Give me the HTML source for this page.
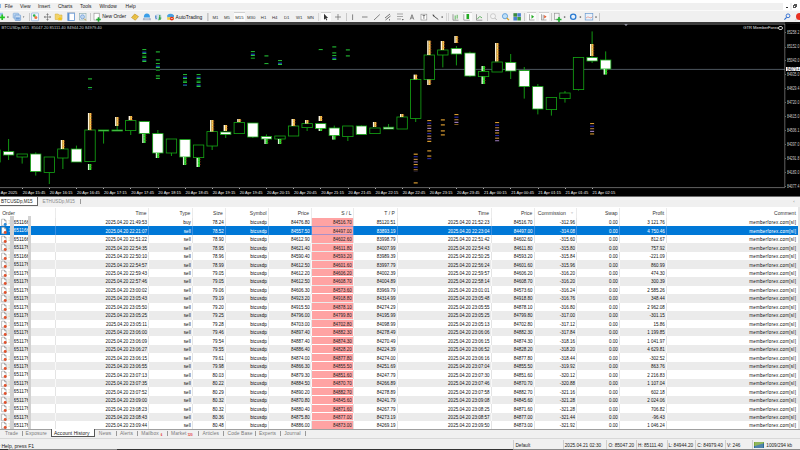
<!DOCTYPE html><html><head><meta charset="utf-8"><style>
*{box-sizing:border-box}
html,body{margin:0;padding:0;width:800px;height:450px;overflow:hidden;background:#f0f0f0;font-family:"Liberation Sans",sans-serif;}
.a{position:absolute}
.t{position:absolute;white-space:nowrap;line-height:1}
.r{text-align:right}
.k{-webkit-text-stroke:0.02px currentColor}
</style></head><body>

<div class="a" style="left:0;top:0;width:800px;height:2.5px;background:#fff"></div>
<div class="a" style="left:0;top:2.5px;width:800px;height:8.3px;background:#f0f0f0"></div>
<div class="a" style="left:0;top:9.8px;width:800px;height:0.9px;background:#fafafa"></div>
<div class="t" style="left:4.8px;top:4.6px;font-size:4.9px;color:#222">File</div>
<div class="t" style="left:20px;top:4.6px;font-size:4.9px;color:#222">View</div>
<div class="t" style="left:38px;top:4.6px;font-size:4.9px;color:#222">Insert</div>
<div class="t" style="left:58px;top:4.6px;font-size:4.9px;color:#222">Charts</div>
<div class="t" style="left:80px;top:4.6px;font-size:4.9px;color:#222">Tools</div>
<div class="t" style="left:99.4px;top:4.6px;font-size:4.9px;color:#222">Window</div>
<div class="t" style="left:125.6px;top:4.6px;font-size:4.9px;color:#222">Help</div>
<div class="a" style="left:0;top:3.5px;width:1.2px;height:4.5px;background:#8ab8e8"></div>
<div class="a" style="left:783px;top:2.5px;width:7px;height:7px;background:#fff"></div>
<div class="a" style="left:785.5px;top:7px;width:2.5px;height:0.8px;background:#333"></div>
<div class="a" style="left:792px;top:2.5px;width:8px;height:7px;background:#fff"></div>
<div class="a" style="left:794px;top:4.2px;width:2.6px;height:2.6px;border:0.6px solid #555"></div>
<div class="a" style="left:793.2px;top:5.2px;width:2.6px;height:2.6px;border:0.6px solid #555;background:#fff"></div>
<div class="a" style="left:0;top:11.2px;width:800px;height:10.8px;background:#f0f0f0"></div>
<div class="a" style="left:67px;top:12px;width:8px;height:9.2px;background:#fbfbfb;border-top:0.6px solid #d0d0d0"></div>
<div class="a" style="left:234.4px;top:12px;width:10.349999999999994px;height:9.2px;background:#fbfbfb;border-top:0.6px solid #d0d0d0"></div>
<div class="a" style="left:321px;top:12px;width:10px;height:9.2px;background:#fbfbfb;border-top:0.6px solid #d0d0d0"></div>
<div class="a" style="left:462.5px;top:12px;width:9.5px;height:9.2px;background:#fbfbfb;border-top:0.6px solid #d0d0d0"></div>
<div class="a" style="left:527px;top:12px;width:9px;height:9.2px;background:#fbfbfb;border-top:0.6px solid #d0d0d0"></div>
<div class="a" style="left:538.75px;top:12px;width:10.0px;height:9.2px;background:#fbfbfb;border-top:0.6px solid #d0d0d0"></div>
<div class="a" style="left:28.5px;top:12.5px;width:0.7px;height:8.5px;background:#c8c8c8"></div>
<div class="a" style="left:90px;top:12.5px;width:0.7px;height:8.5px;background:#c8c8c8"></div>
<div class="a" style="left:206.5px;top:12.5px;width:0.7px;height:8.5px;background:#c8c8c8"></div>
<div class="a" style="left:345.6px;top:12.5px;width:0.7px;height:8.5px;background:#c8c8c8"></div>
<div class="a" style="left:486.5px;top:12.5px;width:0.7px;height:8.5px;background:#c8c8c8"></div>
<div class="a" style="left:524px;top:12.5px;width:0.7px;height:8.5px;background:#c8c8c8"></div>
<div class="a" style="left:551px;top:12.5px;width:0.7px;height:8.5px;background:#c8c8c8"></div>
<div class="a" style="left:599.4px;top:12.5px;width:0.7px;height:8.5px;background:#c8c8c8"></div>
<div class="a" style="left:208.2px;top:12.5px;width:1.3px;height:8.5px;background:#d6d6d6"></div>
<div class="a" style="left:317.6px;top:12.5px;width:1.3px;height:8.5px;background:#d6d6d6"></div>
<div class="a" style="left:446.2px;top:12.5px;width:1.3px;height:8.5px;background:#d6d6d6"></div>
<div class="a" style="left:447.6px;top:12.5px;width:1.3px;height:8.5px;background:#d6d6d6"></div>
<div class="t" style="left:212.5px;top:16.0px;font-size:4.3px;color:#333">M1</div>
<div class="t" style="left:224px;top:16.0px;font-size:4.3px;color:#333">M5</div>
<div class="t" style="left:235.2px;top:16.0px;font-size:4.3px;color:#333">M15</div>
<div class="t" style="left:247px;top:16.0px;font-size:4.3px;color:#333">M30</div>
<div class="t" style="left:260.8px;top:16.0px;font-size:4.3px;color:#333">H1</div>
<div class="t" style="left:272px;top:16.0px;font-size:4.3px;color:#333">H4</div>
<div class="t" style="left:284px;top:16.0px;font-size:4.3px;color:#333">D1</div>
<div class="t" style="left:296px;top:16.0px;font-size:4.3px;color:#333">W1</div>
<div class="t" style="left:307.2px;top:16.0px;font-size:4.3px;color:#333">MN</div>
<div class="t" style="left:102.2px;top:15.4px;font-size:4.95px;color:#111">New Order</div>
<div class="t" style="left:175.6px;top:15.6px;font-size:4.95px;color:#111">AutoTrading</div>
<svg class="a" style="left:0;top:0" width="800" height="25" viewBox="0 0 800 25"><rect x="-1" y="12.8" width="4" height="3" fill="#9cc4ec"/><path d="M-0.5 17.3 h5.4 M2.2 14.6 v5.4" stroke="#22c422" stroke-width="1.7"/><rect x="7.2" y="16.4" width="1.4" height="1.3" fill="#555"/><rect x="13.2" y="13.2" width="5.5" height="5" rx="0.6" fill="#b8d4f0" stroke="#7aa6d8" stroke-width="0.6"/><rect x="15" y="15" width="5.6" height="5.5" rx="0.6" fill="#c8dcf2" stroke="#5e90cc" stroke-width="0.6"/><rect x="15.8" y="17.4" width="4" height="2.2" fill="#6f9fd8"/><path d="M22.8 16.4 h1.6 l-0.8 1.3z" fill="#555"/><rect x="31.5" y="13" width="7" height="7.8" rx="0.6" fill="#eef4fb" stroke="#8fb4de" stroke-width="0.7"/><circle cx="34.2" cy="15.6" r="1.3" fill="#2db34a"/><circle cx="35.8" cy="17.6" r="1.5" fill="#f07840"/><path d="M47.5 14.6 v4.8 M45.1 17 h4.8" stroke="#777" stroke-width="0.7"/><path d="M47.5 13.3 l1.3 1.5 h-2.6z M47.5 20.7 l1.3 -1.5 h-2.6z M43.8 17 l1.5 -1.3 v2.6z M51.2 17 l-1.5 -1.3 v2.6z" fill="#666"/><path d="M55.2 14 h3 l0.8 1 h3 v4.5 h-6.8z" fill="#f1d36a" stroke="#d4aa30" stroke-width="0.5"/><path d="M60 16.5 l0.8 1.5 l1.6 0.2 l-1.2 1.1 l0.3 1.6 l-1.5 -0.8 l-1.5 0.8 l0.3 -1.6 l-1.2 -1.1 l1.6 -0.2z" fill="#f5c518"/><rect x="67.8" y="13.2" width="6.6" height="7.3" fill="#fff" stroke="#5a8fd0" stroke-width="0.8"/><rect x="67.8" y="13.2" width="1.6" height="7.3" fill="#5a8fd0"/><rect x="79.5" y="13.5" width="6.5" height="6.5" fill="#e8eef6" stroke="#8aa" stroke-width="0.6"/><circle cx="82.5" cy="16.8" r="2" fill="#bcd6f0" stroke="#5a8fd0" stroke-width="0.6"/><path d="M84 18.5 l2 2" stroke="#c89020" stroke-width="0.9"/><rect x="94" y="13.2" width="5.2" height="6.8" fill="#fff" stroke="#8a8a8a" stroke-width="0.6"/><path d="M96.2 19.5 h4.6 M98.5 17.2 v4.6" stroke="#22aa33" stroke-width="1.6"/><path d="M131.5 17.5 l3.2 -3.5 l3.8 2.6 l-3.2 3.6z" fill="#f0c84a" stroke="#b88a20" stroke-width="0.6"/><path d="M133.2 17 l2.2 -1.8 M134.2 18 l2.2 -1.8" stroke="#c89a28" stroke-width="0.5"/><path d="M143.8 17.6 q0 -4.2 3.1 -4.2 q3.1 0 3.1 4.2z" fill="#3a9ee8"/><path d="M143.2 18 h7.4 l0.4 2.2 h-8.2z" fill="#a8b4c8"/><path d="M144.6 18.9 h4.6" stroke="#e8eef4" stroke-width="0.6"/><circle cx="158.5" cy="17" r="3.3" fill="#d4e0ec"/><path d="M156 15.5 q-0.8 2 0.3 3.6" stroke="#3a78c8" stroke-width="1.2" fill="none"/><path d="M159.8 15 v3.5 l-1 -0.8 M159.8 18.5 l1 -0.8" stroke="#30a040" stroke-width="1.1" fill="none"/><path d="M158.3 19.8 q2 0.2 3 -1.5" stroke="#40b050" stroke-width="1" fill="none"/><path d="M167.2 15.2 q3.2 -2.8 6.8 0 v2.2 h-6.8z" fill="#4aa0e0"/><path d="M167.2 17.2 h6.8 v2.6 h-6.8z" fill="#f2cc40"/><circle cx="171.8" cy="18.6" r="1.9" fill="#e02818"/><path d="M170.8 18.6 h2" stroke="#fff" stroke-width="0.7"/><path d="M324 13.8 v6 l1.4 -1.3 l1.1 2 l0.8 -0.4 l-1 -2 l1.8 0z" fill="#333"/><path d="M335 17 h6 M338 14 v6" stroke="#555" stroke-width="0.6"/><path d="M352.6 14.4 v5.6" stroke="#555" stroke-width="0.7"/><path d="M362 17 h5.5" stroke="#555" stroke-width="0.7"/><path d="M374 20 l5.8 -5.5" stroke="#555" stroke-width="0.7"/><path d="M385 18 l5 -4 M385.5 20 l5 -4" stroke="#666" stroke-width="0.9"/><path d="M389.5 19 v1.5" stroke="#333" stroke-width="0.6"/><path d="M397 14 h6 M397 16.5 h6 M397 19 h4" stroke="#888" stroke-width="0.7"/><path d="M401.8 19 l1 1.4 l1 -1.4z" fill="#555"/><path d="M410.2 19.5 l1.8 -4.8 l1.8 4.8 M411 18 h2" fill="none" stroke="#555" stroke-width="0.7"/><rect x="421" y="14.2" width="5.8" height="5.8" fill="#fff" stroke="#888" stroke-width="0.6"/><path d="M422.6 15.5 h2.6 M423.9 15.5 v3.4" stroke="#555" stroke-width="0.7"/><path d="M432.8 15.3 l5.5 4.2" stroke="#555" stroke-width="1"/><path d="M432.6 14.6 l2 0.4 l-1.4 1.4z" fill="#444"/><rect x="441.5" y="16.4" width="1.4" height="1.3" fill="#555"/><path d="M453 14.2 v6 h5.5" stroke="#666" stroke-width="0.6" fill="none"/><path d="M455.2 15.5 v4 M457.2 14.8 v3.8" stroke="#22a020" stroke-width="0.7"/><path d="M463.8 14.2 v6 h6" stroke="#666" stroke-width="0.6" fill="none"/><rect x="466.5" y="14" width="2.6" height="5" fill="#22aa22"/><path d="M476.5 14.2 v6 h5.8" stroke="#666" stroke-width="0.6" fill="none"/><path d="M477.5 19 q2 -4 4.5 -1" stroke="#2a9a2a" stroke-width="0.7" fill="none"/><circle cx="493" cy="16.2" r="2.5" fill="#f4f4f4" stroke="#bbb" stroke-width="0.7"/><path d="M494.8 18 l2 2" stroke="#bbb" stroke-width="1"/><circle cx="505" cy="16.2" r="2.6" fill="#bfe0f8" stroke="#4f94d8" stroke-width="0.8"/><path d="M506.8 18 l2.2 2.2" stroke="#d8a020" stroke-width="1.2"/><rect x="513.4" y="13.2" width="3.6" height="3.5" fill="#3a8a40"/><rect x="517.3" y="13.2" width="3.6" height="3.5" fill="#4a80d0"/><rect x="513.4" y="17" width="3.6" height="3.5" fill="#4a80d0"/><rect x="517.3" y="17" width="3.6" height="3.5" fill="#3a9a40"/><path d="M529.5 14.2 v6 M529.5 20 h5" stroke="#777" stroke-width="0.6"/><path d="M531.5 14.8 l2.6 2 l-2.6 2z" fill="#22aa22"/><path d="M541.5 14.2 v6 M541.5 20 h5" stroke="#777" stroke-width="0.6"/><path d="M543.2 14.8 v5" stroke="#666" stroke-width="0.6"/><path d="M544.2 15 l2.4 1.8 l-2.4 1.8z" fill="#e05a30"/><rect x="554.5" y="13.2" width="4.6" height="6.4" fill="#f4f4f4" stroke="#888" stroke-width="0.6"/><path d="M556.5 19.5 h5 M559 17 v5" stroke="#22b030" stroke-width="1.6"/><rect x="563.9" y="16.4" width="1.4" height="1.3" fill="#555"/><circle cx="573.2" cy="16.8" r="3.3" fill="#2a7ad0"/><circle cx="573.2" cy="16.8" r="2" fill="#e8f2fc"/><rect x="579.7" y="16.4" width="1.4" height="1.3" fill="#555"/><rect x="585.2" y="13.5" width="7.6" height="6.5" fill="#eaf2fb" stroke="#6a9ad0" stroke-width="0.7"/><path d="M586 18 q2 -2 3.5 -0.5 t3 -1" stroke="#e06040" stroke-width="0.5" fill="none"/><rect x="595.3" y="16.4" width="1.4" height="1.3" fill="#555"/><circle cx="788" cy="15.8" r="1.9" fill="none" stroke="#2a6ad0" stroke-width="0.9"/><path d="M786.6 17.3 l-2.2 2.3" stroke="#2a6ad0" stroke-width="1.1"/><circle cx="799.5" cy="16.5" r="3.5" fill="#e83020"/><path d="M796 19 l-1.5 1.5 l2.5 -0.5z" fill="#ccc"/></svg>
<div class="a" style="left:0;top:22px;width:800px;height:174px;background:#000"></div>
<div class="a" style="left:0;top:22px;width:785px;height:2.6px;background:#3c3c3c"></div>
<div class="a" style="left:785px;top:22px;width:15px;height:2.2px;background:#111"></div>
<svg class="a" style="left:0;top:0" width="800" height="200" viewBox="0 0 800 200"><path d="M0 69.4 H785" stroke="#6f7a86" stroke-width="0.7"/><rect x="-10.17" y="150" width="10.4" height="12.00" fill="#000000" stroke="#14a814" stroke-width="0.8"/><path d="M8.60 139 V151.6" stroke="#14a814" stroke-width="0.9"/><path d="M8.60 155 V160" stroke="#14a814" stroke-width="0.9"/><rect x="3.40" y="151.6" width="10.4" height="3.40" fill="#ffffff" stroke="#14a814" stroke-width="0.8"/><path d="M22.17 157 V163.6" stroke="#14a814" stroke-width="0.9"/><rect x="16.97" y="154" width="10.4" height="3.00" fill="#000000" stroke="#14a814" stroke-width="0.8"/><path d="M35.74 152.4 V154" stroke="#14a814" stroke-width="0.9"/><path d="M35.74 171.6 V175.6" stroke="#14a814" stroke-width="0.9"/><rect x="30.54" y="154" width="10.4" height="17.60" fill="#ffffff" stroke="#14a814" stroke-width="0.8"/><path d="M49.31 172.4 V184" stroke="#14a814" stroke-width="0.9"/><rect x="44.11" y="157" width="10.4" height="15.40" fill="#000000" stroke="#14a814" stroke-width="0.8"/><path d="M62.88 158 V169" stroke="#14a814" stroke-width="0.9"/><rect x="57.68" y="149" width="10.4" height="9.00" fill="#000000" stroke="#14a814" stroke-width="0.8"/><path d="M76.45 145.6 V149" stroke="#14a814" stroke-width="0.9"/><rect x="71.25" y="149" width="10.4" height="13.00" fill="#ffffff" stroke="#14a814" stroke-width="0.8"/><path d="M90.02 161.6 V162" stroke="#14a814" stroke-width="0.9"/><rect x="84.82" y="130" width="10.4" height="31.60" fill="#000000" stroke="#14a814" stroke-width="0.8"/><path d="M103.59 131 V143.6" stroke="#14a814" stroke-width="0.9"/><rect x="98.39" y="130" width="10.4" height="1.00" fill="#ffffff" stroke="#14a814" stroke-width="0.8"/><path d="M117.16 123 V130" stroke="#14a814" stroke-width="0.9"/><rect x="111.96" y="130" width="10.4" height="1.00" fill="#ffffff" stroke="#14a814" stroke-width="0.8"/><path d="M130.73 130.6 V135" stroke="#14a814" stroke-width="0.9"/><rect x="125.53" y="120.6" width="10.4" height="10.00" fill="#000000" stroke="#14a814" stroke-width="0.8"/><path d="M144.30 121 V121.6" stroke="#14a814" stroke-width="0.9"/><rect x="139.10" y="121.6" width="10.4" height="12.00" fill="#ffffff" stroke="#14a814" stroke-width="0.8"/><path d="M157.87 130 V133.6" stroke="#14a814" stroke-width="0.9"/><rect x="152.67" y="133.6" width="10.4" height="19.40" fill="#ffffff" stroke="#14a814" stroke-width="0.8"/><path d="M171.44 153 V156" stroke="#14a814" stroke-width="0.9"/><rect x="166.24" y="139" width="10.4" height="14.00" fill="#000000" stroke="#14a814" stroke-width="0.8"/><rect x="179.81" y="139.6" width="10.4" height="17.40" fill="#ffffff" stroke="#14a814" stroke-width="0.8"/><rect x="193.38" y="145" width="10.4" height="12.60" fill="#000000" stroke="#14a814" stroke-width="0.8"/><path d="M212.15 146 V150" stroke="#14a814" stroke-width="0.9"/><rect x="206.95" y="131.6" width="10.4" height="14.40" fill="#000000" stroke="#14a814" stroke-width="0.8"/><path d="M225.72 134.4 V138" stroke="#14a814" stroke-width="0.9"/><rect x="220.52" y="132" width="10.4" height="2.40" fill="#ffffff" stroke="#14a814" stroke-width="0.8"/><rect x="234.09" y="122.4" width="10.4" height="11.20" fill="#000000" stroke="#14a814" stroke-width="0.8"/><path d="M252.86 137 V138" stroke="#14a814" stroke-width="0.9"/><rect x="247.66" y="123" width="10.4" height="14.00" fill="#ffffff" stroke="#14a814" stroke-width="0.8"/><path d="M266.43 134.4 V136.4" stroke="#14a814" stroke-width="0.9"/><rect x="261.23" y="136.4" width="10.4" height="2.60" fill="#ffffff" stroke="#14a814" stroke-width="0.8"/><rect x="274.80" y="136" width="10.4" height="3.00" fill="#000000" stroke="#14a814" stroke-width="0.8"/><rect x="288.37" y="126" width="10.4" height="10.00" fill="#000000" stroke="#14a814" stroke-width="0.8"/><path d="M307.14 127.6 V131" stroke="#14a814" stroke-width="0.9"/><rect x="301.94" y="123.6" width="10.4" height="4.00" fill="#000000" stroke="#14a814" stroke-width="0.8"/><rect x="315.51" y="123.6" width="10.4" height="5.00" fill="#ffffff" stroke="#14a814" stroke-width="0.8"/><path d="M334.28 125.6 V128" stroke="#14a814" stroke-width="0.9"/><rect x="329.08" y="128" width="10.4" height="7.60" fill="#ffffff" stroke="#14a814" stroke-width="0.8"/><path d="M347.85 136.6 V141" stroke="#14a814" stroke-width="0.9"/><rect x="342.65" y="126" width="10.4" height="10.60" fill="#000000" stroke="#14a814" stroke-width="0.8"/><path d="M361.42 125.4 V126" stroke="#14a814" stroke-width="0.9"/><rect x="356.22" y="126" width="10.4" height="8.40" fill="#ffffff" stroke="#14a814" stroke-width="0.8"/><rect x="369.79" y="128" width="10.4" height="5.60" fill="#000000" stroke="#14a814" stroke-width="0.8"/><path d="M388.56 124 V127.2" stroke="#14a814" stroke-width="0.9"/><rect x="383.36" y="127.2" width="10.4" height="1.80" fill="#ffffff" stroke="#14a814" stroke-width="0.8"/><rect x="396.93" y="117" width="10.4" height="12.00" fill="#000000" stroke="#14a814" stroke-width="0.8"/><path d="M415.70 118.4 V122" stroke="#14a814" stroke-width="0.9"/><rect x="410.50" y="79.4" width="10.4" height="39.00" fill="#000000" stroke="#14a814" stroke-width="0.8"/><rect x="424.07" y="55" width="10.4" height="24.60" fill="#000000" stroke="#14a814" stroke-width="0.8"/><path d="M442.84 55 V67.4" stroke="#14a814" stroke-width="0.9"/><rect x="437.64" y="50" width="10.4" height="5.00" fill="#000000" stroke="#14a814" stroke-width="0.8"/><path d="M456.41 46 V48.4" stroke="#14a814" stroke-width="0.9"/><path d="M456.41 54 V65.4" stroke="#14a814" stroke-width="0.9"/><rect x="451.21" y="48.4" width="10.4" height="5.60" fill="#ffffff" stroke="#14a814" stroke-width="0.8"/><path d="M469.98 51.6 V53" stroke="#14a814" stroke-width="0.9"/><path d="M469.98 76 V77" stroke="#14a814" stroke-width="0.9"/><rect x="464.78" y="53" width="10.4" height="23.00" fill="#ffffff" stroke="#14a814" stroke-width="0.8"/><path d="M483.55 66 V71.4" stroke="#14a814" stroke-width="0.9"/><rect x="478.35" y="71.4" width="10.4" height="5.20" fill="#000000" stroke="#14a814" stroke-width="0.8"/><rect x="491.92" y="62" width="10.4" height="10.00" fill="#000000" stroke="#14a814" stroke-width="0.8"/><path d="M510.69 54 V62.4" stroke="#14a814" stroke-width="0.9"/><path d="M510.69 71 V79" stroke="#14a814" stroke-width="0.9"/><rect x="505.49" y="62.4" width="10.4" height="8.60" fill="#ffffff" stroke="#14a814" stroke-width="0.8"/><path d="M524.26 67 V70.6" stroke="#14a814" stroke-width="0.9"/><path d="M524.26 86.6 V98.6" stroke="#14a814" stroke-width="0.9"/><rect x="519.06" y="70.6" width="10.4" height="16.00" fill="#ffffff" stroke="#14a814" stroke-width="0.8"/><path d="M537.83 84 V86.6" stroke="#14a814" stroke-width="0.9"/><path d="M537.83 109 V114.4" stroke="#14a814" stroke-width="0.9"/><rect x="532.63" y="86.6" width="10.4" height="22.40" fill="#ffffff" stroke="#14a814" stroke-width="0.8"/><path d="M551.40 109.6 V115.6" stroke="#14a814" stroke-width="0.9"/><rect x="546.20" y="97.4" width="10.4" height="12.20" fill="#000000" stroke="#14a814" stroke-width="0.8"/><path d="M564.97 91 V93" stroke="#14a814" stroke-width="0.9"/><path d="M564.97 98.6 V102.6" stroke="#14a814" stroke-width="0.9"/><rect x="559.77" y="93" width="10.4" height="5.60" fill="#000000" stroke="#14a814" stroke-width="0.8"/><path d="M578.54 89.6 V90.6" stroke="#14a814" stroke-width="0.9"/><rect x="573.34" y="57.4" width="10.4" height="32.20" fill="#000000" stroke="#14a814" stroke-width="0.8"/><path d="M592.11 31.4 V57.4" stroke="#14a814" stroke-width="0.9"/><path d="M592.11 61 V63" stroke="#14a814" stroke-width="0.9"/><rect x="586.91" y="57.4" width="10.4" height="3.60" fill="#ffffff" stroke="#14a814" stroke-width="0.8"/><path d="M605.68 51.4 V60" stroke="#14a814" stroke-width="0.9"/><rect x="600.48" y="60" width="10.4" height="9.00" fill="#ffffff" stroke="#14a814" stroke-width="0.8"/><rect x="60.78" y="140.00" width="1.5" height="9.00" fill="#fff6dc"/><rect x="62.28" y="140.00" width="1.9" height="9.00" fill="#f8cc58"/><rect x="62.28" y="140.80" width="1.9" height="0.7" fill="#ec9a30"/><rect x="64.18" y="140.80" width="0.8" height="0.9" fill="#a83818"/><rect x="62.28" y="143.40" width="1.9" height="0.7" fill="#ec9a30"/><rect x="64.18" y="143.40" width="0.8" height="0.9" fill="#a83818"/><rect x="62.28" y="146.00" width="1.9" height="0.7" fill="#ec9a30"/><rect x="64.18" y="146.00" width="0.8" height="0.9" fill="#a83818"/><rect x="87.92" y="113.00" width="1.5" height="17.00" fill="#fff6dc"/><rect x="89.42" y="113.00" width="1.9" height="17.00" fill="#f8cc58"/><rect x="89.42" y="113.80" width="1.9" height="0.7" fill="#ec9a30"/><rect x="91.32" y="113.80" width="0.8" height="0.9" fill="#a83818"/><rect x="89.42" y="116.40" width="1.9" height="0.7" fill="#ec9a30"/><rect x="91.32" y="116.40" width="0.8" height="0.9" fill="#a83818"/><rect x="89.42" y="119.00" width="1.9" height="0.7" fill="#ec9a30"/><rect x="91.32" y="119.00" width="0.8" height="0.9" fill="#a83818"/><rect x="89.42" y="121.60" width="1.9" height="0.7" fill="#ec9a30"/><rect x="91.32" y="121.60" width="0.8" height="0.9" fill="#a83818"/><rect x="89.42" y="124.20" width="1.9" height="0.7" fill="#ec9a30"/><rect x="91.32" y="124.20" width="0.8" height="0.9" fill="#a83818"/><rect x="89.42" y="126.80" width="1.9" height="0.7" fill="#ec9a30"/><rect x="91.32" y="126.80" width="0.8" height="0.9" fill="#a83818"/><rect x="89.42" y="129.40" width="1.9" height="0.7" fill="#ec9a30"/><rect x="91.32" y="129.40" width="0.8" height="0.9" fill="#a83818"/><rect x="87.92" y="164.00" width="1.5" height="6.00" fill="#d6f6d0"/><rect x="89.42" y="164.00" width="1.9" height="6.00" fill="#34e034"/><rect x="89.42" y="164.80" width="1.9" height="0.7" fill="#18b818"/><rect x="91.32" y="164.80" width="0.8" height="0.9" fill="#902810"/><rect x="89.42" y="167.40" width="1.9" height="0.7" fill="#18b818"/><rect x="91.32" y="167.40" width="0.8" height="0.9" fill="#902810"/><rect x="88.02" y="78.30" width="4" height="1.2" fill="#20b030"/><rect x="88.02" y="87.00" width="4" height="1.30" fill="#20b030"/><rect x="88.02" y="88.30" width="4" height="1.30" fill="#000000"/><rect x="88.02" y="89.60" width="4" height="0.40" fill="#1a3ab0"/><rect x="115.06" y="117.00" width="1.5" height="9.00" fill="#fff6dc"/><rect x="116.56" y="117.00" width="1.9" height="9.00" fill="#f8cc58"/><rect x="116.56" y="117.80" width="1.9" height="0.7" fill="#ec9a30"/><rect x="118.46" y="117.80" width="0.8" height="0.9" fill="#a83818"/><rect x="116.56" y="120.40" width="1.9" height="0.7" fill="#ec9a30"/><rect x="118.46" y="120.40" width="0.8" height="0.9" fill="#a83818"/><rect x="116.56" y="123.00" width="1.9" height="0.7" fill="#ec9a30"/><rect x="118.46" y="123.00" width="0.8" height="0.9" fill="#a83818"/><rect x="128.63" y="116.00" width="1.5" height="4.00" fill="#fff6dc"/><rect x="130.13" y="116.00" width="1.9" height="4.00" fill="#f8cc58"/><rect x="130.13" y="116.80" width="1.9" height="0.7" fill="#ec9a30"/><rect x="132.03" y="116.80" width="0.8" height="0.9" fill="#a83818"/><rect x="130.13" y="119.40" width="1.9" height="0.7" fill="#ec9a30"/><rect x="132.03" y="119.40" width="0.8" height="0.9" fill="#a83818"/><rect x="142.20" y="134.00" width="1.5" height="9.00" fill="#d6f6d0"/><rect x="143.70" y="134.00" width="1.9" height="9.00" fill="#34e034"/><rect x="143.70" y="134.80" width="1.9" height="0.7" fill="#18b818"/><rect x="145.60" y="134.80" width="0.8" height="0.9" fill="#902810"/><rect x="143.70" y="137.40" width="1.9" height="0.7" fill="#18b818"/><rect x="145.60" y="137.40" width="0.8" height="0.9" fill="#902810"/><rect x="143.70" y="140.00" width="1.9" height="0.7" fill="#18b818"/><rect x="145.60" y="140.00" width="0.8" height="0.9" fill="#902810"/><rect x="142.30" y="49.00" width="4" height="1.30" fill="#20b030"/><rect x="142.30" y="50.30" width="4" height="1.30" fill="#000000"/><rect x="142.30" y="51.60" width="4" height="1.30" fill="#1a3ab0"/><rect x="142.30" y="52.90" width="4" height="1.30" fill="#28c838"/><rect x="142.30" y="54.20" width="4" height="1.30" fill="#000000"/><rect x="142.30" y="55.50" width="4" height="1.30" fill="#108020"/><rect x="142.30" y="56.80" width="4" height="1.30" fill="#20b030"/><rect x="142.30" y="58.10" width="4" height="1.30" fill="#000000"/><rect x="142.30" y="59.40" width="4" height="1.30" fill="#1a3ab0"/><rect x="142.30" y="60.70" width="4" height="1.30" fill="#28c838"/><rect x="142.30" y="62.00" width="4" height="1.00" fill="#000000"/><rect x="155.77" y="153.00" width="1.5" height="5.00" fill="#d6f6d0"/><rect x="157.27" y="153.00" width="1.9" height="5.00" fill="#34e034"/><rect x="157.27" y="153.80" width="1.9" height="0.7" fill="#18b818"/><rect x="159.17" y="153.80" width="0.8" height="0.9" fill="#902810"/><rect x="157.27" y="156.40" width="1.9" height="0.7" fill="#18b818"/><rect x="159.17" y="156.40" width="0.8" height="0.9" fill="#902810"/><rect x="155.87" y="51.30" width="4" height="1.2" fill="#20b030"/><rect x="155.87" y="59.30" width="4" height="1.2" fill="#20b030"/><rect x="155.87" y="63.00" width="4" height="1.30" fill="#20b030"/><rect x="155.87" y="64.30" width="4" height="1.30" fill="#000000"/><rect x="155.87" y="65.60" width="4" height="1.30" fill="#1a3ab0"/><rect x="155.87" y="66.90" width="4" height="1.30" fill="#28c838"/><rect x="155.87" y="68.20" width="4" height="1.30" fill="#000000"/><rect x="155.87" y="69.50" width="4" height="1.30" fill="#108020"/><rect x="155.87" y="70.80" width="4" height="0.20" fill="#20b030"/><rect x="155.87" y="75.30" width="4" height="1.2" fill="#20b030"/><rect x="155.87" y="77.80" width="4" height="1.2" fill="#20b030"/><rect x="182.91" y="157.00" width="1.5" height="8.00" fill="#d6f6d0"/><rect x="184.41" y="157.00" width="1.9" height="8.00" fill="#34e034"/><rect x="184.41" y="157.80" width="1.9" height="0.7" fill="#18b818"/><rect x="186.31" y="157.80" width="0.8" height="0.9" fill="#902810"/><rect x="184.41" y="160.40" width="1.9" height="0.7" fill="#18b818"/><rect x="186.31" y="160.40" width="0.8" height="0.9" fill="#902810"/><rect x="184.41" y="163.00" width="1.9" height="0.7" fill="#18b818"/><rect x="186.31" y="163.00" width="0.8" height="0.9" fill="#902810"/><rect x="183.01" y="74.00" width="4" height="1.30" fill="#20b030"/><rect x="183.01" y="75.30" width="4" height="1.30" fill="#000000"/><rect x="183.01" y="76.60" width="4" height="1.30" fill="#1a3ab0"/><rect x="183.01" y="77.90" width="4" height="1.30" fill="#28c838"/><rect x="183.01" y="79.20" width="4" height="1.30" fill="#000000"/><rect x="183.01" y="80.50" width="4" height="1.30" fill="#108020"/><rect x="183.01" y="81.80" width="4" height="1.30" fill="#20b030"/><rect x="183.01" y="83.10" width="4" height="1.30" fill="#000000"/><rect x="183.01" y="84.40" width="4" height="1.30" fill="#1a3ab0"/><rect x="183.01" y="85.70" width="4" height="0.30" fill="#28c838"/><rect x="196.48" y="158.00" width="1.5" height="9.00" fill="#d6f6d0"/><rect x="197.98" y="158.00" width="1.9" height="9.00" fill="#34e034"/><rect x="197.98" y="158.80" width="1.9" height="0.7" fill="#18b818"/><rect x="199.88" y="158.80" width="0.8" height="0.9" fill="#902810"/><rect x="197.98" y="161.40" width="1.9" height="0.7" fill="#18b818"/><rect x="199.88" y="161.40" width="0.8" height="0.9" fill="#902810"/><rect x="197.98" y="164.00" width="1.9" height="0.7" fill="#18b818"/><rect x="199.88" y="164.00" width="0.8" height="0.9" fill="#902810"/><rect x="196.58" y="74.00" width="4" height="1.30" fill="#20b030"/><rect x="196.58" y="75.30" width="4" height="1.30" fill="#000000"/><rect x="196.58" y="76.60" width="4" height="1.30" fill="#1a3ab0"/><rect x="196.58" y="77.90" width="4" height="1.30" fill="#28c838"/><rect x="196.58" y="79.20" width="4" height="1.30" fill="#000000"/><rect x="196.58" y="80.50" width="4" height="1.30" fill="#108020"/><rect x="196.58" y="81.80" width="4" height="1.30" fill="#20b030"/><rect x="196.58" y="83.10" width="4" height="1.30" fill="#000000"/><rect x="196.58" y="84.40" width="4" height="1.30" fill="#1a3ab0"/><rect x="196.58" y="85.70" width="4" height="1.30" fill="#28c838"/><rect x="196.58" y="87.00" width="4" height="1.00" fill="#000000"/><rect x="210.05" y="120.00" width="1.5" height="11.60" fill="#fff6dc"/><rect x="211.55" y="120.00" width="1.9" height="11.60" fill="#f8cc58"/><rect x="211.55" y="120.80" width="1.9" height="0.7" fill="#ec9a30"/><rect x="213.45" y="120.80" width="0.8" height="0.9" fill="#a83818"/><rect x="211.55" y="123.40" width="1.9" height="0.7" fill="#ec9a30"/><rect x="213.45" y="123.40" width="0.8" height="0.9" fill="#a83818"/><rect x="211.55" y="126.00" width="1.9" height="0.7" fill="#ec9a30"/><rect x="213.45" y="126.00" width="0.8" height="0.9" fill="#a83818"/><rect x="211.55" y="128.60" width="1.9" height="0.7" fill="#ec9a30"/><rect x="213.45" y="128.60" width="0.8" height="0.9" fill="#a83818"/><rect x="223.62" y="125.00" width="1.5" height="6.00" fill="#fff6dc"/><rect x="225.12" y="125.00" width="1.9" height="6.00" fill="#f8cc58"/><rect x="225.12" y="125.80" width="1.9" height="0.7" fill="#ec9a30"/><rect x="227.02" y="125.80" width="0.8" height="0.9" fill="#a83818"/><rect x="225.12" y="128.40" width="1.9" height="0.7" fill="#ec9a30"/><rect x="227.02" y="128.40" width="0.8" height="0.9" fill="#a83818"/><rect x="237.19" y="119.00" width="1.5" height="3.00" fill="#fff6dc"/><rect x="238.69" y="119.00" width="1.9" height="3.00" fill="#f8cc58"/><rect x="238.69" y="119.80" width="1.9" height="0.7" fill="#ec9a30"/><rect x="240.59" y="119.80" width="0.8" height="0.9" fill="#a83818"/><rect x="250.86" y="51.00" width="4" height="1.30" fill="#20b030"/><rect x="250.86" y="52.30" width="4" height="1.30" fill="#000000"/><rect x="250.86" y="53.60" width="4" height="1.30" fill="#1a3ab0"/><rect x="250.86" y="54.90" width="4" height="1.30" fill="#28c838"/><rect x="250.86" y="56.20" width="4" height="1.30" fill="#000000"/><rect x="250.86" y="57.50" width="4" height="1.30" fill="#108020"/><rect x="250.86" y="58.80" width="4" height="0.20" fill="#20b030"/><rect x="264.33" y="139.00" width="1.5" height="5.00" fill="#d6f6d0"/><rect x="265.83" y="139.00" width="1.9" height="5.00" fill="#34e034"/><rect x="265.83" y="139.80" width="1.9" height="0.7" fill="#18b818"/><rect x="267.73" y="139.80" width="0.8" height="0.9" fill="#902810"/><rect x="265.83" y="142.40" width="1.9" height="0.7" fill="#18b818"/><rect x="267.73" y="142.40" width="0.8" height="0.9" fill="#902810"/><rect x="264.43" y="55.30" width="4" height="1.2" fill="#20b030"/><rect x="264.43" y="63.00" width="4" height="1.30" fill="#20b030"/><rect x="264.43" y="64.30" width="4" height="0.70" fill="#000000"/><rect x="277.90" y="139.00" width="1.5" height="5.00" fill="#d6f6d0"/><rect x="279.40" y="139.00" width="1.9" height="5.00" fill="#34e034"/><rect x="279.40" y="139.80" width="1.9" height="0.7" fill="#18b818"/><rect x="281.30" y="139.80" width="0.8" height="0.9" fill="#902810"/><rect x="279.40" y="142.40" width="1.9" height="0.7" fill="#18b818"/><rect x="281.30" y="142.40" width="0.8" height="0.9" fill="#902810"/><rect x="278.00" y="60.00" width="4" height="1.30" fill="#20b030"/><rect x="278.00" y="61.30" width="4" height="1.30" fill="#000000"/><rect x="278.00" y="62.60" width="4" height="1.30" fill="#1a3ab0"/><rect x="278.00" y="63.90" width="4" height="1.10" fill="#28c838"/><rect x="291.47" y="119.00" width="1.5" height="7.00" fill="#fff6dc"/><rect x="292.97" y="119.00" width="1.9" height="7.00" fill="#f8cc58"/><rect x="292.97" y="119.80" width="1.9" height="0.7" fill="#ec9a30"/><rect x="294.87" y="119.80" width="0.8" height="0.9" fill="#a83818"/><rect x="292.97" y="122.40" width="1.9" height="0.7" fill="#ec9a30"/><rect x="294.87" y="122.40" width="0.8" height="0.9" fill="#a83818"/><rect x="292.97" y="125.00" width="1.9" height="0.7" fill="#ec9a30"/><rect x="294.87" y="125.00" width="0.8" height="0.9" fill="#a83818"/><rect x="305.04" y="120.00" width="1.5" height="3.60" fill="#fff6dc"/><rect x="306.54" y="120.00" width="1.9" height="3.60" fill="#f8cc58"/><rect x="306.54" y="120.80" width="1.9" height="0.7" fill="#ec9a30"/><rect x="308.44" y="120.80" width="0.8" height="0.9" fill="#a83818"/><rect x="318.61" y="116.00" width="1.5" height="5.00" fill="#fff6dc"/><rect x="320.11" y="116.00" width="1.9" height="5.00" fill="#f8cc58"/><rect x="320.11" y="116.80" width="1.9" height="0.7" fill="#ec9a30"/><rect x="322.01" y="116.80" width="0.8" height="0.9" fill="#a83818"/><rect x="320.11" y="119.40" width="1.9" height="0.7" fill="#ec9a30"/><rect x="322.01" y="119.40" width="0.8" height="0.9" fill="#a83818"/><rect x="318.61" y="128.60" width="1.5" height="2.40" fill="#d6f6d0"/><rect x="320.11" y="128.60" width="1.9" height="2.40" fill="#34e034"/><rect x="320.11" y="129.40" width="1.9" height="0.7" fill="#18b818"/><rect x="322.01" y="129.40" width="0.8" height="0.9" fill="#902810"/><rect x="318.71" y="49.00" width="4" height="1.30" fill="#20b030"/><rect x="318.71" y="50.30" width="4" height="0.70" fill="#000000"/><rect x="332.18" y="135.60" width="1.5" height="4.00" fill="#d6f6d0"/><rect x="333.68" y="135.60" width="1.9" height="4.00" fill="#34e034"/><rect x="333.68" y="136.40" width="1.9" height="0.7" fill="#18b818"/><rect x="335.58" y="136.40" width="0.8" height="0.9" fill="#902810"/><rect x="332.28" y="46.30" width="4" height="1.2" fill="#20b030"/><rect x="332.28" y="52.30" width="4" height="1.2" fill="#20b030"/><rect x="332.28" y="55.00" width="4" height="1.30" fill="#20b030"/><rect x="332.28" y="56.30" width="4" height="1.30" fill="#000000"/><rect x="332.28" y="57.60" width="4" height="1.30" fill="#1a3ab0"/><rect x="332.28" y="58.90" width="4" height="1.10" fill="#28c838"/><rect x="345.85" y="49.30" width="4" height="1.2" fill="#20b030"/><rect x="345.85" y="55.30" width="4" height="1.2" fill="#20b030"/><rect x="372.89" y="122.00" width="1.5" height="5.00" fill="#fff6dc"/><rect x="374.39" y="122.00" width="1.9" height="5.00" fill="#f8cc58"/><rect x="374.39" y="122.80" width="1.9" height="0.7" fill="#ec9a30"/><rect x="376.29" y="122.80" width="0.8" height="0.9" fill="#a83818"/><rect x="374.39" y="125.40" width="1.9" height="0.7" fill="#ec9a30"/><rect x="376.29" y="125.40" width="0.8" height="0.9" fill="#a83818"/><rect x="400.03" y="114.00" width="1.5" height="3.00" fill="#fff6dc"/><rect x="401.53" y="114.00" width="1.9" height="3.00" fill="#f8cc58"/><rect x="401.53" y="114.80" width="1.9" height="0.7" fill="#ec9a30"/><rect x="403.43" y="114.80" width="0.8" height="0.9" fill="#a83818"/><rect x="413.60" y="74.60" width="1.5" height="4.80" fill="#fff6dc"/><rect x="415.10" y="74.60" width="1.9" height="4.80" fill="#f8cc58"/><rect x="415.10" y="75.40" width="1.9" height="0.7" fill="#ec9a30"/><rect x="417.00" y="75.40" width="0.8" height="0.9" fill="#a83818"/><rect x="415.10" y="78.00" width="1.9" height="0.7" fill="#ec9a30"/><rect x="417.00" y="78.00" width="0.8" height="0.9" fill="#a83818"/><rect x="413.70" y="153.60" width="4" height="1.30" fill="#d89a30"/><rect x="413.70" y="154.90" width="4" height="1.30" fill="#000000"/><rect x="413.70" y="156.20" width="4" height="1.30" fill="#2828a8"/><rect x="413.70" y="157.50" width="4" height="1.30" fill="#000000"/><rect x="413.70" y="158.80" width="4" height="1.30" fill="#b88040"/><rect x="413.70" y="160.10" width="4" height="1.30" fill="#000000"/><rect x="413.70" y="161.40" width="4" height="1.30" fill="#9878b8"/><rect x="413.70" y="162.70" width="4" height="1.30" fill="#000000"/><rect x="413.70" y="164.00" width="4" height="1.30" fill="#d89a30"/><rect x="413.70" y="165.30" width="4" height="1.30" fill="#000000"/><rect x="413.70" y="166.60" width="4" height="1.30" fill="#2828a8"/><rect x="413.70" y="167.90" width="4" height="1.30" fill="#000000"/><rect x="413.70" y="169.20" width="4" height="1.30" fill="#b88040"/><rect x="413.70" y="170.50" width="4" height="1.30" fill="#000000"/><rect x="413.70" y="171.80" width="4" height="0.20" fill="#9878b8"/><rect x="413.70" y="182.30" width="4" height="1.2" fill="#d89a30"/><rect x="427.17" y="40.60" width="1.5" height="14.40" fill="#fff6dc"/><rect x="428.67" y="40.60" width="1.9" height="14.40" fill="#f8cc58"/><rect x="428.67" y="41.40" width="1.9" height="0.7" fill="#ec9a30"/><rect x="430.57" y="41.40" width="0.8" height="0.9" fill="#a83818"/><rect x="428.67" y="44.00" width="1.9" height="0.7" fill="#ec9a30"/><rect x="430.57" y="44.00" width="0.8" height="0.9" fill="#a83818"/><rect x="428.67" y="46.60" width="1.9" height="0.7" fill="#ec9a30"/><rect x="430.57" y="46.60" width="0.8" height="0.9" fill="#a83818"/><rect x="428.67" y="49.20" width="1.9" height="0.7" fill="#ec9a30"/><rect x="430.57" y="49.20" width="0.8" height="0.9" fill="#a83818"/><rect x="428.67" y="51.80" width="1.9" height="0.7" fill="#ec9a30"/><rect x="430.57" y="51.80" width="0.8" height="0.9" fill="#a83818"/><rect x="427.17" y="79.60" width="1.5" height="5.40" fill="#fff6dc"/><rect x="428.67" y="79.60" width="1.9" height="5.40" fill="#f8cc58"/><rect x="428.67" y="80.40" width="1.9" height="0.7" fill="#ec9a30"/><rect x="430.57" y="80.40" width="0.8" height="0.9" fill="#a83818"/><rect x="428.67" y="83.00" width="1.9" height="0.7" fill="#ec9a30"/><rect x="430.57" y="83.00" width="0.8" height="0.9" fill="#a83818"/><rect x="427.27" y="120.00" width="4" height="1.30" fill="#d89a30"/><rect x="427.27" y="121.30" width="4" height="1.30" fill="#000000"/><rect x="427.27" y="122.60" width="4" height="1.30" fill="#2828a8"/><rect x="427.27" y="123.90" width="4" height="1.30" fill="#000000"/><rect x="427.27" y="125.20" width="4" height="1.30" fill="#b88040"/><rect x="427.27" y="126.50" width="4" height="1.30" fill="#000000"/><rect x="427.27" y="127.80" width="4" height="1.30" fill="#9878b8"/><rect x="427.27" y="129.10" width="4" height="1.30" fill="#000000"/><rect x="427.27" y="130.40" width="4" height="1.30" fill="#d89a30"/><rect x="427.27" y="131.70" width="4" height="1.30" fill="#000000"/><rect x="427.27" y="133.00" width="4" height="1.30" fill="#2828a8"/><rect x="427.27" y="134.30" width="4" height="1.30" fill="#000000"/><rect x="427.27" y="135.60" width="4" height="1.30" fill="#b88040"/><rect x="427.27" y="136.90" width="4" height="1.30" fill="#000000"/><rect x="427.27" y="138.20" width="4" height="1.30" fill="#9878b8"/><rect x="427.27" y="139.50" width="4" height="1.30" fill="#000000"/><rect x="427.27" y="140.80" width="4" height="1.20" fill="#d89a30"/><rect x="427.27" y="150.30" width="4" height="1.2" fill="#d89a30"/><rect x="427.27" y="155.50" width="4" height="1.30" fill="#d89a30"/><rect x="427.27" y="156.80" width="4" height="1.30" fill="#000000"/><rect x="427.27" y="158.10" width="4" height="1.30" fill="#2828a8"/><rect x="427.27" y="159.40" width="4" height="0.60" fill="#000000"/><rect x="440.74" y="41.00" width="1.5" height="9.00" fill="#fff6dc"/><rect x="442.24" y="41.00" width="1.9" height="9.00" fill="#f8cc58"/><rect x="442.24" y="41.80" width="1.9" height="0.7" fill="#ec9a30"/><rect x="444.14" y="41.80" width="0.8" height="0.9" fill="#a83818"/><rect x="442.24" y="44.40" width="1.9" height="0.7" fill="#ec9a30"/><rect x="444.14" y="44.40" width="0.8" height="0.9" fill="#a83818"/><rect x="442.24" y="47.00" width="1.9" height="0.7" fill="#ec9a30"/><rect x="444.14" y="47.00" width="0.8" height="0.9" fill="#a83818"/><rect x="440.84" y="119.30" width="4" height="1.2" fill="#d89a30"/><rect x="440.84" y="124.30" width="4" height="1.2" fill="#d89a30"/><rect x="440.84" y="130.30" width="4" height="1.2" fill="#d89a30"/><rect x="440.84" y="134.30" width="4" height="1.2" fill="#d89a30"/><rect x="454.31" y="36.00" width="1.5" height="7.00" fill="#fff6dc"/><rect x="455.81" y="36.00" width="1.9" height="7.00" fill="#f8cc58"/><rect x="455.81" y="36.80" width="1.9" height="0.7" fill="#ec9a30"/><rect x="457.71" y="36.80" width="0.8" height="0.9" fill="#a83818"/><rect x="455.81" y="39.40" width="1.9" height="0.7" fill="#ec9a30"/><rect x="457.71" y="39.40" width="0.8" height="0.9" fill="#a83818"/><rect x="455.81" y="42.00" width="1.9" height="0.7" fill="#ec9a30"/><rect x="457.71" y="42.00" width="0.8" height="0.9" fill="#a83818"/><rect x="454.41" y="114.00" width="4" height="1.30" fill="#d89a30"/><rect x="454.41" y="115.30" width="4" height="1.30" fill="#000000"/><rect x="454.41" y="116.60" width="4" height="1.30" fill="#2828a8"/><rect x="454.41" y="117.90" width="4" height="1.30" fill="#000000"/><rect x="454.41" y="119.20" width="4" height="1.30" fill="#b88040"/><rect x="454.41" y="120.50" width="4" height="1.30" fill="#000000"/><rect x="454.41" y="121.80" width="4" height="1.30" fill="#9878b8"/><rect x="454.41" y="123.10" width="4" height="1.30" fill="#000000"/><rect x="454.41" y="124.40" width="4" height="0.60" fill="#d89a30"/><rect x="481.45" y="66.00" width="1.5" height="5.00" fill="#d6f6d0"/><rect x="482.95" y="66.00" width="1.9" height="5.00" fill="#34e034"/><rect x="482.95" y="66.80" width="1.9" height="0.7" fill="#18b818"/><rect x="484.85" y="66.80" width="0.8" height="0.9" fill="#902810"/><rect x="482.95" y="69.40" width="1.9" height="0.7" fill="#18b818"/><rect x="484.85" y="69.40" width="0.8" height="0.9" fill="#902810"/><rect x="481.45" y="76.60" width="1.5" height="7.40" fill="#d6f6d0"/><rect x="482.95" y="76.60" width="1.9" height="7.40" fill="#34e034"/><rect x="482.95" y="77.40" width="1.9" height="0.7" fill="#18b818"/><rect x="484.85" y="77.40" width="0.8" height="0.9" fill="#902810"/><rect x="482.95" y="80.00" width="1.9" height="0.7" fill="#18b818"/><rect x="484.85" y="80.00" width="0.8" height="0.9" fill="#902810"/><rect x="482.95" y="82.60" width="1.9" height="0.7" fill="#18b818"/><rect x="484.85" y="82.60" width="0.8" height="0.9" fill="#902810"/><rect x="495.02" y="43.00" width="1.5" height="18.40" fill="#fff6dc"/><rect x="496.52" y="43.00" width="1.9" height="18.40" fill="#f8cc58"/><rect x="496.52" y="43.80" width="1.9" height="0.7" fill="#ec9a30"/><rect x="498.42" y="43.80" width="0.8" height="0.9" fill="#a83818"/><rect x="496.52" y="46.40" width="1.9" height="0.7" fill="#ec9a30"/><rect x="498.42" y="46.40" width="0.8" height="0.9" fill="#a83818"/><rect x="496.52" y="49.00" width="1.9" height="0.7" fill="#ec9a30"/><rect x="498.42" y="49.00" width="0.8" height="0.9" fill="#a83818"/><rect x="496.52" y="51.60" width="1.9" height="0.7" fill="#ec9a30"/><rect x="498.42" y="51.60" width="0.8" height="0.9" fill="#a83818"/><rect x="496.52" y="54.20" width="1.9" height="0.7" fill="#ec9a30"/><rect x="498.42" y="54.20" width="0.8" height="0.9" fill="#a83818"/><rect x="496.52" y="56.80" width="1.9" height="0.7" fill="#ec9a30"/><rect x="498.42" y="56.80" width="0.8" height="0.9" fill="#a83818"/><rect x="496.52" y="59.40" width="1.9" height="0.7" fill="#ec9a30"/><rect x="498.42" y="59.40" width="0.8" height="0.9" fill="#a83818"/><rect x="495.12" y="122.00" width="4" height="1.30" fill="#d89a30"/><rect x="495.12" y="123.30" width="4" height="1.30" fill="#000000"/><rect x="495.12" y="124.60" width="4" height="1.30" fill="#2828a8"/><rect x="495.12" y="125.90" width="4" height="1.30" fill="#000000"/><rect x="495.12" y="127.20" width="4" height="1.30" fill="#b88040"/><rect x="495.12" y="128.50" width="4" height="1.30" fill="#000000"/><rect x="495.12" y="129.80" width="4" height="1.30" fill="#9878b8"/><rect x="495.12" y="131.10" width="4" height="1.30" fill="#000000"/><rect x="495.12" y="132.40" width="4" height="1.30" fill="#d89a30"/><rect x="495.12" y="133.70" width="4" height="1.30" fill="#000000"/><rect x="495.12" y="135.00" width="4" height="1.30" fill="#2828a8"/><rect x="495.12" y="136.30" width="4" height="1.30" fill="#000000"/><rect x="495.12" y="137.60" width="4" height="1.30" fill="#b88040"/><rect x="495.12" y="138.90" width="4" height="1.30" fill="#000000"/><rect x="495.12" y="140.20" width="4" height="1.30" fill="#9878b8"/><rect x="495.12" y="141.50" width="4" height="0.50" fill="#000000"/><rect x="590.01" y="44.00" width="1.5" height="12.00" fill="#fff6dc"/><rect x="591.51" y="44.00" width="1.9" height="12.00" fill="#f8cc58"/><rect x="591.51" y="44.80" width="1.9" height="0.7" fill="#ec9a30"/><rect x="593.41" y="44.80" width="0.8" height="0.9" fill="#a83818"/><rect x="591.51" y="47.40" width="1.9" height="0.7" fill="#ec9a30"/><rect x="593.41" y="47.40" width="0.8" height="0.9" fill="#a83818"/><rect x="591.51" y="50.00" width="1.9" height="0.7" fill="#ec9a30"/><rect x="593.41" y="50.00" width="0.8" height="0.9" fill="#a83818"/><rect x="591.51" y="52.60" width="1.9" height="0.7" fill="#ec9a30"/><rect x="593.41" y="52.60" width="0.8" height="0.9" fill="#a83818"/><rect x="591.51" y="55.20" width="1.9" height="0.7" fill="#ec9a30"/><rect x="593.41" y="55.20" width="0.8" height="0.9" fill="#a83818"/><rect x="590.11" y="123.00" width="4" height="1.30" fill="#d89a30"/><rect x="590.11" y="124.30" width="4" height="1.30" fill="#000000"/><rect x="590.11" y="125.60" width="4" height="1.30" fill="#2828a8"/><rect x="590.11" y="126.90" width="4" height="1.30" fill="#000000"/><rect x="590.11" y="128.20" width="4" height="1.30" fill="#b88040"/><rect x="590.11" y="129.50" width="4" height="1.30" fill="#000000"/><rect x="590.11" y="130.80" width="4" height="1.30" fill="#9878b8"/><rect x="590.11" y="132.10" width="4" height="1.30" fill="#000000"/><rect x="590.11" y="133.40" width="4" height="1.30" fill="#d89a30"/><rect x="590.11" y="134.70" width="4" height="0.30" fill="#000000"/><rect x="603.58" y="69.00" width="1.5" height="5.60" fill="#d6f6d0"/><rect x="605.08" y="69.00" width="1.9" height="5.60" fill="#34e034"/><rect x="605.08" y="69.80" width="1.9" height="0.7" fill="#18b818"/><rect x="606.98" y="69.80" width="0.8" height="0.9" fill="#902810"/><rect x="605.08" y="72.40" width="1.9" height="0.7" fill="#18b818"/><rect x="606.98" y="72.40" width="0.8" height="0.9" fill="#902810"/><path d="M784.8 24 V187.5 M0 187.6 H785" stroke="#8c8c8c" stroke-width="0.7"/><path d="M624.2 24.2 h3.6 l-1.8 1.8z" fill="#aab"/></svg>
<div class="t" style="left:1.4px;top:26.3px;font-size:4.05px;color:#c8d0d8">BTCUSDp,M15&nbsp;&nbsp;85047.20 85111.40 84944.20 84979.40</div>
<div class="t" style="left:743.3px;top:26.0px;font-size:4.1px;color:#e4e4e4">GTR MemberForex</div>
<div class="a" style="left:778.4px;top:25.6px;width:4.6px;height:4.6px;border-radius:50%;border:0.6px solid #ccc"></div>
<div class="a" style="left:785px;top:31.7px;width:1.2px;height:0.6px;background:#666"></div>
<div class="t" style="left:787.2px;top:30.60px;font-size:4.5px;transform:scaleX(0.76);transform-origin:0 0;color:#d0d0d0">85258.2</div>
<div class="a" style="left:785px;top:46.5px;width:1.2px;height:0.6px;background:#666"></div>
<div class="t" style="left:787.2px;top:45.40px;font-size:4.5px;transform:scaleX(0.76);transform-origin:0 0;color:#d0d0d0">85152.0</div>
<div class="a" style="left:785px;top:60.400000000000006px;width:1.2px;height:0.6px;background:#666"></div>
<div class="t" style="left:787.2px;top:59.30px;font-size:4.5px;transform:scaleX(0.76);transform-origin:0 0;color:#d0d0d0">85043.0</div>
<div class="a" style="left:785px;top:74.2px;width:1.2px;height:0.6px;background:#666"></div>
<div class="t" style="left:787.2px;top:73.10px;font-size:4.5px;transform:scaleX(0.76);transform-origin:0 0;color:#d0d0d0">84935.0</div>
<div class="a" style="left:785px;top:88.10000000000001px;width:1.2px;height:0.6px;background:#666"></div>
<div class="t" style="left:787.2px;top:87.00px;font-size:4.5px;transform:scaleX(0.76);transform-origin:0 0;color:#d0d0d0">84829.4</div>
<div class="a" style="left:785px;top:101.9px;width:1.2px;height:0.6px;background:#666"></div>
<div class="t" style="left:787.2px;top:100.80px;font-size:4.5px;transform:scaleX(0.76);transform-origin:0 0;color:#d0d0d0">84720.0</div>
<div class="a" style="left:785px;top:115.9px;width:1.2px;height:0.6px;background:#666"></div>
<div class="t" style="left:787.2px;top:114.80px;font-size:4.5px;transform:scaleX(0.76);transform-origin:0 0;color:#d0d0d0">84615.0</div>
<div class="a" style="left:785px;top:129.89999999999998px;width:1.2px;height:0.6px;background:#666"></div>
<div class="t" style="left:787.2px;top:128.80px;font-size:4.5px;transform:scaleX(0.76);transform-origin:0 0;color:#d0d0d0">84506.1</div>
<div class="a" style="left:785px;top:143.89999999999998px;width:1.2px;height:0.6px;background:#666"></div>
<div class="t" style="left:787.2px;top:142.80px;font-size:4.5px;transform:scaleX(0.76);transform-origin:0 0;color:#d0d0d0">84397.0</div>
<div class="a" style="left:785px;top:157.7px;width:1.2px;height:0.6px;background:#666"></div>
<div class="t" style="left:787.2px;top:156.60px;font-size:4.5px;transform:scaleX(0.76);transform-origin:0 0;color:#d0d0d0">84291.8</div>
<div class="a" style="left:785px;top:171.7px;width:1.2px;height:0.6px;background:#666"></div>
<div class="t" style="left:787.2px;top:170.60px;font-size:4.5px;transform:scaleX(0.76);transform-origin:0 0;color:#d0d0d0">84183.0</div>
<div class="a" style="left:785px;top:185.7px;width:1.2px;height:0.6px;background:#666"></div>
<div class="t" style="left:787.2px;top:184.60px;font-size:4.5px;transform:scaleX(0.76);transform-origin:0 0;color:#d0d0d0">84077.4</div>
<div class="a" style="left:785.5px;top:66.6px;width:15px;height:4.6px;background:#fff"></div>
<div class="t" style="left:787.2px;top:67.6px;font-size:4.7px;transform:scaleX(0.74);transform-origin:0 0;color:#000">84979.4</div>
<div class="a" style="left:-5.27px;top:187.8px;width:0.6px;height:1.2px;background:#aaa"></div>
<div class="t" style="left:-4.47px;top:191.1px;font-size:4.0px;color:#f0f0f0">20 Apr 2025</div>
<div class="a" style="left:21.87px;top:187.8px;width:0.6px;height:1.2px;background:#aaa"></div>
<div class="t" style="left:22.67px;top:191.1px;font-size:4.0px;color:#f0f0f0">20 Apr 15:45</div>
<div class="a" style="left:49.01px;top:187.8px;width:0.6px;height:1.2px;background:#aaa"></div>
<div class="t" style="left:49.81px;top:191.1px;font-size:4.0px;color:#f0f0f0">20 Apr 16:15</div>
<div class="a" style="left:76.15px;top:187.8px;width:0.6px;height:1.2px;background:#aaa"></div>
<div class="t" style="left:76.95px;top:191.1px;font-size:4.0px;color:#f0f0f0">20 Apr 16:45</div>
<div class="a" style="left:103.29px;top:187.8px;width:0.6px;height:1.2px;background:#aaa"></div>
<div class="t" style="left:104.09px;top:191.1px;font-size:4.0px;color:#f0f0f0">20 Apr 17:15</div>
<div class="a" style="left:130.43px;top:187.8px;width:0.6px;height:1.2px;background:#aaa"></div>
<div class="t" style="left:131.23px;top:191.1px;font-size:4.0px;color:#f0f0f0">20 Apr 17:45</div>
<div class="a" style="left:157.57px;top:187.8px;width:0.6px;height:1.2px;background:#aaa"></div>
<div class="t" style="left:158.37px;top:191.1px;font-size:4.0px;color:#f0f0f0">20 Apr 18:15</div>
<div class="a" style="left:184.71px;top:187.8px;width:0.6px;height:1.2px;background:#aaa"></div>
<div class="t" style="left:185.51px;top:191.1px;font-size:4.0px;color:#f0f0f0">20 Apr 18:45</div>
<div class="a" style="left:211.85px;top:187.8px;width:0.6px;height:1.2px;background:#aaa"></div>
<div class="t" style="left:212.65px;top:191.1px;font-size:4.0px;color:#f0f0f0">20 Apr 19:15</div>
<div class="a" style="left:238.99px;top:187.8px;width:0.6px;height:1.2px;background:#aaa"></div>
<div class="t" style="left:239.79px;top:191.1px;font-size:4.0px;color:#f0f0f0">20 Apr 19:45</div>
<div class="a" style="left:266.13px;top:187.8px;width:0.6px;height:1.2px;background:#aaa"></div>
<div class="t" style="left:266.93px;top:191.1px;font-size:4.0px;color:#f0f0f0">20 Apr 20:15</div>
<div class="a" style="left:293.27px;top:187.8px;width:0.6px;height:1.2px;background:#aaa"></div>
<div class="t" style="left:294.07px;top:191.1px;font-size:4.0px;color:#f0f0f0">20 Apr 20:45</div>
<div class="a" style="left:320.41px;top:187.8px;width:0.6px;height:1.2px;background:#aaa"></div>
<div class="t" style="left:321.21px;top:191.1px;font-size:4.0px;color:#f0f0f0">20 Apr 21:15</div>
<div class="a" style="left:347.55px;top:187.8px;width:0.6px;height:1.2px;background:#aaa"></div>
<div class="t" style="left:348.35px;top:191.1px;font-size:4.0px;color:#f0f0f0">20 Apr 21:45</div>
<div class="a" style="left:374.69px;top:187.8px;width:0.6px;height:1.2px;background:#aaa"></div>
<div class="t" style="left:375.49px;top:191.1px;font-size:4.0px;color:#f0f0f0">20 Apr 22:15</div>
<div class="a" style="left:401.83px;top:187.8px;width:0.6px;height:1.2px;background:#aaa"></div>
<div class="t" style="left:402.63px;top:191.1px;font-size:4.0px;color:#f0f0f0">20 Apr 22:45</div>
<div class="a" style="left:428.97px;top:187.8px;width:0.6px;height:1.2px;background:#aaa"></div>
<div class="t" style="left:429.77px;top:191.1px;font-size:4.0px;color:#f0f0f0">20 Apr 23:15</div>
<div class="a" style="left:456.11px;top:187.8px;width:0.6px;height:1.2px;background:#aaa"></div>
<div class="t" style="left:456.91px;top:191.1px;font-size:4.0px;color:#f0f0f0">20 Apr 23:45</div>
<div class="a" style="left:483.25px;top:187.8px;width:0.6px;height:1.2px;background:#aaa"></div>
<div class="t" style="left:484.05px;top:191.1px;font-size:4.0px;color:#f0f0f0">21 Apr 00:15</div>
<div class="a" style="left:510.39px;top:187.8px;width:0.6px;height:1.2px;background:#aaa"></div>
<div class="t" style="left:511.19px;top:191.1px;font-size:4.0px;color:#f0f0f0">21 Apr 00:45</div>
<div class="a" style="left:537.53px;top:187.8px;width:0.6px;height:1.2px;background:#aaa"></div>
<div class="t" style="left:538.33px;top:191.1px;font-size:4.0px;color:#f0f0f0">21 Apr 01:15</div>
<div class="a" style="left:564.67px;top:187.8px;width:0.6px;height:1.2px;background:#aaa"></div>
<div class="t" style="left:565.47px;top:191.1px;font-size:4.0px;color:#f0f0f0">21 Apr 01:45</div>
<div class="a" style="left:591.81px;top:187.8px;width:0.6px;height:1.2px;background:#aaa"></div>
<div class="t" style="left:592.61px;top:191.1px;font-size:4.0px;color:#f0f0f0">21 Apr 02:15</div>
<div class="a" style="left:0;top:196px;width:800px;height:11px;background:#f0f0f0"></div>
<div class="a" style="left:0;top:195.6px;width:800px;height:1.2px;background:#6a6a6a"></div>
<div class="a" style="left:0;top:197px;width:37.8px;height:8.6px;background:#fff;border-right:0.8px solid #666;border-bottom:0.8px solid #666"></div>
<div class="t" style="left:1px;top:200.2px;font-size:4.6px;color:#222">BTCUSDp,M15</div>
<div class="t" style="left:42.6px;top:200.2px;font-size:4.7px;color:#8a8a8a">ETHUSDp,M15</div>
<div class="a" style="left:80px;top:198.5px;width:0.6px;height:5.5px;background:#999"></div>
<div class="t" style="left:793.2px;top:199.5px;font-size:4.2px;color:#777">&#8249;</div>
<div class="a" style="left:0;top:206.8px;width:798px;height:11.4px;background:#fff"></div>
<div class="a" style="left:798px;top:206.8px;width:2px;height:223px;background:#e6e6e6"></div>
<div class="a" style="left:0;top:217.6px;width:798px;height:0.6px;background:#e0e0e0"></div>
<div class="t" style="left:2.2px;top:211.4px;font-size:5.0px;color:#333">Order</div>
<div class="t r" style="left:55px;width:91.55px;top:211.4px;font-size:5.0px;color:#333">Time</div>
<div class="t r" style="left:148.75px;width:41.55px;top:211.4px;font-size:5.0px;color:#333">Type</div>
<div class="t r" style="left:192.5px;width:30.3px;top:211.4px;font-size:5.0px;color:#333">Size</div>
<div class="t r" style="left:225px;width:41.55px;top:211.4px;font-size:5.0px;color:#333">Symbol</div>
<div class="t r" style="left:268.75px;width:40.3px;top:211.4px;font-size:5.0px;color:#333">Price</div>
<div class="t r" style="left:311.25px;width:40.3px;top:211.4px;font-size:5.0px;color:#333">S / L</div>
<div class="t r" style="left:353.75px;width:41.05px;top:211.4px;font-size:5.0px;color:#333">T / P</div>
<div class="t r" style="left:397px;width:92.05px;top:211.4px;font-size:5.0px;color:#333">Time</div>
<div class="t r" style="left:491.25px;width:41.05px;top:211.4px;font-size:5.0px;color:#333">Price</div>
<div class="t" style="left:537.7px;top:211.4px;font-size:5.15px;color:#333">Commission</div>
<div class="t r" style="left:576.25px;width:41.3px;top:211.4px;font-size:5.0px;color:#333">Swap</div>
<div class="t r" style="left:619.75px;width:44.3px;top:211.4px;font-size:5.0px;color:#333">Profit</div>
<div class="t r" style="left:666.25px;width:129.55px;top:211.4px;font-size:5.0px;color:#333">Comment</div>
<div class="a" style="left:54.7px;top:207.5px;width:0.6px;height:10.2px;background:#ebebeb"></div>
<div class="a" style="left:148.45px;top:207.5px;width:0.6px;height:10.2px;background:#ebebeb"></div>
<div class="a" style="left:192.2px;top:207.5px;width:0.6px;height:10.2px;background:#ebebeb"></div>
<div class="a" style="left:224.7px;top:207.5px;width:0.6px;height:10.2px;background:#ebebeb"></div>
<div class="a" style="left:268.45px;top:207.5px;width:0.6px;height:10.2px;background:#ebebeb"></div>
<div class="a" style="left:310.95px;top:207.5px;width:0.6px;height:10.2px;background:#ebebeb"></div>
<div class="a" style="left:353.45px;top:207.5px;width:0.6px;height:10.2px;background:#ebebeb"></div>
<div class="a" style="left:396.7px;top:207.5px;width:0.6px;height:10.2px;background:#ebebeb"></div>
<div class="a" style="left:490.95px;top:207.5px;width:0.6px;height:10.2px;background:#ebebeb"></div>
<div class="a" style="left:534.2px;top:207.5px;width:0.6px;height:10.2px;background:#ebebeb"></div>
<div class="a" style="left:575.95px;top:207.5px;width:0.6px;height:10.2px;background:#ebebeb"></div>
<div class="a" style="left:619.45px;top:207.5px;width:0.6px;height:10.2px;background:#ebebeb"></div>
<div class="a" style="left:665.95px;top:207.5px;width:0.6px;height:10.2px;background:#ebebeb"></div>
<div class="t" style="left:571.2px;top:210.5px;font-size:4px;color:#aaa">&#9663;</div>
<div class="a" style="left:0;top:217.90px;width:798px;height:8.52px;background:#ffffff"></div>
<div class="a" style="left:311.8px;top:218.20px;width:41.6px;height:7.47px;background:#ffa3a3"></div>
<div class="a" style="left:54.7px;top:217.90px;width:0.6px;height:8.47px;background:#e4e4e4"></div>
<div class="a" style="left:148.45px;top:217.90px;width:0.6px;height:8.47px;background:#e4e4e4"></div>
<div class="a" style="left:192.2px;top:217.90px;width:0.6px;height:8.47px;background:#e4e4e4"></div>
<div class="a" style="left:224.7px;top:217.90px;width:0.6px;height:8.47px;background:#e4e4e4"></div>
<div class="a" style="left:268.45px;top:217.90px;width:0.6px;height:8.47px;background:#e4e4e4"></div>
<div class="a" style="left:310.95px;top:217.90px;width:0.6px;height:8.47px;background:#e4e4e4"></div>
<div class="a" style="left:353.45px;top:217.90px;width:0.6px;height:8.47px;background:#e4e4e4"></div>
<div class="a" style="left:396.7px;top:217.90px;width:0.6px;height:8.47px;background:#e4e4e4"></div>
<div class="a" style="left:490.95px;top:217.90px;width:0.6px;height:8.47px;background:#e4e4e4"></div>
<div class="a" style="left:534.2px;top:217.90px;width:0.6px;height:8.47px;background:#e4e4e4"></div>
<div class="a" style="left:575.95px;top:217.90px;width:0.6px;height:8.47px;background:#e4e4e4"></div>
<div class="a" style="left:619.45px;top:217.90px;width:0.6px;height:8.47px;background:#e4e4e4"></div>
<div class="a" style="left:665.95px;top:217.90px;width:0.6px;height:8.47px;background:#e4e4e4"></div>
<div class="t r k" style="left:55px;width:91.95px;top:220.20px;font-size:5.3px;transform:scaleX(0.85);transform-origin:100% 0;color:#111111">2025.04.20 21:49:53</div>
<div class="t r k" style="left:148.75px;width:41.95px;top:220.20px;font-size:5.3px;transform:scaleX(0.85);transform-origin:100% 0;color:#111111;letter-spacing:0.15px">buy</div>
<div class="t r k" style="left:192.5px;width:30.7px;top:220.20px;font-size:5.3px;transform:scaleX(0.85);transform-origin:100% 0;color:#111111">78.24</div>
<div class="t r k" style="left:225px;width:41.95px;top:220.20px;font-size:5.3px;transform:scaleX(0.85);transform-origin:100% 0;color:#111111;letter-spacing:0.15px">btcusdp</div>
<div class="t r k" style="left:268.75px;width:40.7px;top:220.20px;font-size:5.3px;transform:scaleX(0.85);transform-origin:100% 0;color:#111111">84476.80</div>
<div class="t r k" style="left:311.25px;width:40.7px;top:220.20px;font-size:5.3px;transform:scaleX(0.85);transform-origin:100% 0;color:#222">84516.70</div>
<div class="t r k" style="left:353.75px;width:41.45px;top:220.20px;font-size:5.3px;transform:scaleX(0.85);transform-origin:100% 0;color:#111111">85120.51</div>
<div class="t r k" style="left:397px;width:92.45px;top:220.20px;font-size:5.3px;transform:scaleX(0.85);transform-origin:100% 0;color:#111111">2025.04.20 21:52:23</div>
<div class="t r k" style="left:491.25px;width:41.45px;top:220.20px;font-size:5.3px;transform:scaleX(0.85);transform-origin:100% 0;color:#111111">84516.70</div>
<div class="t r k" style="left:534.5px;width:39.95px;top:220.20px;font-size:5.3px;transform:scaleX(0.85);transform-origin:100% 0;color:#111111">-312.96</div>
<div class="t r k" style="left:576.25px;width:41.7px;top:220.20px;font-size:5.3px;transform:scaleX(0.85);transform-origin:100% 0;color:#111111">0.00</div>
<div class="t r k" style="left:619.75px;width:44.7px;top:220.20px;font-size:5.3px;transform:scaleX(0.85);transform-origin:100% 0;color:#111111">3 121.76</div>
<div class="t r k" style="left:666.25px;width:130.15px;top:220.20px;font-size:5.3px;transform:scaleX(0.85);transform-origin:100% 0;color:#111111;letter-spacing:0.3px">memberforex.com[sl]</div>
<svg class="a" style="left:0;top:217.90px" width="9" height="9" viewBox="0 0 9 9"><path d="M1.6 1.2 h3 l1.5 1.5 v5 h-4.5z" fill="#fff" stroke="#7a7a7a" stroke-width="0.45"/><path d="M4.6 1.2 v1.5 h1.5" fill="none" stroke="#555" stroke-width="0.45"/><circle cx="5.2" cy="6.5" r="1.45" fill="#2a8ad8"/></svg>
<div class="t" style="left:8.1px;top:221.00px;font-size:4.9px;color:#d8d4b0">1</div>
<div class="t" style="left:10.82px;top:221.00px;font-size:4.9px;color:#111111">2651166</div>
<div class="a" style="left:0;top:226.37px;width:798px;height:8.52px;background:#0078d7"></div>
<div class="a" style="left:311.8px;top:226.07px;width:41.6px;height:8.77px;background:#a890c8"></div>
<div class="a" style="left:311.8px;top:227.07px;width:41.6px;height:6.67px;background:#ffa3a3"></div>
<div class="a" style="left:54.7px;top:226.37px;width:0.6px;height:8.47px;background:#3a8fe0"></div>
<div class="a" style="left:148.45px;top:226.37px;width:0.6px;height:8.47px;background:#3a8fe0"></div>
<div class="a" style="left:192.2px;top:226.37px;width:0.6px;height:8.47px;background:#3a8fe0"></div>
<div class="a" style="left:224.7px;top:226.37px;width:0.6px;height:8.47px;background:#3a8fe0"></div>
<div class="a" style="left:268.45px;top:226.37px;width:0.6px;height:8.47px;background:#3a8fe0"></div>
<div class="a" style="left:310.95px;top:226.37px;width:0.6px;height:8.47px;background:#3a8fe0"></div>
<div class="a" style="left:353.45px;top:226.37px;width:0.6px;height:8.47px;background:#3a8fe0"></div>
<div class="a" style="left:396.7px;top:226.37px;width:0.6px;height:8.47px;background:#3a8fe0"></div>
<div class="a" style="left:490.95px;top:226.37px;width:0.6px;height:8.47px;background:#3a8fe0"></div>
<div class="a" style="left:534.2px;top:226.37px;width:0.6px;height:8.47px;background:#3a8fe0"></div>
<div class="a" style="left:575.95px;top:226.37px;width:0.6px;height:8.47px;background:#3a8fe0"></div>
<div class="a" style="left:619.45px;top:226.37px;width:0.6px;height:8.47px;background:#3a8fe0"></div>
<div class="a" style="left:665.95px;top:226.37px;width:0.6px;height:8.47px;background:#3a8fe0"></div>
<div class="t r k" style="left:55px;width:91.95px;top:228.67px;font-size:5.3px;transform:scaleX(0.85);transform-origin:100% 0;color:#ffffff">2025.04.20 22:21:07</div>
<div class="t r k" style="left:148.75px;width:41.95px;top:228.67px;font-size:5.3px;transform:scaleX(0.85);transform-origin:100% 0;color:#ffffff;letter-spacing:0.15px">sell</div>
<div class="t r k" style="left:192.5px;width:30.7px;top:228.67px;font-size:5.3px;transform:scaleX(0.85);transform-origin:100% 0;color:#ffffff">78.52</div>
<div class="t r k" style="left:225px;width:41.95px;top:228.67px;font-size:5.3px;transform:scaleX(0.85);transform-origin:100% 0;color:#ffffff;letter-spacing:0.15px">btcusdp</div>
<div class="t r k" style="left:268.75px;width:40.7px;top:228.67px;font-size:5.3px;transform:scaleX(0.85);transform-origin:100% 0;color:#ffffff">84557.50</div>
<div class="t r k" style="left:311.25px;width:40.7px;top:228.67px;font-size:5.3px;transform:scaleX(0.85);transform-origin:100% 0;color:#222">84497.00</div>
<div class="t r k" style="left:353.75px;width:41.45px;top:228.67px;font-size:5.3px;transform:scaleX(0.85);transform-origin:100% 0;color:#ffffff">83893.19</div>
<div class="t r k" style="left:397px;width:92.45px;top:228.67px;font-size:5.3px;transform:scaleX(0.85);transform-origin:100% 0;color:#ffffff">2025.04.20 22:23:04</div>
<div class="t r k" style="left:491.25px;width:41.45px;top:228.67px;font-size:5.3px;transform:scaleX(0.85);transform-origin:100% 0;color:#ffffff">84497.00</div>
<div class="t r k" style="left:534.5px;width:39.95px;top:228.67px;font-size:5.3px;transform:scaleX(0.85);transform-origin:100% 0;color:#ffffff">-314.08</div>
<div class="t r k" style="left:576.25px;width:41.7px;top:228.67px;font-size:5.3px;transform:scaleX(0.85);transform-origin:100% 0;color:#ffffff">0.00</div>
<div class="t r k" style="left:619.75px;width:44.7px;top:228.67px;font-size:5.3px;transform:scaleX(0.85);transform-origin:100% 0;color:#ffffff">4 750.46</div>
<div class="t r k" style="left:666.25px;width:130.15px;top:228.67px;font-size:5.3px;transform:scaleX(0.85);transform-origin:100% 0;color:#ffffff;letter-spacing:0.3px">memberforex.com[sl]</div>
<svg class="a" style="left:0;top:226.37px" width="9" height="9" viewBox="0 0 9 9"><path d="M1.6 1.2 h3 l1.5 1.5 v5 h-4.5z" fill="#fff" stroke="#7a7a7a" stroke-width="0.45"/><path d="M4.6 1.2 v1.5 h1.5" fill="none" stroke="#555" stroke-width="0.45"/><circle cx="5.2" cy="6.5" r="1.45" fill="#e0502a"/></svg>
<div class="t" style="left:8.1px;top:229.47px;font-size:4.9px;color:#9ab8e0">1</div>
<div class="t" style="left:10.82px;top:229.47px;font-size:4.9px;color:#ffffff">2651166</div>
<div class="a" style="left:0;top:234.84px;width:798px;height:8.52px;background:#ffffff"></div>
<div class="a" style="left:311.8px;top:235.14px;width:41.6px;height:7.47px;background:#ffa3a3"></div>
<div class="a" style="left:54.7px;top:234.84px;width:0.6px;height:8.47px;background:#e4e4e4"></div>
<div class="a" style="left:148.45px;top:234.84px;width:0.6px;height:8.47px;background:#e4e4e4"></div>
<div class="a" style="left:192.2px;top:234.84px;width:0.6px;height:8.47px;background:#e4e4e4"></div>
<div class="a" style="left:224.7px;top:234.84px;width:0.6px;height:8.47px;background:#e4e4e4"></div>
<div class="a" style="left:268.45px;top:234.84px;width:0.6px;height:8.47px;background:#e4e4e4"></div>
<div class="a" style="left:310.95px;top:234.84px;width:0.6px;height:8.47px;background:#e4e4e4"></div>
<div class="a" style="left:353.45px;top:234.84px;width:0.6px;height:8.47px;background:#e4e4e4"></div>
<div class="a" style="left:396.7px;top:234.84px;width:0.6px;height:8.47px;background:#e4e4e4"></div>
<div class="a" style="left:490.95px;top:234.84px;width:0.6px;height:8.47px;background:#e4e4e4"></div>
<div class="a" style="left:534.2px;top:234.84px;width:0.6px;height:8.47px;background:#e4e4e4"></div>
<div class="a" style="left:575.95px;top:234.84px;width:0.6px;height:8.47px;background:#e4e4e4"></div>
<div class="a" style="left:619.45px;top:234.84px;width:0.6px;height:8.47px;background:#e4e4e4"></div>
<div class="a" style="left:665.95px;top:234.84px;width:0.6px;height:8.47px;background:#e4e4e4"></div>
<div class="t r k" style="left:55px;width:91.95px;top:237.14px;font-size:5.3px;transform:scaleX(0.85);transform-origin:100% 0;color:#111111">2025.04.20 22:51:22</div>
<div class="t r k" style="left:148.75px;width:41.95px;top:237.14px;font-size:5.3px;transform:scaleX(0.85);transform-origin:100% 0;color:#111111;letter-spacing:0.15px">sell</div>
<div class="t r k" style="left:192.5px;width:30.7px;top:237.14px;font-size:5.3px;transform:scaleX(0.85);transform-origin:100% 0;color:#111111">78.90</div>
<div class="t r k" style="left:225px;width:41.95px;top:237.14px;font-size:5.3px;transform:scaleX(0.85);transform-origin:100% 0;color:#111111;letter-spacing:0.15px">btcusdp</div>
<div class="t r k" style="left:268.75px;width:40.7px;top:237.14px;font-size:5.3px;transform:scaleX(0.85);transform-origin:100% 0;color:#111111">84612.90</div>
<div class="t r k" style="left:311.25px;width:40.7px;top:237.14px;font-size:5.3px;transform:scaleX(0.85);transform-origin:100% 0;color:#222">84602.60</div>
<div class="t r k" style="left:353.75px;width:41.45px;top:237.14px;font-size:5.3px;transform:scaleX(0.85);transform-origin:100% 0;color:#111111">83998.79</div>
<div class="t r k" style="left:397px;width:92.45px;top:237.14px;font-size:5.3px;transform:scaleX(0.85);transform-origin:100% 0;color:#111111">2025.04.20 22:51:42</div>
<div class="t r k" style="left:491.25px;width:41.45px;top:237.14px;font-size:5.3px;transform:scaleX(0.85);transform-origin:100% 0;color:#111111">84602.60</div>
<div class="t r k" style="left:534.5px;width:39.95px;top:237.14px;font-size:5.3px;transform:scaleX(0.85);transform-origin:100% 0;color:#111111">-315.60</div>
<div class="t r k" style="left:576.25px;width:41.7px;top:237.14px;font-size:5.3px;transform:scaleX(0.85);transform-origin:100% 0;color:#111111">0.00</div>
<div class="t r k" style="left:619.75px;width:44.7px;top:237.14px;font-size:5.3px;transform:scaleX(0.85);transform-origin:100% 0;color:#111111">812.67</div>
<div class="t r k" style="left:666.25px;width:130.15px;top:237.14px;font-size:5.3px;transform:scaleX(0.85);transform-origin:100% 0;color:#111111;letter-spacing:0.3px">memberforex.com[sl]</div>
<svg class="a" style="left:0;top:234.84px" width="9" height="9" viewBox="0 0 9 9"><path d="M1.6 1.2 h3 l1.5 1.5 v5 h-4.5z" fill="#fff" stroke="#7a7a7a" stroke-width="0.45"/><path d="M4.6 1.2 v1.5 h1.5" fill="none" stroke="#555" stroke-width="0.45"/><circle cx="5.2" cy="6.5" r="1.45" fill="#e0502a"/></svg>
<div class="t" style="left:8.1px;top:237.94px;font-size:4.9px;color:#d8d4b0">1</div>
<div class="t" style="left:10.82px;top:237.94px;font-size:4.9px;color:#111111">2651166</div>
<div class="a" style="left:0;top:243.31px;width:798px;height:8.52px;background:#ebebeb"></div>
<div class="a" style="left:311.8px;top:243.61px;width:41.6px;height:7.47px;background:#ffa3a3"></div>
<div class="a" style="left:54.7px;top:243.31px;width:0.6px;height:8.47px;background:#f8f8f8"></div>
<div class="a" style="left:148.45px;top:243.31px;width:0.6px;height:8.47px;background:#f8f8f8"></div>
<div class="a" style="left:192.2px;top:243.31px;width:0.6px;height:8.47px;background:#f8f8f8"></div>
<div class="a" style="left:224.7px;top:243.31px;width:0.6px;height:8.47px;background:#f8f8f8"></div>
<div class="a" style="left:268.45px;top:243.31px;width:0.6px;height:8.47px;background:#f8f8f8"></div>
<div class="a" style="left:310.95px;top:243.31px;width:0.6px;height:8.47px;background:#f8f8f8"></div>
<div class="a" style="left:353.45px;top:243.31px;width:0.6px;height:8.47px;background:#f8f8f8"></div>
<div class="a" style="left:396.7px;top:243.31px;width:0.6px;height:8.47px;background:#f8f8f8"></div>
<div class="a" style="left:490.95px;top:243.31px;width:0.6px;height:8.47px;background:#f8f8f8"></div>
<div class="a" style="left:534.2px;top:243.31px;width:0.6px;height:8.47px;background:#f8f8f8"></div>
<div class="a" style="left:575.95px;top:243.31px;width:0.6px;height:8.47px;background:#f8f8f8"></div>
<div class="a" style="left:619.45px;top:243.31px;width:0.6px;height:8.47px;background:#f8f8f8"></div>
<div class="a" style="left:665.95px;top:243.31px;width:0.6px;height:8.47px;background:#f8f8f8"></div>
<div class="t r k" style="left:55px;width:91.95px;top:245.61px;font-size:5.3px;transform:scaleX(0.85);transform-origin:100% 0;color:#111111">2025.04.20 22:54:35</div>
<div class="t r k" style="left:148.75px;width:41.95px;top:245.61px;font-size:5.3px;transform:scaleX(0.85);transform-origin:100% 0;color:#111111;letter-spacing:0.15px">sell</div>
<div class="t r k" style="left:192.5px;width:30.7px;top:245.61px;font-size:5.3px;transform:scaleX(0.85);transform-origin:100% 0;color:#111111">78.95</div>
<div class="t r k" style="left:225px;width:41.95px;top:245.61px;font-size:5.3px;transform:scaleX(0.85);transform-origin:100% 0;color:#111111;letter-spacing:0.15px">btcusdp</div>
<div class="t r k" style="left:268.75px;width:40.7px;top:245.61px;font-size:5.3px;transform:scaleX(0.85);transform-origin:100% 0;color:#111111">84621.40</div>
<div class="t r k" style="left:311.25px;width:40.7px;top:245.61px;font-size:5.3px;transform:scaleX(0.85);transform-origin:100% 0;color:#222">84611.80</div>
<div class="t r k" style="left:353.75px;width:41.45px;top:245.61px;font-size:5.3px;transform:scaleX(0.85);transform-origin:100% 0;color:#111111">84007.99</div>
<div class="t r k" style="left:397px;width:92.45px;top:245.61px;font-size:5.3px;transform:scaleX(0.85);transform-origin:100% 0;color:#111111">2025.04.20 22:54:43</div>
<div class="t r k" style="left:491.25px;width:41.45px;top:245.61px;font-size:5.3px;transform:scaleX(0.85);transform-origin:100% 0;color:#111111">84611.80</div>
<div class="t r k" style="left:534.5px;width:39.95px;top:245.61px;font-size:5.3px;transform:scaleX(0.85);transform-origin:100% 0;color:#111111">-315.80</div>
<div class="t r k" style="left:576.25px;width:41.7px;top:245.61px;font-size:5.3px;transform:scaleX(0.85);transform-origin:100% 0;color:#111111">0.00</div>
<div class="t r k" style="left:619.75px;width:44.7px;top:245.61px;font-size:5.3px;transform:scaleX(0.85);transform-origin:100% 0;color:#111111">757.92</div>
<div class="t r k" style="left:666.25px;width:130.15px;top:245.61px;font-size:5.3px;transform:scaleX(0.85);transform-origin:100% 0;color:#111111;letter-spacing:0.3px">memberforex.com[sl]</div>
<svg class="a" style="left:0;top:243.31px" width="9" height="9" viewBox="0 0 9 9"><path d="M1.6 1.2 h3 l1.5 1.5 v5 h-4.5z" fill="#fff" stroke="#7a7a7a" stroke-width="0.45"/><path d="M4.6 1.2 v1.5 h1.5" fill="none" stroke="#555" stroke-width="0.45"/><circle cx="5.2" cy="6.5" r="1.45" fill="#e0502a"/></svg>
<div class="t" style="left:8.1px;top:246.41px;font-size:4.9px;color:#d8d4b0">1</div>
<div class="t" style="left:10.82px;top:246.41px;font-size:4.9px;color:#111111">2651176</div>
<div class="a" style="left:0;top:251.78px;width:798px;height:8.52px;background:#ffffff"></div>
<div class="a" style="left:311.8px;top:252.08px;width:41.6px;height:7.47px;background:#ffa3a3"></div>
<div class="a" style="left:54.7px;top:251.78px;width:0.6px;height:8.47px;background:#e4e4e4"></div>
<div class="a" style="left:148.45px;top:251.78px;width:0.6px;height:8.47px;background:#e4e4e4"></div>
<div class="a" style="left:192.2px;top:251.78px;width:0.6px;height:8.47px;background:#e4e4e4"></div>
<div class="a" style="left:224.7px;top:251.78px;width:0.6px;height:8.47px;background:#e4e4e4"></div>
<div class="a" style="left:268.45px;top:251.78px;width:0.6px;height:8.47px;background:#e4e4e4"></div>
<div class="a" style="left:310.95px;top:251.78px;width:0.6px;height:8.47px;background:#e4e4e4"></div>
<div class="a" style="left:353.45px;top:251.78px;width:0.6px;height:8.47px;background:#e4e4e4"></div>
<div class="a" style="left:396.7px;top:251.78px;width:0.6px;height:8.47px;background:#e4e4e4"></div>
<div class="a" style="left:490.95px;top:251.78px;width:0.6px;height:8.47px;background:#e4e4e4"></div>
<div class="a" style="left:534.2px;top:251.78px;width:0.6px;height:8.47px;background:#e4e4e4"></div>
<div class="a" style="left:575.95px;top:251.78px;width:0.6px;height:8.47px;background:#e4e4e4"></div>
<div class="a" style="left:619.45px;top:251.78px;width:0.6px;height:8.47px;background:#e4e4e4"></div>
<div class="a" style="left:665.95px;top:251.78px;width:0.6px;height:8.47px;background:#e4e4e4"></div>
<div class="t r k" style="left:55px;width:91.95px;top:254.08px;font-size:5.3px;transform:scaleX(0.85);transform-origin:100% 0;color:#111111">2025.04.20 22:50:10</div>
<div class="t r k" style="left:148.75px;width:41.95px;top:254.08px;font-size:5.3px;transform:scaleX(0.85);transform-origin:100% 0;color:#111111;letter-spacing:0.15px">sell</div>
<div class="t r k" style="left:192.5px;width:30.7px;top:254.08px;font-size:5.3px;transform:scaleX(0.85);transform-origin:100% 0;color:#111111">78.96</div>
<div class="t r k" style="left:225px;width:41.95px;top:254.08px;font-size:5.3px;transform:scaleX(0.85);transform-origin:100% 0;color:#111111;letter-spacing:0.15px">btcusdp</div>
<div class="t r k" style="left:268.75px;width:40.7px;top:254.08px;font-size:5.3px;transform:scaleX(0.85);transform-origin:100% 0;color:#111111">84590.40</div>
<div class="t r k" style="left:311.25px;width:40.7px;top:254.08px;font-size:5.3px;transform:scaleX(0.85);transform-origin:100% 0;color:#222">84593.20</div>
<div class="t r k" style="left:353.75px;width:41.45px;top:254.08px;font-size:5.3px;transform:scaleX(0.85);transform-origin:100% 0;color:#111111">83989.39</div>
<div class="t r k" style="left:397px;width:92.45px;top:254.08px;font-size:5.3px;transform:scaleX(0.85);transform-origin:100% 0;color:#111111">2025.04.20 22:50:25</div>
<div class="t r k" style="left:491.25px;width:41.45px;top:254.08px;font-size:5.3px;transform:scaleX(0.85);transform-origin:100% 0;color:#111111">84593.20</div>
<div class="t r k" style="left:534.5px;width:39.95px;top:254.08px;font-size:5.3px;transform:scaleX(0.85);transform-origin:100% 0;color:#111111">-315.84</div>
<div class="t r k" style="left:576.25px;width:41.7px;top:254.08px;font-size:5.3px;transform:scaleX(0.85);transform-origin:100% 0;color:#111111">0.00</div>
<div class="t r k" style="left:619.75px;width:44.7px;top:254.08px;font-size:5.3px;transform:scaleX(0.85);transform-origin:100% 0;color:#111111">-221.09</div>
<div class="t r k" style="left:666.25px;width:130.15px;top:254.08px;font-size:5.3px;transform:scaleX(0.85);transform-origin:100% 0;color:#111111;letter-spacing:0.3px">memberforex.com[sl]</div>
<svg class="a" style="left:0;top:251.78px" width="9" height="9" viewBox="0 0 9 9"><path d="M1.6 1.2 h3 l1.5 1.5 v5 h-4.5z" fill="#fff" stroke="#7a7a7a" stroke-width="0.45"/><path d="M4.6 1.2 v1.5 h1.5" fill="none" stroke="#555" stroke-width="0.45"/><circle cx="5.2" cy="6.5" r="1.45" fill="#e0502a"/></svg>
<div class="t" style="left:8.1px;top:254.88px;font-size:4.9px;color:#d8d4b0">1</div>
<div class="t" style="left:10.82px;top:254.88px;font-size:4.9px;color:#111111">2651166</div>
<div class="a" style="left:0;top:260.25px;width:798px;height:8.52px;background:#ebebeb"></div>
<div class="a" style="left:311.8px;top:260.55px;width:41.6px;height:7.47px;background:#ffa3a3"></div>
<div class="a" style="left:54.7px;top:260.25px;width:0.6px;height:8.47px;background:#f8f8f8"></div>
<div class="a" style="left:148.45px;top:260.25px;width:0.6px;height:8.47px;background:#f8f8f8"></div>
<div class="a" style="left:192.2px;top:260.25px;width:0.6px;height:8.47px;background:#f8f8f8"></div>
<div class="a" style="left:224.7px;top:260.25px;width:0.6px;height:8.47px;background:#f8f8f8"></div>
<div class="a" style="left:268.45px;top:260.25px;width:0.6px;height:8.47px;background:#f8f8f8"></div>
<div class="a" style="left:310.95px;top:260.25px;width:0.6px;height:8.47px;background:#f8f8f8"></div>
<div class="a" style="left:353.45px;top:260.25px;width:0.6px;height:8.47px;background:#f8f8f8"></div>
<div class="a" style="left:396.7px;top:260.25px;width:0.6px;height:8.47px;background:#f8f8f8"></div>
<div class="a" style="left:490.95px;top:260.25px;width:0.6px;height:8.47px;background:#f8f8f8"></div>
<div class="a" style="left:534.2px;top:260.25px;width:0.6px;height:8.47px;background:#f8f8f8"></div>
<div class="a" style="left:575.95px;top:260.25px;width:0.6px;height:8.47px;background:#f8f8f8"></div>
<div class="a" style="left:619.45px;top:260.25px;width:0.6px;height:8.47px;background:#f8f8f8"></div>
<div class="a" style="left:665.95px;top:260.25px;width:0.6px;height:8.47px;background:#f8f8f8"></div>
<div class="t r k" style="left:55px;width:91.95px;top:262.55px;font-size:5.3px;transform:scaleX(0.85);transform-origin:100% 0;color:#111111">2025.04.20 22:54:57</div>
<div class="t r k" style="left:148.75px;width:41.95px;top:262.55px;font-size:5.3px;transform:scaleX(0.85);transform-origin:100% 0;color:#111111;letter-spacing:0.15px">sell</div>
<div class="t r k" style="left:192.5px;width:30.7px;top:262.55px;font-size:5.3px;transform:scaleX(0.85);transform-origin:100% 0;color:#111111">78.99</div>
<div class="t r k" style="left:225px;width:41.95px;top:262.55px;font-size:5.3px;transform:scaleX(0.85);transform-origin:100% 0;color:#111111;letter-spacing:0.15px">btcusdp</div>
<div class="t r k" style="left:268.75px;width:40.7px;top:262.55px;font-size:5.3px;transform:scaleX(0.85);transform-origin:100% 0;color:#111111">84612.50</div>
<div class="t r k" style="left:311.25px;width:40.7px;top:262.55px;font-size:5.3px;transform:scaleX(0.85);transform-origin:100% 0;color:#222">84601.60</div>
<div class="t r k" style="left:353.75px;width:41.45px;top:262.55px;font-size:5.3px;transform:scaleX(0.85);transform-origin:100% 0;color:#111111">83997.79</div>
<div class="t r k" style="left:397px;width:92.45px;top:262.55px;font-size:5.3px;transform:scaleX(0.85);transform-origin:100% 0;color:#111111">2025.04.20 22:56:24</div>
<div class="t r k" style="left:491.25px;width:41.45px;top:262.55px;font-size:5.3px;transform:scaleX(0.85);transform-origin:100% 0;color:#111111">84601.60</div>
<div class="t r k" style="left:534.5px;width:39.95px;top:262.55px;font-size:5.3px;transform:scaleX(0.85);transform-origin:100% 0;color:#111111">-315.96</div>
<div class="t r k" style="left:576.25px;width:41.7px;top:262.55px;font-size:5.3px;transform:scaleX(0.85);transform-origin:100% 0;color:#111111">0.00</div>
<div class="t r k" style="left:619.75px;width:44.7px;top:262.55px;font-size:5.3px;transform:scaleX(0.85);transform-origin:100% 0;color:#111111">860.99</div>
<div class="t r k" style="left:666.25px;width:130.15px;top:262.55px;font-size:5.3px;transform:scaleX(0.85);transform-origin:100% 0;color:#111111;letter-spacing:0.3px">memberforex.com[sl]</div>
<svg class="a" style="left:0;top:260.25px" width="9" height="9" viewBox="0 0 9 9"><path d="M1.6 1.2 h3 l1.5 1.5 v5 h-4.5z" fill="#fff" stroke="#7a7a7a" stroke-width="0.45"/><path d="M4.6 1.2 v1.5 h1.5" fill="none" stroke="#555" stroke-width="0.45"/><circle cx="5.2" cy="6.5" r="1.45" fill="#e0502a"/></svg>
<div class="t" style="left:8.1px;top:263.35px;font-size:4.9px;color:#d8d4b0">1</div>
<div class="t" style="left:10.82px;top:263.35px;font-size:4.9px;color:#111111">2651176</div>
<div class="a" style="left:0;top:268.72px;width:798px;height:8.52px;background:#ffffff"></div>
<div class="a" style="left:311.8px;top:269.02px;width:41.6px;height:7.47px;background:#ffa3a3"></div>
<div class="a" style="left:54.7px;top:268.72px;width:0.6px;height:8.47px;background:#e4e4e4"></div>
<div class="a" style="left:148.45px;top:268.72px;width:0.6px;height:8.47px;background:#e4e4e4"></div>
<div class="a" style="left:192.2px;top:268.72px;width:0.6px;height:8.47px;background:#e4e4e4"></div>
<div class="a" style="left:224.7px;top:268.72px;width:0.6px;height:8.47px;background:#e4e4e4"></div>
<div class="a" style="left:268.45px;top:268.72px;width:0.6px;height:8.47px;background:#e4e4e4"></div>
<div class="a" style="left:310.95px;top:268.72px;width:0.6px;height:8.47px;background:#e4e4e4"></div>
<div class="a" style="left:353.45px;top:268.72px;width:0.6px;height:8.47px;background:#e4e4e4"></div>
<div class="a" style="left:396.7px;top:268.72px;width:0.6px;height:8.47px;background:#e4e4e4"></div>
<div class="a" style="left:490.95px;top:268.72px;width:0.6px;height:8.47px;background:#e4e4e4"></div>
<div class="a" style="left:534.2px;top:268.72px;width:0.6px;height:8.47px;background:#e4e4e4"></div>
<div class="a" style="left:575.95px;top:268.72px;width:0.6px;height:8.47px;background:#e4e4e4"></div>
<div class="a" style="left:619.45px;top:268.72px;width:0.6px;height:8.47px;background:#e4e4e4"></div>
<div class="a" style="left:665.95px;top:268.72px;width:0.6px;height:8.47px;background:#e4e4e4"></div>
<div class="t r k" style="left:55px;width:91.95px;top:271.02px;font-size:5.3px;transform:scaleX(0.85);transform-origin:100% 0;color:#111111">2025.04.20 22:59:43</div>
<div class="t r k" style="left:148.75px;width:41.95px;top:271.02px;font-size:5.3px;transform:scaleX(0.85);transform-origin:100% 0;color:#111111;letter-spacing:0.15px">sell</div>
<div class="t r k" style="left:192.5px;width:30.7px;top:271.02px;font-size:5.3px;transform:scaleX(0.85);transform-origin:100% 0;color:#111111">79.05</div>
<div class="t r k" style="left:225px;width:41.95px;top:271.02px;font-size:5.3px;transform:scaleX(0.85);transform-origin:100% 0;color:#111111;letter-spacing:0.15px">btcusdp</div>
<div class="t r k" style="left:268.75px;width:40.7px;top:271.02px;font-size:5.3px;transform:scaleX(0.85);transform-origin:100% 0;color:#111111">84612.20</div>
<div class="t r k" style="left:311.25px;width:40.7px;top:271.02px;font-size:5.3px;transform:scaleX(0.85);transform-origin:100% 0;color:#222">84606.20</div>
<div class="t r k" style="left:353.75px;width:41.45px;top:271.02px;font-size:5.3px;transform:scaleX(0.85);transform-origin:100% 0;color:#111111">84002.39</div>
<div class="t r k" style="left:397px;width:92.45px;top:271.02px;font-size:5.3px;transform:scaleX(0.85);transform-origin:100% 0;color:#111111">2025.04.20 22:59:57</div>
<div class="t r k" style="left:491.25px;width:41.45px;top:271.02px;font-size:5.3px;transform:scaleX(0.85);transform-origin:100% 0;color:#111111">84606.20</div>
<div class="t r k" style="left:534.5px;width:39.95px;top:271.02px;font-size:5.3px;transform:scaleX(0.85);transform-origin:100% 0;color:#111111">-316.20</div>
<div class="t r k" style="left:576.25px;width:41.7px;top:271.02px;font-size:5.3px;transform:scaleX(0.85);transform-origin:100% 0;color:#111111">0.00</div>
<div class="t r k" style="left:619.75px;width:44.7px;top:271.02px;font-size:5.3px;transform:scaleX(0.85);transform-origin:100% 0;color:#111111">474.30</div>
<div class="t r k" style="left:666.25px;width:130.15px;top:271.02px;font-size:5.3px;transform:scaleX(0.85);transform-origin:100% 0;color:#111111;letter-spacing:0.3px">memberforex.com[sl]</div>
<svg class="a" style="left:0;top:268.72px" width="9" height="9" viewBox="0 0 9 9"><path d="M1.6 1.2 h3 l1.5 1.5 v5 h-4.5z" fill="#fff" stroke="#7a7a7a" stroke-width="0.45"/><path d="M4.6 1.2 v1.5 h1.5" fill="none" stroke="#555" stroke-width="0.45"/><circle cx="5.2" cy="6.5" r="1.45" fill="#e0502a"/></svg>
<div class="t" style="left:8.1px;top:271.82px;font-size:4.9px;color:#d8d4b0">1</div>
<div class="t" style="left:10.82px;top:271.82px;font-size:4.9px;color:#111111">2651176</div>
<div class="a" style="left:0;top:277.19px;width:798px;height:8.52px;background:#ebebeb"></div>
<div class="a" style="left:311.8px;top:277.49px;width:41.6px;height:7.47px;background:#ffa3a3"></div>
<div class="a" style="left:54.7px;top:277.19px;width:0.6px;height:8.47px;background:#f8f8f8"></div>
<div class="a" style="left:148.45px;top:277.19px;width:0.6px;height:8.47px;background:#f8f8f8"></div>
<div class="a" style="left:192.2px;top:277.19px;width:0.6px;height:8.47px;background:#f8f8f8"></div>
<div class="a" style="left:224.7px;top:277.19px;width:0.6px;height:8.47px;background:#f8f8f8"></div>
<div class="a" style="left:268.45px;top:277.19px;width:0.6px;height:8.47px;background:#f8f8f8"></div>
<div class="a" style="left:310.95px;top:277.19px;width:0.6px;height:8.47px;background:#f8f8f8"></div>
<div class="a" style="left:353.45px;top:277.19px;width:0.6px;height:8.47px;background:#f8f8f8"></div>
<div class="a" style="left:396.7px;top:277.19px;width:0.6px;height:8.47px;background:#f8f8f8"></div>
<div class="a" style="left:490.95px;top:277.19px;width:0.6px;height:8.47px;background:#f8f8f8"></div>
<div class="a" style="left:534.2px;top:277.19px;width:0.6px;height:8.47px;background:#f8f8f8"></div>
<div class="a" style="left:575.95px;top:277.19px;width:0.6px;height:8.47px;background:#f8f8f8"></div>
<div class="a" style="left:619.45px;top:277.19px;width:0.6px;height:8.47px;background:#f8f8f8"></div>
<div class="a" style="left:665.95px;top:277.19px;width:0.6px;height:8.47px;background:#f8f8f8"></div>
<div class="t r k" style="left:55px;width:91.95px;top:279.49px;font-size:5.3px;transform:scaleX(0.85);transform-origin:100% 0;color:#111111">2025.04.20 22:57:46</div>
<div class="t r k" style="left:148.75px;width:41.95px;top:279.49px;font-size:5.3px;transform:scaleX(0.85);transform-origin:100% 0;color:#111111;letter-spacing:0.15px">sell</div>
<div class="t r k" style="left:192.5px;width:30.7px;top:279.49px;font-size:5.3px;transform:scaleX(0.85);transform-origin:100% 0;color:#111111">79.05</div>
<div class="t r k" style="left:225px;width:41.95px;top:279.49px;font-size:5.3px;transform:scaleX(0.85);transform-origin:100% 0;color:#111111;letter-spacing:0.15px">btcusdp</div>
<div class="t r k" style="left:268.75px;width:40.7px;top:279.49px;font-size:5.3px;transform:scaleX(0.85);transform-origin:100% 0;color:#111111">84612.50</div>
<div class="t r k" style="left:311.25px;width:40.7px;top:279.49px;font-size:5.3px;transform:scaleX(0.85);transform-origin:100% 0;color:#222">84608.70</div>
<div class="t r k" style="left:353.75px;width:41.45px;top:279.49px;font-size:5.3px;transform:scaleX(0.85);transform-origin:100% 0;color:#111111">84004.89</div>
<div class="t r k" style="left:397px;width:92.45px;top:279.49px;font-size:5.3px;transform:scaleX(0.85);transform-origin:100% 0;color:#111111">2025.04.20 22:58:14</div>
<div class="t r k" style="left:491.25px;width:41.45px;top:279.49px;font-size:5.3px;transform:scaleX(0.85);transform-origin:100% 0;color:#111111">84608.70</div>
<div class="t r k" style="left:534.5px;width:39.95px;top:279.49px;font-size:5.3px;transform:scaleX(0.85);transform-origin:100% 0;color:#111111">-316.20</div>
<div class="t r k" style="left:576.25px;width:41.7px;top:279.49px;font-size:5.3px;transform:scaleX(0.85);transform-origin:100% 0;color:#111111">0.00</div>
<div class="t r k" style="left:619.75px;width:44.7px;top:279.49px;font-size:5.3px;transform:scaleX(0.85);transform-origin:100% 0;color:#111111">300.39</div>
<div class="t r k" style="left:666.25px;width:130.15px;top:279.49px;font-size:5.3px;transform:scaleX(0.85);transform-origin:100% 0;color:#111111;letter-spacing:0.3px">memberforex.com[sl]</div>
<svg class="a" style="left:0;top:277.19px" width="9" height="9" viewBox="0 0 9 9"><path d="M1.6 1.2 h3 l1.5 1.5 v5 h-4.5z" fill="#fff" stroke="#7a7a7a" stroke-width="0.45"/><path d="M4.6 1.2 v1.5 h1.5" fill="none" stroke="#555" stroke-width="0.45"/><circle cx="5.2" cy="6.5" r="1.45" fill="#e0502a"/></svg>
<div class="t" style="left:8.1px;top:280.29px;font-size:4.9px;color:#d8d4b0">1</div>
<div class="t" style="left:10.82px;top:280.29px;font-size:4.9px;color:#111111">2651176</div>
<div class="a" style="left:0;top:285.66px;width:798px;height:8.52px;background:#ffffff"></div>
<div class="a" style="left:311.8px;top:285.96px;width:41.6px;height:7.47px;background:#ffa3a3"></div>
<div class="a" style="left:54.7px;top:285.66px;width:0.6px;height:8.47px;background:#e4e4e4"></div>
<div class="a" style="left:148.45px;top:285.66px;width:0.6px;height:8.47px;background:#e4e4e4"></div>
<div class="a" style="left:192.2px;top:285.66px;width:0.6px;height:8.47px;background:#e4e4e4"></div>
<div class="a" style="left:224.7px;top:285.66px;width:0.6px;height:8.47px;background:#e4e4e4"></div>
<div class="a" style="left:268.45px;top:285.66px;width:0.6px;height:8.47px;background:#e4e4e4"></div>
<div class="a" style="left:310.95px;top:285.66px;width:0.6px;height:8.47px;background:#e4e4e4"></div>
<div class="a" style="left:353.45px;top:285.66px;width:0.6px;height:8.47px;background:#e4e4e4"></div>
<div class="a" style="left:396.7px;top:285.66px;width:0.6px;height:8.47px;background:#e4e4e4"></div>
<div class="a" style="left:490.95px;top:285.66px;width:0.6px;height:8.47px;background:#e4e4e4"></div>
<div class="a" style="left:534.2px;top:285.66px;width:0.6px;height:8.47px;background:#e4e4e4"></div>
<div class="a" style="left:575.95px;top:285.66px;width:0.6px;height:8.47px;background:#e4e4e4"></div>
<div class="a" style="left:619.45px;top:285.66px;width:0.6px;height:8.47px;background:#e4e4e4"></div>
<div class="a" style="left:665.95px;top:285.66px;width:0.6px;height:8.47px;background:#e4e4e4"></div>
<div class="t r k" style="left:55px;width:91.95px;top:287.96px;font-size:5.3px;transform:scaleX(0.85);transform-origin:100% 0;color:#111111">2025.04.20 23:00:02</div>
<div class="t r k" style="left:148.75px;width:41.95px;top:287.96px;font-size:5.3px;transform:scaleX(0.85);transform-origin:100% 0;color:#111111;letter-spacing:0.15px">sell</div>
<div class="t r k" style="left:192.5px;width:30.7px;top:287.96px;font-size:5.3px;transform:scaleX(0.85);transform-origin:100% 0;color:#111111">79.06</div>
<div class="t r k" style="left:225px;width:41.95px;top:287.96px;font-size:5.3px;transform:scaleX(0.85);transform-origin:100% 0;color:#111111;letter-spacing:0.15px">btcusdp</div>
<div class="t r k" style="left:268.75px;width:40.7px;top:287.96px;font-size:5.3px;transform:scaleX(0.85);transform-origin:100% 0;color:#111111">84606.30</div>
<div class="t r k" style="left:311.25px;width:40.7px;top:287.96px;font-size:5.3px;transform:scaleX(0.85);transform-origin:100% 0;color:#222">84573.60</div>
<div class="t r k" style="left:353.75px;width:41.45px;top:287.96px;font-size:5.3px;transform:scaleX(0.85);transform-origin:100% 0;color:#111111">83969.79</div>
<div class="t r k" style="left:397px;width:92.45px;top:287.96px;font-size:5.3px;transform:scaleX(0.85);transform-origin:100% 0;color:#111111">2025.04.20 23:01:01</div>
<div class="t r k" style="left:491.25px;width:41.45px;top:287.96px;font-size:5.3px;transform:scaleX(0.85);transform-origin:100% 0;color:#111111">84573.60</div>
<div class="t r k" style="left:534.5px;width:39.95px;top:287.96px;font-size:5.3px;transform:scaleX(0.85);transform-origin:100% 0;color:#111111">-316.24</div>
<div class="t r k" style="left:576.25px;width:41.7px;top:287.96px;font-size:5.3px;transform:scaleX(0.85);transform-origin:100% 0;color:#111111">0.00</div>
<div class="t r k" style="left:619.75px;width:44.7px;top:287.96px;font-size:5.3px;transform:scaleX(0.85);transform-origin:100% 0;color:#111111">2 585.26</div>
<div class="t r k" style="left:666.25px;width:130.15px;top:287.96px;font-size:5.3px;transform:scaleX(0.85);transform-origin:100% 0;color:#111111;letter-spacing:0.3px">memberforex.com[sl]</div>
<svg class="a" style="left:0;top:285.66px" width="9" height="9" viewBox="0 0 9 9"><path d="M1.6 1.2 h3 l1.5 1.5 v5 h-4.5z" fill="#fff" stroke="#7a7a7a" stroke-width="0.45"/><path d="M4.6 1.2 v1.5 h1.5" fill="none" stroke="#555" stroke-width="0.45"/><circle cx="5.2" cy="6.5" r="1.45" fill="#e0502a"/></svg>
<div class="t" style="left:8.1px;top:288.76px;font-size:4.9px;color:#d8d4b0">1</div>
<div class="t" style="left:10.82px;top:288.76px;font-size:4.9px;color:#111111">2651176</div>
<div class="a" style="left:0;top:294.13px;width:798px;height:8.52px;background:#ebebeb"></div>
<div class="a" style="left:311.8px;top:294.43px;width:41.6px;height:7.47px;background:#ffa3a3"></div>
<div class="a" style="left:54.7px;top:294.13px;width:0.6px;height:8.47px;background:#f8f8f8"></div>
<div class="a" style="left:148.45px;top:294.13px;width:0.6px;height:8.47px;background:#f8f8f8"></div>
<div class="a" style="left:192.2px;top:294.13px;width:0.6px;height:8.47px;background:#f8f8f8"></div>
<div class="a" style="left:224.7px;top:294.13px;width:0.6px;height:8.47px;background:#f8f8f8"></div>
<div class="a" style="left:268.45px;top:294.13px;width:0.6px;height:8.47px;background:#f8f8f8"></div>
<div class="a" style="left:310.95px;top:294.13px;width:0.6px;height:8.47px;background:#f8f8f8"></div>
<div class="a" style="left:353.45px;top:294.13px;width:0.6px;height:8.47px;background:#f8f8f8"></div>
<div class="a" style="left:396.7px;top:294.13px;width:0.6px;height:8.47px;background:#f8f8f8"></div>
<div class="a" style="left:490.95px;top:294.13px;width:0.6px;height:8.47px;background:#f8f8f8"></div>
<div class="a" style="left:534.2px;top:294.13px;width:0.6px;height:8.47px;background:#f8f8f8"></div>
<div class="a" style="left:575.95px;top:294.13px;width:0.6px;height:8.47px;background:#f8f8f8"></div>
<div class="a" style="left:619.45px;top:294.13px;width:0.6px;height:8.47px;background:#f8f8f8"></div>
<div class="a" style="left:665.95px;top:294.13px;width:0.6px;height:8.47px;background:#f8f8f8"></div>
<div class="t r k" style="left:55px;width:91.95px;top:296.43px;font-size:5.3px;transform:scaleX(0.85);transform-origin:100% 0;color:#111111">2025.04.20 23:05:43</div>
<div class="t r k" style="left:148.75px;width:41.95px;top:296.43px;font-size:5.3px;transform:scaleX(0.85);transform-origin:100% 0;color:#111111;letter-spacing:0.15px">sell</div>
<div class="t r k" style="left:192.5px;width:30.7px;top:296.43px;font-size:5.3px;transform:scaleX(0.85);transform-origin:100% 0;color:#111111">79.19</div>
<div class="t r k" style="left:225px;width:41.95px;top:296.43px;font-size:5.3px;transform:scaleX(0.85);transform-origin:100% 0;color:#111111;letter-spacing:0.15px">btcusdp</div>
<div class="t r k" style="left:268.75px;width:40.7px;top:296.43px;font-size:5.3px;transform:scaleX(0.85);transform-origin:100% 0;color:#111111">84923.20</div>
<div class="t r k" style="left:311.25px;width:40.7px;top:296.43px;font-size:5.3px;transform:scaleX(0.85);transform-origin:100% 0;color:#222">84918.80</div>
<div class="t r k" style="left:353.75px;width:41.45px;top:296.43px;font-size:5.3px;transform:scaleX(0.85);transform-origin:100% 0;color:#111111">84314.99</div>
<div class="t r k" style="left:397px;width:92.45px;top:296.43px;font-size:5.3px;transform:scaleX(0.85);transform-origin:100% 0;color:#111111">2025.04.20 23:05:48</div>
<div class="t r k" style="left:491.25px;width:41.45px;top:296.43px;font-size:5.3px;transform:scaleX(0.85);transform-origin:100% 0;color:#111111">84918.80</div>
<div class="t r k" style="left:534.5px;width:39.95px;top:296.43px;font-size:5.3px;transform:scaleX(0.85);transform-origin:100% 0;color:#111111">-316.76</div>
<div class="t r k" style="left:576.25px;width:41.7px;top:296.43px;font-size:5.3px;transform:scaleX(0.85);transform-origin:100% 0;color:#111111">0.00</div>
<div class="t r k" style="left:619.75px;width:44.7px;top:296.43px;font-size:5.3px;transform:scaleX(0.85);transform-origin:100% 0;color:#111111">348.44</div>
<div class="t r k" style="left:666.25px;width:130.15px;top:296.43px;font-size:5.3px;transform:scaleX(0.85);transform-origin:100% 0;color:#111111;letter-spacing:0.3px">memberforex.com[sl]</div>
<svg class="a" style="left:0;top:294.13px" width="9" height="9" viewBox="0 0 9 9"><path d="M1.6 1.2 h3 l1.5 1.5 v5 h-4.5z" fill="#fff" stroke="#7a7a7a" stroke-width="0.45"/><path d="M4.6 1.2 v1.5 h1.5" fill="none" stroke="#555" stroke-width="0.45"/><circle cx="5.2" cy="6.5" r="1.45" fill="#e0502a"/></svg>
<div class="t" style="left:8.1px;top:297.23px;font-size:4.9px;color:#d8d4b0">1</div>
<div class="t" style="left:10.82px;top:297.23px;font-size:4.9px;color:#111111">2651176</div>
<div class="a" style="left:0;top:302.60px;width:798px;height:8.52px;background:#ffffff"></div>
<div class="a" style="left:311.8px;top:302.90px;width:41.6px;height:7.47px;background:#ffa3a3"></div>
<div class="a" style="left:54.7px;top:302.60px;width:0.6px;height:8.47px;background:#e4e4e4"></div>
<div class="a" style="left:148.45px;top:302.60px;width:0.6px;height:8.47px;background:#e4e4e4"></div>
<div class="a" style="left:192.2px;top:302.60px;width:0.6px;height:8.47px;background:#e4e4e4"></div>
<div class="a" style="left:224.7px;top:302.60px;width:0.6px;height:8.47px;background:#e4e4e4"></div>
<div class="a" style="left:268.45px;top:302.60px;width:0.6px;height:8.47px;background:#e4e4e4"></div>
<div class="a" style="left:310.95px;top:302.60px;width:0.6px;height:8.47px;background:#e4e4e4"></div>
<div class="a" style="left:353.45px;top:302.60px;width:0.6px;height:8.47px;background:#e4e4e4"></div>
<div class="a" style="left:396.7px;top:302.60px;width:0.6px;height:8.47px;background:#e4e4e4"></div>
<div class="a" style="left:490.95px;top:302.60px;width:0.6px;height:8.47px;background:#e4e4e4"></div>
<div class="a" style="left:534.2px;top:302.60px;width:0.6px;height:8.47px;background:#e4e4e4"></div>
<div class="a" style="left:575.95px;top:302.60px;width:0.6px;height:8.47px;background:#e4e4e4"></div>
<div class="a" style="left:619.45px;top:302.60px;width:0.6px;height:8.47px;background:#e4e4e4"></div>
<div class="a" style="left:665.95px;top:302.60px;width:0.6px;height:8.47px;background:#e4e4e4"></div>
<div class="t r k" style="left:55px;width:91.95px;top:304.90px;font-size:5.3px;transform:scaleX(0.85);transform-origin:100% 0;color:#111111">2025.04.20 23:05:50</div>
<div class="t r k" style="left:148.75px;width:41.95px;top:304.90px;font-size:5.3px;transform:scaleX(0.85);transform-origin:100% 0;color:#111111;letter-spacing:0.15px">sell</div>
<div class="t r k" style="left:192.5px;width:30.7px;top:304.90px;font-size:5.3px;transform:scaleX(0.85);transform-origin:100% 0;color:#111111">79.20</div>
<div class="t r k" style="left:225px;width:41.95px;top:304.90px;font-size:5.3px;transform:scaleX(0.85);transform-origin:100% 0;color:#111111;letter-spacing:0.15px">btcusdp</div>
<div class="t r k" style="left:268.75px;width:40.7px;top:304.90px;font-size:5.3px;transform:scaleX(0.85);transform-origin:100% 0;color:#111111">84915.50</div>
<div class="t r k" style="left:311.25px;width:40.7px;top:304.90px;font-size:5.3px;transform:scaleX(0.85);transform-origin:100% 0;color:#222">84878.10</div>
<div class="t r k" style="left:353.75px;width:41.45px;top:304.90px;font-size:5.3px;transform:scaleX(0.85);transform-origin:100% 0;color:#111111">84274.29</div>
<div class="t r k" style="left:397px;width:92.45px;top:304.90px;font-size:5.3px;transform:scaleX(0.85);transform-origin:100% 0;color:#111111">2025.04.20 23:05:55</div>
<div class="t r k" style="left:491.25px;width:41.45px;top:304.90px;font-size:5.3px;transform:scaleX(0.85);transform-origin:100% 0;color:#111111">84878.10</div>
<div class="t r k" style="left:534.5px;width:39.95px;top:304.90px;font-size:5.3px;transform:scaleX(0.85);transform-origin:100% 0;color:#111111">-316.80</div>
<div class="t r k" style="left:576.25px;width:41.7px;top:304.90px;font-size:5.3px;transform:scaleX(0.85);transform-origin:100% 0;color:#111111">0.00</div>
<div class="t r k" style="left:619.75px;width:44.7px;top:304.90px;font-size:5.3px;transform:scaleX(0.85);transform-origin:100% 0;color:#111111">2 962.08</div>
<div class="t r k" style="left:666.25px;width:130.15px;top:304.90px;font-size:5.3px;transform:scaleX(0.85);transform-origin:100% 0;color:#111111;letter-spacing:0.3px">memberforex.com[sl]</div>
<svg class="a" style="left:0;top:302.60px" width="9" height="9" viewBox="0 0 9 9"><path d="M1.6 1.2 h3 l1.5 1.5 v5 h-4.5z" fill="#fff" stroke="#7a7a7a" stroke-width="0.45"/><path d="M4.6 1.2 v1.5 h1.5" fill="none" stroke="#555" stroke-width="0.45"/><circle cx="5.2" cy="6.5" r="1.45" fill="#e0502a"/></svg>
<div class="t" style="left:8.1px;top:305.70px;font-size:4.9px;color:#d8d4b0">1</div>
<div class="t" style="left:10.82px;top:305.70px;font-size:4.9px;color:#111111">2651176</div>
<div class="a" style="left:0;top:311.07px;width:798px;height:8.52px;background:#ebebeb"></div>
<div class="a" style="left:311.8px;top:311.37px;width:41.6px;height:7.47px;background:#ffa3a3"></div>
<div class="a" style="left:54.7px;top:311.07px;width:0.6px;height:8.47px;background:#f8f8f8"></div>
<div class="a" style="left:148.45px;top:311.07px;width:0.6px;height:8.47px;background:#f8f8f8"></div>
<div class="a" style="left:192.2px;top:311.07px;width:0.6px;height:8.47px;background:#f8f8f8"></div>
<div class="a" style="left:224.7px;top:311.07px;width:0.6px;height:8.47px;background:#f8f8f8"></div>
<div class="a" style="left:268.45px;top:311.07px;width:0.6px;height:8.47px;background:#f8f8f8"></div>
<div class="a" style="left:310.95px;top:311.07px;width:0.6px;height:8.47px;background:#f8f8f8"></div>
<div class="a" style="left:353.45px;top:311.07px;width:0.6px;height:8.47px;background:#f8f8f8"></div>
<div class="a" style="left:396.7px;top:311.07px;width:0.6px;height:8.47px;background:#f8f8f8"></div>
<div class="a" style="left:490.95px;top:311.07px;width:0.6px;height:8.47px;background:#f8f8f8"></div>
<div class="a" style="left:534.2px;top:311.07px;width:0.6px;height:8.47px;background:#f8f8f8"></div>
<div class="a" style="left:575.95px;top:311.07px;width:0.6px;height:8.47px;background:#f8f8f8"></div>
<div class="a" style="left:619.45px;top:311.07px;width:0.6px;height:8.47px;background:#f8f8f8"></div>
<div class="a" style="left:665.95px;top:311.07px;width:0.6px;height:8.47px;background:#f8f8f8"></div>
<div class="t r k" style="left:55px;width:91.95px;top:313.37px;font-size:5.3px;transform:scaleX(0.85);transform-origin:100% 0;color:#111111">2025.04.20 23:05:25</div>
<div class="t r k" style="left:148.75px;width:41.95px;top:313.37px;font-size:5.3px;transform:scaleX(0.85);transform-origin:100% 0;color:#111111;letter-spacing:0.15px">sell</div>
<div class="t r k" style="left:192.5px;width:30.7px;top:313.37px;font-size:5.3px;transform:scaleX(0.85);transform-origin:100% 0;color:#111111">79.25</div>
<div class="t r k" style="left:225px;width:41.95px;top:313.37px;font-size:5.3px;transform:scaleX(0.85);transform-origin:100% 0;color:#111111;letter-spacing:0.15px">btcusdp</div>
<div class="t r k" style="left:268.75px;width:40.7px;top:313.37px;font-size:5.3px;transform:scaleX(0.85);transform-origin:100% 0;color:#111111">84796.00</div>
<div class="t r k" style="left:311.25px;width:40.7px;top:313.37px;font-size:5.3px;transform:scaleX(0.85);transform-origin:100% 0;color:#222">84799.80</div>
<div class="t r k" style="left:353.75px;width:41.45px;top:313.37px;font-size:5.3px;transform:scaleX(0.85);transform-origin:100% 0;color:#111111">84195.99</div>
<div class="t r k" style="left:397px;width:92.45px;top:313.37px;font-size:5.3px;transform:scaleX(0.85);transform-origin:100% 0;color:#111111">2025.04.20 23:05:25</div>
<div class="t r k" style="left:491.25px;width:41.45px;top:313.37px;font-size:5.3px;transform:scaleX(0.85);transform-origin:100% 0;color:#111111">84799.80</div>
<div class="t r k" style="left:534.5px;width:39.95px;top:313.37px;font-size:5.3px;transform:scaleX(0.85);transform-origin:100% 0;color:#111111">-317.00</div>
<div class="t r k" style="left:576.25px;width:41.7px;top:313.37px;font-size:5.3px;transform:scaleX(0.85);transform-origin:100% 0;color:#111111">0.00</div>
<div class="t r k" style="left:619.75px;width:44.7px;top:313.37px;font-size:5.3px;transform:scaleX(0.85);transform-origin:100% 0;color:#111111">-301.15</div>
<div class="t r k" style="left:666.25px;width:130.15px;top:313.37px;font-size:5.3px;transform:scaleX(0.85);transform-origin:100% 0;color:#111111;letter-spacing:0.3px">memberforex.com[sl]</div>
<svg class="a" style="left:0;top:311.07px" width="9" height="9" viewBox="0 0 9 9"><path d="M1.6 1.2 h3 l1.5 1.5 v5 h-4.5z" fill="#fff" stroke="#7a7a7a" stroke-width="0.45"/><path d="M4.6 1.2 v1.5 h1.5" fill="none" stroke="#555" stroke-width="0.45"/><circle cx="5.2" cy="6.5" r="1.45" fill="#e0502a"/></svg>
<div class="t" style="left:8.1px;top:314.17px;font-size:4.9px;color:#d8d4b0">1</div>
<div class="t" style="left:10.82px;top:314.17px;font-size:4.9px;color:#111111">2651176</div>
<div class="a" style="left:0;top:319.54px;width:798px;height:8.52px;background:#ffffff"></div>
<div class="a" style="left:311.8px;top:319.84px;width:41.6px;height:7.47px;background:#ffa3a3"></div>
<div class="a" style="left:54.7px;top:319.54px;width:0.6px;height:8.47px;background:#e4e4e4"></div>
<div class="a" style="left:148.45px;top:319.54px;width:0.6px;height:8.47px;background:#e4e4e4"></div>
<div class="a" style="left:192.2px;top:319.54px;width:0.6px;height:8.47px;background:#e4e4e4"></div>
<div class="a" style="left:224.7px;top:319.54px;width:0.6px;height:8.47px;background:#e4e4e4"></div>
<div class="a" style="left:268.45px;top:319.54px;width:0.6px;height:8.47px;background:#e4e4e4"></div>
<div class="a" style="left:310.95px;top:319.54px;width:0.6px;height:8.47px;background:#e4e4e4"></div>
<div class="a" style="left:353.45px;top:319.54px;width:0.6px;height:8.47px;background:#e4e4e4"></div>
<div class="a" style="left:396.7px;top:319.54px;width:0.6px;height:8.47px;background:#e4e4e4"></div>
<div class="a" style="left:490.95px;top:319.54px;width:0.6px;height:8.47px;background:#e4e4e4"></div>
<div class="a" style="left:534.2px;top:319.54px;width:0.6px;height:8.47px;background:#e4e4e4"></div>
<div class="a" style="left:575.95px;top:319.54px;width:0.6px;height:8.47px;background:#e4e4e4"></div>
<div class="a" style="left:619.45px;top:319.54px;width:0.6px;height:8.47px;background:#e4e4e4"></div>
<div class="a" style="left:665.95px;top:319.54px;width:0.6px;height:8.47px;background:#e4e4e4"></div>
<div class="t r k" style="left:55px;width:91.95px;top:321.84px;font-size:5.3px;transform:scaleX(0.85);transform-origin:100% 0;color:#111111">2025.04.20 23:05:11</div>
<div class="t r k" style="left:148.75px;width:41.95px;top:321.84px;font-size:5.3px;transform:scaleX(0.85);transform-origin:100% 0;color:#111111;letter-spacing:0.15px">sell</div>
<div class="t r k" style="left:192.5px;width:30.7px;top:321.84px;font-size:5.3px;transform:scaleX(0.85);transform-origin:100% 0;color:#111111">79.28</div>
<div class="t r k" style="left:225px;width:41.95px;top:321.84px;font-size:5.3px;transform:scaleX(0.85);transform-origin:100% 0;color:#111111;letter-spacing:0.15px">btcusdp</div>
<div class="t r k" style="left:268.75px;width:40.7px;top:321.84px;font-size:5.3px;transform:scaleX(0.85);transform-origin:100% 0;color:#111111">84703.00</div>
<div class="t r k" style="left:311.25px;width:40.7px;top:321.84px;font-size:5.3px;transform:scaleX(0.85);transform-origin:100% 0;color:#222">84702.80</div>
<div class="t r k" style="left:353.75px;width:41.45px;top:321.84px;font-size:5.3px;transform:scaleX(0.85);transform-origin:100% 0;color:#111111">84098.99</div>
<div class="t r k" style="left:397px;width:92.45px;top:321.84px;font-size:5.3px;transform:scaleX(0.85);transform-origin:100% 0;color:#111111">2025.04.20 23:05:13</div>
<div class="t r k" style="left:491.25px;width:41.45px;top:321.84px;font-size:5.3px;transform:scaleX(0.85);transform-origin:100% 0;color:#111111">84702.80</div>
<div class="t r k" style="left:534.5px;width:39.95px;top:321.84px;font-size:5.3px;transform:scaleX(0.85);transform-origin:100% 0;color:#111111">-317.12</div>
<div class="t r k" style="left:576.25px;width:41.7px;top:321.84px;font-size:5.3px;transform:scaleX(0.85);transform-origin:100% 0;color:#111111">0.00</div>
<div class="t r k" style="left:619.75px;width:44.7px;top:321.84px;font-size:5.3px;transform:scaleX(0.85);transform-origin:100% 0;color:#111111">15.86</div>
<div class="t r k" style="left:666.25px;width:130.15px;top:321.84px;font-size:5.3px;transform:scaleX(0.85);transform-origin:100% 0;color:#111111;letter-spacing:0.3px">memberforex.com[sl]</div>
<svg class="a" style="left:0;top:319.54px" width="9" height="9" viewBox="0 0 9 9"><path d="M1.6 1.2 h3 l1.5 1.5 v5 h-4.5z" fill="#fff" stroke="#7a7a7a" stroke-width="0.45"/><path d="M4.6 1.2 v1.5 h1.5" fill="none" stroke="#555" stroke-width="0.45"/><circle cx="5.2" cy="6.5" r="1.45" fill="#e0502a"/></svg>
<div class="t" style="left:8.1px;top:322.64px;font-size:4.9px;color:#d8d4b0">1</div>
<div class="t" style="left:10.82px;top:322.64px;font-size:4.9px;color:#111111">2651176</div>
<div class="a" style="left:0;top:328.01px;width:798px;height:8.52px;background:#ebebeb"></div>
<div class="a" style="left:311.8px;top:328.31px;width:41.6px;height:7.47px;background:#ffa3a3"></div>
<div class="a" style="left:54.7px;top:328.01px;width:0.6px;height:8.47px;background:#f8f8f8"></div>
<div class="a" style="left:148.45px;top:328.01px;width:0.6px;height:8.47px;background:#f8f8f8"></div>
<div class="a" style="left:192.2px;top:328.01px;width:0.6px;height:8.47px;background:#f8f8f8"></div>
<div class="a" style="left:224.7px;top:328.01px;width:0.6px;height:8.47px;background:#f8f8f8"></div>
<div class="a" style="left:268.45px;top:328.01px;width:0.6px;height:8.47px;background:#f8f8f8"></div>
<div class="a" style="left:310.95px;top:328.01px;width:0.6px;height:8.47px;background:#f8f8f8"></div>
<div class="a" style="left:353.45px;top:328.01px;width:0.6px;height:8.47px;background:#f8f8f8"></div>
<div class="a" style="left:396.7px;top:328.01px;width:0.6px;height:8.47px;background:#f8f8f8"></div>
<div class="a" style="left:490.95px;top:328.01px;width:0.6px;height:8.47px;background:#f8f8f8"></div>
<div class="a" style="left:534.2px;top:328.01px;width:0.6px;height:8.47px;background:#f8f8f8"></div>
<div class="a" style="left:575.95px;top:328.01px;width:0.6px;height:8.47px;background:#f8f8f8"></div>
<div class="a" style="left:619.45px;top:328.01px;width:0.6px;height:8.47px;background:#f8f8f8"></div>
<div class="a" style="left:665.95px;top:328.01px;width:0.6px;height:8.47px;background:#f8f8f8"></div>
<div class="t r k" style="left:55px;width:91.95px;top:330.31px;font-size:5.3px;transform:scaleX(0.85);transform-origin:100% 0;color:#111111">2025.04.20 23:06:00</div>
<div class="t r k" style="left:148.75px;width:41.95px;top:330.31px;font-size:5.3px;transform:scaleX(0.85);transform-origin:100% 0;color:#111111;letter-spacing:0.15px">sell</div>
<div class="t r k" style="left:192.5px;width:30.7px;top:330.31px;font-size:5.3px;transform:scaleX(0.85);transform-origin:100% 0;color:#111111">79.46</div>
<div class="t r k" style="left:225px;width:41.95px;top:330.31px;font-size:5.3px;transform:scaleX(0.85);transform-origin:100% 0;color:#111111;letter-spacing:0.15px">btcusdp</div>
<div class="t r k" style="left:268.75px;width:40.7px;top:330.31px;font-size:5.3px;transform:scaleX(0.85);transform-origin:100% 0;color:#111111">84897.40</div>
<div class="t r k" style="left:311.25px;width:40.7px;top:330.31px;font-size:5.3px;transform:scaleX(0.85);transform-origin:100% 0;color:#222">84882.30</div>
<div class="t r k" style="left:353.75px;width:41.45px;top:330.31px;font-size:5.3px;transform:scaleX(0.85);transform-origin:100% 0;color:#111111">84278.49</div>
<div class="t r k" style="left:397px;width:92.45px;top:330.31px;font-size:5.3px;transform:scaleX(0.85);transform-origin:100% 0;color:#111111">2025.04.20 23:06:06</div>
<div class="t r k" style="left:491.25px;width:41.45px;top:330.31px;font-size:5.3px;transform:scaleX(0.85);transform-origin:100% 0;color:#111111">84882.30</div>
<div class="t r k" style="left:534.5px;width:39.95px;top:330.31px;font-size:5.3px;transform:scaleX(0.85);transform-origin:100% 0;color:#111111">-317.84</div>
<div class="t r k" style="left:576.25px;width:41.7px;top:330.31px;font-size:5.3px;transform:scaleX(0.85);transform-origin:100% 0;color:#111111">0.00</div>
<div class="t r k" style="left:619.75px;width:44.7px;top:330.31px;font-size:5.3px;transform:scaleX(0.85);transform-origin:100% 0;color:#111111">1 199.85</div>
<div class="t r k" style="left:666.25px;width:130.15px;top:330.31px;font-size:5.3px;transform:scaleX(0.85);transform-origin:100% 0;color:#111111;letter-spacing:0.3px">memberforex.com[sl]</div>
<svg class="a" style="left:0;top:328.01px" width="9" height="9" viewBox="0 0 9 9"><path d="M1.6 1.2 h3 l1.5 1.5 v5 h-4.5z" fill="#fff" stroke="#7a7a7a" stroke-width="0.45"/><path d="M4.6 1.2 v1.5 h1.5" fill="none" stroke="#555" stroke-width="0.45"/><circle cx="5.2" cy="6.5" r="1.45" fill="#e0502a"/></svg>
<div class="t" style="left:8.1px;top:331.11px;font-size:4.9px;color:#d8d4b0">1</div>
<div class="t" style="left:10.82px;top:331.11px;font-size:4.9px;color:#111111">2651176</div>
<div class="a" style="left:0;top:336.48px;width:798px;height:8.52px;background:#ffffff"></div>
<div class="a" style="left:311.8px;top:336.78px;width:41.6px;height:7.47px;background:#ffa3a3"></div>
<div class="a" style="left:54.7px;top:336.48px;width:0.6px;height:8.47px;background:#e4e4e4"></div>
<div class="a" style="left:148.45px;top:336.48px;width:0.6px;height:8.47px;background:#e4e4e4"></div>
<div class="a" style="left:192.2px;top:336.48px;width:0.6px;height:8.47px;background:#e4e4e4"></div>
<div class="a" style="left:224.7px;top:336.48px;width:0.6px;height:8.47px;background:#e4e4e4"></div>
<div class="a" style="left:268.45px;top:336.48px;width:0.6px;height:8.47px;background:#e4e4e4"></div>
<div class="a" style="left:310.95px;top:336.48px;width:0.6px;height:8.47px;background:#e4e4e4"></div>
<div class="a" style="left:353.45px;top:336.48px;width:0.6px;height:8.47px;background:#e4e4e4"></div>
<div class="a" style="left:396.7px;top:336.48px;width:0.6px;height:8.47px;background:#e4e4e4"></div>
<div class="a" style="left:490.95px;top:336.48px;width:0.6px;height:8.47px;background:#e4e4e4"></div>
<div class="a" style="left:534.2px;top:336.48px;width:0.6px;height:8.47px;background:#e4e4e4"></div>
<div class="a" style="left:575.95px;top:336.48px;width:0.6px;height:8.47px;background:#e4e4e4"></div>
<div class="a" style="left:619.45px;top:336.48px;width:0.6px;height:8.47px;background:#e4e4e4"></div>
<div class="a" style="left:665.95px;top:336.48px;width:0.6px;height:8.47px;background:#e4e4e4"></div>
<div class="t r k" style="left:55px;width:91.95px;top:338.78px;font-size:5.3px;transform:scaleX(0.85);transform-origin:100% 0;color:#111111">2025.04.20 23:06:09</div>
<div class="t r k" style="left:148.75px;width:41.95px;top:338.78px;font-size:5.3px;transform:scaleX(0.85);transform-origin:100% 0;color:#111111;letter-spacing:0.15px">sell</div>
<div class="t r k" style="left:192.5px;width:30.7px;top:338.78px;font-size:5.3px;transform:scaleX(0.85);transform-origin:100% 0;color:#111111">79.54</div>
<div class="t r k" style="left:225px;width:41.95px;top:338.78px;font-size:5.3px;transform:scaleX(0.85);transform-origin:100% 0;color:#111111;letter-spacing:0.15px">btcusdp</div>
<div class="t r k" style="left:268.75px;width:40.7px;top:338.78px;font-size:5.3px;transform:scaleX(0.85);transform-origin:100% 0;color:#111111">84887.40</div>
<div class="t r k" style="left:311.25px;width:40.7px;top:338.78px;font-size:5.3px;transform:scaleX(0.85);transform-origin:100% 0;color:#222">84874.30</div>
<div class="t r k" style="left:353.75px;width:41.45px;top:338.78px;font-size:5.3px;transform:scaleX(0.85);transform-origin:100% 0;color:#111111">84270.49</div>
<div class="t r k" style="left:397px;width:92.45px;top:338.78px;font-size:5.3px;transform:scaleX(0.85);transform-origin:100% 0;color:#111111">2025.04.20 23:06:15</div>
<div class="t r k" style="left:491.25px;width:41.45px;top:338.78px;font-size:5.3px;transform:scaleX(0.85);transform-origin:100% 0;color:#111111">84874.30</div>
<div class="t r k" style="left:534.5px;width:39.95px;top:338.78px;font-size:5.3px;transform:scaleX(0.85);transform-origin:100% 0;color:#111111">-318.16</div>
<div class="t r k" style="left:576.25px;width:41.7px;top:338.78px;font-size:5.3px;transform:scaleX(0.85);transform-origin:100% 0;color:#111111">0.00</div>
<div class="t r k" style="left:619.75px;width:44.7px;top:338.78px;font-size:5.3px;transform:scaleX(0.85);transform-origin:100% 0;color:#111111">1 041.97</div>
<div class="t r k" style="left:666.25px;width:130.15px;top:338.78px;font-size:5.3px;transform:scaleX(0.85);transform-origin:100% 0;color:#111111;letter-spacing:0.3px">memberforex.com[sl]</div>
<svg class="a" style="left:0;top:336.48px" width="9" height="9" viewBox="0 0 9 9"><path d="M1.6 1.2 h3 l1.5 1.5 v5 h-4.5z" fill="#fff" stroke="#7a7a7a" stroke-width="0.45"/><path d="M4.6 1.2 v1.5 h1.5" fill="none" stroke="#555" stroke-width="0.45"/><circle cx="5.2" cy="6.5" r="1.45" fill="#e0502a"/></svg>
<div class="t" style="left:8.1px;top:339.58px;font-size:4.9px;color:#d8d4b0">1</div>
<div class="t" style="left:10.82px;top:339.58px;font-size:4.9px;color:#111111">2651176</div>
<div class="a" style="left:0;top:344.95px;width:798px;height:8.52px;background:#ebebeb"></div>
<div class="a" style="left:311.8px;top:345.25px;width:41.6px;height:7.47px;background:#ffa3a3"></div>
<div class="a" style="left:54.7px;top:344.95px;width:0.6px;height:8.47px;background:#f8f8f8"></div>
<div class="a" style="left:148.45px;top:344.95px;width:0.6px;height:8.47px;background:#f8f8f8"></div>
<div class="a" style="left:192.2px;top:344.95px;width:0.6px;height:8.47px;background:#f8f8f8"></div>
<div class="a" style="left:224.7px;top:344.95px;width:0.6px;height:8.47px;background:#f8f8f8"></div>
<div class="a" style="left:268.45px;top:344.95px;width:0.6px;height:8.47px;background:#f8f8f8"></div>
<div class="a" style="left:310.95px;top:344.95px;width:0.6px;height:8.47px;background:#f8f8f8"></div>
<div class="a" style="left:353.45px;top:344.95px;width:0.6px;height:8.47px;background:#f8f8f8"></div>
<div class="a" style="left:396.7px;top:344.95px;width:0.6px;height:8.47px;background:#f8f8f8"></div>
<div class="a" style="left:490.95px;top:344.95px;width:0.6px;height:8.47px;background:#f8f8f8"></div>
<div class="a" style="left:534.2px;top:344.95px;width:0.6px;height:8.47px;background:#f8f8f8"></div>
<div class="a" style="left:575.95px;top:344.95px;width:0.6px;height:8.47px;background:#f8f8f8"></div>
<div class="a" style="left:619.45px;top:344.95px;width:0.6px;height:8.47px;background:#f8f8f8"></div>
<div class="a" style="left:665.95px;top:344.95px;width:0.6px;height:8.47px;background:#f8f8f8"></div>
<div class="t r k" style="left:55px;width:91.95px;top:347.25px;font-size:5.3px;transform:scaleX(0.85);transform-origin:100% 0;color:#111111">2025.04.20 23:06:27</div>
<div class="t r k" style="left:148.75px;width:41.95px;top:347.25px;font-size:5.3px;transform:scaleX(0.85);transform-origin:100% 0;color:#111111;letter-spacing:0.15px">sell</div>
<div class="t r k" style="left:192.5px;width:30.7px;top:347.25px;font-size:5.3px;transform:scaleX(0.85);transform-origin:100% 0;color:#111111">79.55</div>
<div class="t r k" style="left:225px;width:41.95px;top:347.25px;font-size:5.3px;transform:scaleX(0.85);transform-origin:100% 0;color:#111111;letter-spacing:0.15px">btcusdp</div>
<div class="t r k" style="left:268.75px;width:40.7px;top:347.25px;font-size:5.3px;transform:scaleX(0.85);transform-origin:100% 0;color:#111111">84886.40</div>
<div class="t r k" style="left:311.25px;width:40.7px;top:347.25px;font-size:5.3px;transform:scaleX(0.85);transform-origin:100% 0;color:#222">84828.20</div>
<div class="t r k" style="left:353.75px;width:41.45px;top:347.25px;font-size:5.3px;transform:scaleX(0.85);transform-origin:100% 0;color:#111111">84224.39</div>
<div class="t r k" style="left:397px;width:92.45px;top:347.25px;font-size:5.3px;transform:scaleX(0.85);transform-origin:100% 0;color:#111111">2025.04.20 23:06:52</div>
<div class="t r k" style="left:491.25px;width:41.45px;top:347.25px;font-size:5.3px;transform:scaleX(0.85);transform-origin:100% 0;color:#111111">84828.20</div>
<div class="t r k" style="left:534.5px;width:39.95px;top:347.25px;font-size:5.3px;transform:scaleX(0.85);transform-origin:100% 0;color:#111111">-318.20</div>
<div class="t r k" style="left:576.25px;width:41.7px;top:347.25px;font-size:5.3px;transform:scaleX(0.85);transform-origin:100% 0;color:#111111">0.00</div>
<div class="t r k" style="left:619.75px;width:44.7px;top:347.25px;font-size:5.3px;transform:scaleX(0.85);transform-origin:100% 0;color:#111111">4 629.81</div>
<div class="t r k" style="left:666.25px;width:130.15px;top:347.25px;font-size:5.3px;transform:scaleX(0.85);transform-origin:100% 0;color:#111111;letter-spacing:0.3px">memberforex.com[sl]</div>
<svg class="a" style="left:0;top:344.95px" width="9" height="9" viewBox="0 0 9 9"><path d="M1.6 1.2 h3 l1.5 1.5 v5 h-4.5z" fill="#fff" stroke="#7a7a7a" stroke-width="0.45"/><path d="M4.6 1.2 v1.5 h1.5" fill="none" stroke="#555" stroke-width="0.45"/><circle cx="5.2" cy="6.5" r="1.45" fill="#e0502a"/></svg>
<div class="t" style="left:8.1px;top:348.05px;font-size:4.9px;color:#d8d4b0">1</div>
<div class="t" style="left:10.82px;top:348.05px;font-size:4.9px;color:#111111">2651176</div>
<div class="a" style="left:0;top:353.42px;width:798px;height:8.52px;background:#ffffff"></div>
<div class="a" style="left:311.8px;top:353.72px;width:41.6px;height:7.47px;background:#ffa3a3"></div>
<div class="a" style="left:54.7px;top:353.42px;width:0.6px;height:8.47px;background:#e4e4e4"></div>
<div class="a" style="left:148.45px;top:353.42px;width:0.6px;height:8.47px;background:#e4e4e4"></div>
<div class="a" style="left:192.2px;top:353.42px;width:0.6px;height:8.47px;background:#e4e4e4"></div>
<div class="a" style="left:224.7px;top:353.42px;width:0.6px;height:8.47px;background:#e4e4e4"></div>
<div class="a" style="left:268.45px;top:353.42px;width:0.6px;height:8.47px;background:#e4e4e4"></div>
<div class="a" style="left:310.95px;top:353.42px;width:0.6px;height:8.47px;background:#e4e4e4"></div>
<div class="a" style="left:353.45px;top:353.42px;width:0.6px;height:8.47px;background:#e4e4e4"></div>
<div class="a" style="left:396.7px;top:353.42px;width:0.6px;height:8.47px;background:#e4e4e4"></div>
<div class="a" style="left:490.95px;top:353.42px;width:0.6px;height:8.47px;background:#e4e4e4"></div>
<div class="a" style="left:534.2px;top:353.42px;width:0.6px;height:8.47px;background:#e4e4e4"></div>
<div class="a" style="left:575.95px;top:353.42px;width:0.6px;height:8.47px;background:#e4e4e4"></div>
<div class="a" style="left:619.45px;top:353.42px;width:0.6px;height:8.47px;background:#e4e4e4"></div>
<div class="a" style="left:665.95px;top:353.42px;width:0.6px;height:8.47px;background:#e4e4e4"></div>
<div class="t r k" style="left:55px;width:91.95px;top:355.72px;font-size:5.3px;transform:scaleX(0.85);transform-origin:100% 0;color:#111111">2025.04.20 23:06:15</div>
<div class="t r k" style="left:148.75px;width:41.95px;top:355.72px;font-size:5.3px;transform:scaleX(0.85);transform-origin:100% 0;color:#111111;letter-spacing:0.15px">sell</div>
<div class="t r k" style="left:192.5px;width:30.7px;top:355.72px;font-size:5.3px;transform:scaleX(0.85);transform-origin:100% 0;color:#111111">79.61</div>
<div class="t r k" style="left:225px;width:41.95px;top:355.72px;font-size:5.3px;transform:scaleX(0.85);transform-origin:100% 0;color:#111111;letter-spacing:0.15px">btcusdp</div>
<div class="t r k" style="left:268.75px;width:40.7px;top:355.72px;font-size:5.3px;transform:scaleX(0.85);transform-origin:100% 0;color:#111111">84874.00</div>
<div class="t r k" style="left:311.25px;width:40.7px;top:355.72px;font-size:5.3px;transform:scaleX(0.85);transform-origin:100% 0;color:#222">84877.80</div>
<div class="t r k" style="left:353.75px;width:41.45px;top:355.72px;font-size:5.3px;transform:scaleX(0.85);transform-origin:100% 0;color:#111111">84274.00</div>
<div class="t r k" style="left:397px;width:92.45px;top:355.72px;font-size:5.3px;transform:scaleX(0.85);transform-origin:100% 0;color:#111111">2025.04.20 23:06:16</div>
<div class="t r k" style="left:491.25px;width:41.45px;top:355.72px;font-size:5.3px;transform:scaleX(0.85);transform-origin:100% 0;color:#111111">84877.80</div>
<div class="t r k" style="left:534.5px;width:39.95px;top:355.72px;font-size:5.3px;transform:scaleX(0.85);transform-origin:100% 0;color:#111111">-318.44</div>
<div class="t r k" style="left:576.25px;width:41.7px;top:355.72px;font-size:5.3px;transform:scaleX(0.85);transform-origin:100% 0;color:#111111">0.00</div>
<div class="t r k" style="left:619.75px;width:44.7px;top:355.72px;font-size:5.3px;transform:scaleX(0.85);transform-origin:100% 0;color:#111111">-302.52</div>
<div class="t r k" style="left:666.25px;width:130.15px;top:355.72px;font-size:5.3px;transform:scaleX(0.85);transform-origin:100% 0;color:#111111;letter-spacing:0.3px">memberforex.com[sl]</div>
<svg class="a" style="left:0;top:353.42px" width="9" height="9" viewBox="0 0 9 9"><path d="M1.6 1.2 h3 l1.5 1.5 v5 h-4.5z" fill="#fff" stroke="#7a7a7a" stroke-width="0.45"/><path d="M4.6 1.2 v1.5 h1.5" fill="none" stroke="#555" stroke-width="0.45"/><circle cx="5.2" cy="6.5" r="1.45" fill="#e0502a"/></svg>
<div class="t" style="left:8.1px;top:356.52px;font-size:4.9px;color:#d8d4b0">1</div>
<div class="t" style="left:10.82px;top:356.52px;font-size:4.9px;color:#111111">2651176</div>
<div class="a" style="left:0;top:361.89px;width:798px;height:8.52px;background:#ebebeb"></div>
<div class="a" style="left:311.8px;top:362.19px;width:41.6px;height:7.47px;background:#ffa3a3"></div>
<div class="a" style="left:54.7px;top:361.89px;width:0.6px;height:8.47px;background:#f8f8f8"></div>
<div class="a" style="left:148.45px;top:361.89px;width:0.6px;height:8.47px;background:#f8f8f8"></div>
<div class="a" style="left:192.2px;top:361.89px;width:0.6px;height:8.47px;background:#f8f8f8"></div>
<div class="a" style="left:224.7px;top:361.89px;width:0.6px;height:8.47px;background:#f8f8f8"></div>
<div class="a" style="left:268.45px;top:361.89px;width:0.6px;height:8.47px;background:#f8f8f8"></div>
<div class="a" style="left:310.95px;top:361.89px;width:0.6px;height:8.47px;background:#f8f8f8"></div>
<div class="a" style="left:353.45px;top:361.89px;width:0.6px;height:8.47px;background:#f8f8f8"></div>
<div class="a" style="left:396.7px;top:361.89px;width:0.6px;height:8.47px;background:#f8f8f8"></div>
<div class="a" style="left:490.95px;top:361.89px;width:0.6px;height:8.47px;background:#f8f8f8"></div>
<div class="a" style="left:534.2px;top:361.89px;width:0.6px;height:8.47px;background:#f8f8f8"></div>
<div class="a" style="left:575.95px;top:361.89px;width:0.6px;height:8.47px;background:#f8f8f8"></div>
<div class="a" style="left:619.45px;top:361.89px;width:0.6px;height:8.47px;background:#f8f8f8"></div>
<div class="a" style="left:665.95px;top:361.89px;width:0.6px;height:8.47px;background:#f8f8f8"></div>
<div class="t r k" style="left:55px;width:91.95px;top:364.19px;font-size:5.3px;transform:scaleX(0.85);transform-origin:100% 0;color:#111111">2025.04.20 23:06:55</div>
<div class="t r k" style="left:148.75px;width:41.95px;top:364.19px;font-size:5.3px;transform:scaleX(0.85);transform-origin:100% 0;color:#111111;letter-spacing:0.15px">sell</div>
<div class="t r k" style="left:192.5px;width:30.7px;top:364.19px;font-size:5.3px;transform:scaleX(0.85);transform-origin:100% 0;color:#111111">79.98</div>
<div class="t r k" style="left:225px;width:41.95px;top:364.19px;font-size:5.3px;transform:scaleX(0.85);transform-origin:100% 0;color:#111111;letter-spacing:0.15px">btcusdp</div>
<div class="t r k" style="left:268.75px;width:40.7px;top:364.19px;font-size:5.3px;transform:scaleX(0.85);transform-origin:100% 0;color:#111111">84866.30</div>
<div class="t r k" style="left:311.25px;width:40.7px;top:364.19px;font-size:5.3px;transform:scaleX(0.85);transform-origin:100% 0;color:#222">84855.50</div>
<div class="t r k" style="left:353.75px;width:41.45px;top:364.19px;font-size:5.3px;transform:scaleX(0.85);transform-origin:100% 0;color:#111111">84251.69</div>
<div class="t r k" style="left:397px;width:92.45px;top:364.19px;font-size:5.3px;transform:scaleX(0.85);transform-origin:100% 0;color:#111111">2025.04.20 23:07:04</div>
<div class="t r k" style="left:491.25px;width:41.45px;top:364.19px;font-size:5.3px;transform:scaleX(0.85);transform-origin:100% 0;color:#111111">84855.50</div>
<div class="t r k" style="left:534.5px;width:39.95px;top:364.19px;font-size:5.3px;transform:scaleX(0.85);transform-origin:100% 0;color:#111111">-319.92</div>
<div class="t r k" style="left:576.25px;width:41.7px;top:364.19px;font-size:5.3px;transform:scaleX(0.85);transform-origin:100% 0;color:#111111">0.00</div>
<div class="t r k" style="left:619.75px;width:44.7px;top:364.19px;font-size:5.3px;transform:scaleX(0.85);transform-origin:100% 0;color:#111111">863.76</div>
<div class="t r k" style="left:666.25px;width:130.15px;top:364.19px;font-size:5.3px;transform:scaleX(0.85);transform-origin:100% 0;color:#111111;letter-spacing:0.3px">memberforex.com[sl]</div>
<svg class="a" style="left:0;top:361.89px" width="9" height="9" viewBox="0 0 9 9"><path d="M1.6 1.2 h3 l1.5 1.5 v5 h-4.5z" fill="#fff" stroke="#7a7a7a" stroke-width="0.45"/><path d="M4.6 1.2 v1.5 h1.5" fill="none" stroke="#555" stroke-width="0.45"/><circle cx="5.2" cy="6.5" r="1.45" fill="#e0502a"/></svg>
<div class="t" style="left:8.1px;top:364.99px;font-size:4.9px;color:#d8d4b0">1</div>
<div class="t" style="left:10.82px;top:364.99px;font-size:4.9px;color:#111111">2651176</div>
<div class="a" style="left:0;top:370.36px;width:798px;height:8.52px;background:#ffffff"></div>
<div class="a" style="left:311.8px;top:370.66px;width:41.6px;height:7.47px;background:#ffa3a3"></div>
<div class="a" style="left:54.7px;top:370.36px;width:0.6px;height:8.47px;background:#e4e4e4"></div>
<div class="a" style="left:148.45px;top:370.36px;width:0.6px;height:8.47px;background:#e4e4e4"></div>
<div class="a" style="left:192.2px;top:370.36px;width:0.6px;height:8.47px;background:#e4e4e4"></div>
<div class="a" style="left:224.7px;top:370.36px;width:0.6px;height:8.47px;background:#e4e4e4"></div>
<div class="a" style="left:268.45px;top:370.36px;width:0.6px;height:8.47px;background:#e4e4e4"></div>
<div class="a" style="left:310.95px;top:370.36px;width:0.6px;height:8.47px;background:#e4e4e4"></div>
<div class="a" style="left:353.45px;top:370.36px;width:0.6px;height:8.47px;background:#e4e4e4"></div>
<div class="a" style="left:396.7px;top:370.36px;width:0.6px;height:8.47px;background:#e4e4e4"></div>
<div class="a" style="left:490.95px;top:370.36px;width:0.6px;height:8.47px;background:#e4e4e4"></div>
<div class="a" style="left:534.2px;top:370.36px;width:0.6px;height:8.47px;background:#e4e4e4"></div>
<div class="a" style="left:575.95px;top:370.36px;width:0.6px;height:8.47px;background:#e4e4e4"></div>
<div class="a" style="left:619.45px;top:370.36px;width:0.6px;height:8.47px;background:#e4e4e4"></div>
<div class="a" style="left:665.95px;top:370.36px;width:0.6px;height:8.47px;background:#e4e4e4"></div>
<div class="t r k" style="left:55px;width:91.95px;top:372.66px;font-size:5.3px;transform:scaleX(0.85);transform-origin:100% 0;color:#111111">2025.04.20 23:07:13</div>
<div class="t r k" style="left:148.75px;width:41.95px;top:372.66px;font-size:5.3px;transform:scaleX(0.85);transform-origin:100% 0;color:#111111;letter-spacing:0.15px">sell</div>
<div class="t r k" style="left:192.5px;width:30.7px;top:372.66px;font-size:5.3px;transform:scaleX(0.85);transform-origin:100% 0;color:#111111">80.03</div>
<div class="t r k" style="left:225px;width:41.95px;top:372.66px;font-size:5.3px;transform:scaleX(0.85);transform-origin:100% 0;color:#111111;letter-spacing:0.15px">btcusdp</div>
<div class="t r k" style="left:268.75px;width:40.7px;top:372.66px;font-size:5.3px;transform:scaleX(0.85);transform-origin:100% 0;color:#111111">84879.30</div>
<div class="t r k" style="left:311.25px;width:40.7px;top:372.66px;font-size:5.3px;transform:scaleX(0.85);transform-origin:100% 0;color:#222">84851.60</div>
<div class="t r k" style="left:353.75px;width:41.45px;top:372.66px;font-size:5.3px;transform:scaleX(0.85);transform-origin:100% 0;color:#111111">84247.79</div>
<div class="t r k" style="left:397px;width:92.45px;top:372.66px;font-size:5.3px;transform:scaleX(0.85);transform-origin:100% 0;color:#111111">2025.04.20 23:07:30</div>
<div class="t r k" style="left:491.25px;width:41.45px;top:372.66px;font-size:5.3px;transform:scaleX(0.85);transform-origin:100% 0;color:#111111">84851.60</div>
<div class="t r k" style="left:534.5px;width:39.95px;top:372.66px;font-size:5.3px;transform:scaleX(0.85);transform-origin:100% 0;color:#111111">-320.12</div>
<div class="t r k" style="left:576.25px;width:41.7px;top:372.66px;font-size:5.3px;transform:scaleX(0.85);transform-origin:100% 0;color:#111111">0.00</div>
<div class="t r k" style="left:619.75px;width:44.7px;top:372.66px;font-size:5.3px;transform:scaleX(0.85);transform-origin:100% 0;color:#111111">2 216.83</div>
<div class="t r k" style="left:666.25px;width:130.15px;top:372.66px;font-size:5.3px;transform:scaleX(0.85);transform-origin:100% 0;color:#111111;letter-spacing:0.3px">memberforex.com[sl]</div>
<svg class="a" style="left:0;top:370.36px" width="9" height="9" viewBox="0 0 9 9"><path d="M1.6 1.2 h3 l1.5 1.5 v5 h-4.5z" fill="#fff" stroke="#7a7a7a" stroke-width="0.45"/><path d="M4.6 1.2 v1.5 h1.5" fill="none" stroke="#555" stroke-width="0.45"/><circle cx="5.2" cy="6.5" r="1.45" fill="#e0502a"/></svg>
<div class="t" style="left:8.1px;top:373.46px;font-size:4.9px;color:#d8d4b0">1</div>
<div class="t" style="left:10.82px;top:373.46px;font-size:4.9px;color:#111111">2651176</div>
<div class="a" style="left:0;top:378.83px;width:798px;height:8.52px;background:#ebebeb"></div>
<div class="a" style="left:311.8px;top:379.13px;width:41.6px;height:7.47px;background:#ffa3a3"></div>
<div class="a" style="left:54.7px;top:378.83px;width:0.6px;height:8.47px;background:#f8f8f8"></div>
<div class="a" style="left:148.45px;top:378.83px;width:0.6px;height:8.47px;background:#f8f8f8"></div>
<div class="a" style="left:192.2px;top:378.83px;width:0.6px;height:8.47px;background:#f8f8f8"></div>
<div class="a" style="left:224.7px;top:378.83px;width:0.6px;height:8.47px;background:#f8f8f8"></div>
<div class="a" style="left:268.45px;top:378.83px;width:0.6px;height:8.47px;background:#f8f8f8"></div>
<div class="a" style="left:310.95px;top:378.83px;width:0.6px;height:8.47px;background:#f8f8f8"></div>
<div class="a" style="left:353.45px;top:378.83px;width:0.6px;height:8.47px;background:#f8f8f8"></div>
<div class="a" style="left:396.7px;top:378.83px;width:0.6px;height:8.47px;background:#f8f8f8"></div>
<div class="a" style="left:490.95px;top:378.83px;width:0.6px;height:8.47px;background:#f8f8f8"></div>
<div class="a" style="left:534.2px;top:378.83px;width:0.6px;height:8.47px;background:#f8f8f8"></div>
<div class="a" style="left:575.95px;top:378.83px;width:0.6px;height:8.47px;background:#f8f8f8"></div>
<div class="a" style="left:619.45px;top:378.83px;width:0.6px;height:8.47px;background:#f8f8f8"></div>
<div class="a" style="left:665.95px;top:378.83px;width:0.6px;height:8.47px;background:#f8f8f8"></div>
<div class="t r k" style="left:55px;width:91.95px;top:381.13px;font-size:5.3px;transform:scaleX(0.85);transform-origin:100% 0;color:#111111">2025.04.20 23:07:35</div>
<div class="t r k" style="left:148.75px;width:41.95px;top:381.13px;font-size:5.3px;transform:scaleX(0.85);transform-origin:100% 0;color:#111111;letter-spacing:0.15px">sell</div>
<div class="t r k" style="left:192.5px;width:30.7px;top:381.13px;font-size:5.3px;transform:scaleX(0.85);transform-origin:100% 0;color:#111111">80.22</div>
<div class="t r k" style="left:225px;width:41.95px;top:381.13px;font-size:5.3px;transform:scaleX(0.85);transform-origin:100% 0;color:#111111;letter-spacing:0.15px">btcusdp</div>
<div class="t r k" style="left:268.75px;width:40.7px;top:381.13px;font-size:5.3px;transform:scaleX(0.85);transform-origin:100% 0;color:#111111">84884.50</div>
<div class="t r k" style="left:311.25px;width:40.7px;top:381.13px;font-size:5.3px;transform:scaleX(0.85);transform-origin:100% 0;color:#222">84870.70</div>
<div class="t r k" style="left:353.75px;width:41.45px;top:381.13px;font-size:5.3px;transform:scaleX(0.85);transform-origin:100% 0;color:#111111">84266.89</div>
<div class="t r k" style="left:397px;width:92.45px;top:381.13px;font-size:5.3px;transform:scaleX(0.85);transform-origin:100% 0;color:#111111">2025.04.20 23:07:46</div>
<div class="t r k" style="left:491.25px;width:41.45px;top:381.13px;font-size:5.3px;transform:scaleX(0.85);transform-origin:100% 0;color:#111111">84870.70</div>
<div class="t r k" style="left:534.5px;width:39.95px;top:381.13px;font-size:5.3px;transform:scaleX(0.85);transform-origin:100% 0;color:#111111">-320.88</div>
<div class="t r k" style="left:576.25px;width:41.7px;top:381.13px;font-size:5.3px;transform:scaleX(0.85);transform-origin:100% 0;color:#111111">0.00</div>
<div class="t r k" style="left:619.75px;width:44.7px;top:381.13px;font-size:5.3px;transform:scaleX(0.85);transform-origin:100% 0;color:#111111">1 107.04</div>
<div class="t r k" style="left:666.25px;width:130.15px;top:381.13px;font-size:5.3px;transform:scaleX(0.85);transform-origin:100% 0;color:#111111;letter-spacing:0.3px">memberforex.com[sl]</div>
<svg class="a" style="left:0;top:378.83px" width="9" height="9" viewBox="0 0 9 9"><path d="M1.6 1.2 h3 l1.5 1.5 v5 h-4.5z" fill="#fff" stroke="#7a7a7a" stroke-width="0.45"/><path d="M4.6 1.2 v1.5 h1.5" fill="none" stroke="#555" stroke-width="0.45"/><circle cx="5.2" cy="6.5" r="1.45" fill="#e0502a"/></svg>
<div class="t" style="left:8.1px;top:381.93px;font-size:4.9px;color:#d8d4b0">1</div>
<div class="t" style="left:10.82px;top:381.93px;font-size:4.9px;color:#111111">2651176</div>
<div class="a" style="left:0;top:387.30px;width:798px;height:8.52px;background:#ffffff"></div>
<div class="a" style="left:311.8px;top:387.60px;width:41.6px;height:7.47px;background:#ffa3a3"></div>
<div class="a" style="left:54.7px;top:387.30px;width:0.6px;height:8.47px;background:#e4e4e4"></div>
<div class="a" style="left:148.45px;top:387.30px;width:0.6px;height:8.47px;background:#e4e4e4"></div>
<div class="a" style="left:192.2px;top:387.30px;width:0.6px;height:8.47px;background:#e4e4e4"></div>
<div class="a" style="left:224.7px;top:387.30px;width:0.6px;height:8.47px;background:#e4e4e4"></div>
<div class="a" style="left:268.45px;top:387.30px;width:0.6px;height:8.47px;background:#e4e4e4"></div>
<div class="a" style="left:310.95px;top:387.30px;width:0.6px;height:8.47px;background:#e4e4e4"></div>
<div class="a" style="left:353.45px;top:387.30px;width:0.6px;height:8.47px;background:#e4e4e4"></div>
<div class="a" style="left:396.7px;top:387.30px;width:0.6px;height:8.47px;background:#e4e4e4"></div>
<div class="a" style="left:490.95px;top:387.30px;width:0.6px;height:8.47px;background:#e4e4e4"></div>
<div class="a" style="left:534.2px;top:387.30px;width:0.6px;height:8.47px;background:#e4e4e4"></div>
<div class="a" style="left:575.95px;top:387.30px;width:0.6px;height:8.47px;background:#e4e4e4"></div>
<div class="a" style="left:619.45px;top:387.30px;width:0.6px;height:8.47px;background:#e4e4e4"></div>
<div class="a" style="left:665.95px;top:387.30px;width:0.6px;height:8.47px;background:#e4e4e4"></div>
<div class="t r k" style="left:55px;width:91.95px;top:389.60px;font-size:5.3px;transform:scaleX(0.85);transform-origin:100% 0;color:#111111">2025.04.20 23:07:52</div>
<div class="t r k" style="left:148.75px;width:41.95px;top:389.60px;font-size:5.3px;transform:scaleX(0.85);transform-origin:100% 0;color:#111111;letter-spacing:0.15px">sell</div>
<div class="t r k" style="left:192.5px;width:30.7px;top:389.60px;font-size:5.3px;transform:scaleX(0.85);transform-origin:100% 0;color:#111111">80.29</div>
<div class="t r k" style="left:225px;width:41.95px;top:389.60px;font-size:5.3px;transform:scaleX(0.85);transform-origin:100% 0;color:#111111;letter-spacing:0.15px">btcusdp</div>
<div class="t r k" style="left:268.75px;width:40.7px;top:389.60px;font-size:5.3px;transform:scaleX(0.85);transform-origin:100% 0;color:#111111">84890.20</div>
<div class="t r k" style="left:311.25px;width:40.7px;top:389.60px;font-size:5.3px;transform:scaleX(0.85);transform-origin:100% 0;color:#222">84882.70</div>
<div class="t r k" style="left:353.75px;width:41.45px;top:389.60px;font-size:5.3px;transform:scaleX(0.85);transform-origin:100% 0;color:#111111">84278.89</div>
<div class="t r k" style="left:397px;width:92.45px;top:389.60px;font-size:5.3px;transform:scaleX(0.85);transform-origin:100% 0;color:#111111">2025.04.20 23:07:58</div>
<div class="t r k" style="left:491.25px;width:41.45px;top:389.60px;font-size:5.3px;transform:scaleX(0.85);transform-origin:100% 0;color:#111111">84882.70</div>
<div class="t r k" style="left:534.5px;width:39.95px;top:389.60px;font-size:5.3px;transform:scaleX(0.85);transform-origin:100% 0;color:#111111">-321.16</div>
<div class="t r k" style="left:576.25px;width:41.7px;top:389.60px;font-size:5.3px;transform:scaleX(0.85);transform-origin:100% 0;color:#111111">0.00</div>
<div class="t r k" style="left:619.75px;width:44.7px;top:389.60px;font-size:5.3px;transform:scaleX(0.85);transform-origin:100% 0;color:#111111">602.18</div>
<div class="t r k" style="left:666.25px;width:130.15px;top:389.60px;font-size:5.3px;transform:scaleX(0.85);transform-origin:100% 0;color:#111111;letter-spacing:0.3px">memberforex.com[sl]</div>
<svg class="a" style="left:0;top:387.30px" width="9" height="9" viewBox="0 0 9 9"><path d="M1.6 1.2 h3 l1.5 1.5 v5 h-4.5z" fill="#fff" stroke="#7a7a7a" stroke-width="0.45"/><path d="M4.6 1.2 v1.5 h1.5" fill="none" stroke="#555" stroke-width="0.45"/><circle cx="5.2" cy="6.5" r="1.45" fill="#e0502a"/></svg>
<div class="t" style="left:8.1px;top:390.40px;font-size:4.9px;color:#d8d4b0">1</div>
<div class="t" style="left:10.82px;top:390.40px;font-size:4.9px;color:#111111">2651176</div>
<div class="a" style="left:0;top:395.77px;width:798px;height:8.52px;background:#ebebeb"></div>
<div class="a" style="left:311.8px;top:396.07px;width:41.6px;height:7.47px;background:#ffa3a3"></div>
<div class="a" style="left:54.7px;top:395.77px;width:0.6px;height:8.47px;background:#f8f8f8"></div>
<div class="a" style="left:148.45px;top:395.77px;width:0.6px;height:8.47px;background:#f8f8f8"></div>
<div class="a" style="left:192.2px;top:395.77px;width:0.6px;height:8.47px;background:#f8f8f8"></div>
<div class="a" style="left:224.7px;top:395.77px;width:0.6px;height:8.47px;background:#f8f8f8"></div>
<div class="a" style="left:268.45px;top:395.77px;width:0.6px;height:8.47px;background:#f8f8f8"></div>
<div class="a" style="left:310.95px;top:395.77px;width:0.6px;height:8.47px;background:#f8f8f8"></div>
<div class="a" style="left:353.45px;top:395.77px;width:0.6px;height:8.47px;background:#f8f8f8"></div>
<div class="a" style="left:396.7px;top:395.77px;width:0.6px;height:8.47px;background:#f8f8f8"></div>
<div class="a" style="left:490.95px;top:395.77px;width:0.6px;height:8.47px;background:#f8f8f8"></div>
<div class="a" style="left:534.2px;top:395.77px;width:0.6px;height:8.47px;background:#f8f8f8"></div>
<div class="a" style="left:575.95px;top:395.77px;width:0.6px;height:8.47px;background:#f8f8f8"></div>
<div class="a" style="left:619.45px;top:395.77px;width:0.6px;height:8.47px;background:#f8f8f8"></div>
<div class="a" style="left:665.95px;top:395.77px;width:0.6px;height:8.47px;background:#f8f8f8"></div>
<div class="t r k" style="left:55px;width:91.95px;top:398.07px;font-size:5.3px;transform:scaleX(0.85);transform-origin:100% 0;color:#111111">2025.04.20 23:09:00</div>
<div class="t r k" style="left:148.75px;width:41.95px;top:398.07px;font-size:5.3px;transform:scaleX(0.85);transform-origin:100% 0;color:#111111;letter-spacing:0.15px">sell</div>
<div class="t r k" style="left:192.5px;width:30.7px;top:398.07px;font-size:5.3px;transform:scaleX(0.85);transform-origin:100% 0;color:#111111">80.32</div>
<div class="t r k" style="left:225px;width:41.95px;top:398.07px;font-size:5.3px;transform:scaleX(0.85);transform-origin:100% 0;color:#111111;letter-spacing:0.15px">btcusdp</div>
<div class="t r k" style="left:268.75px;width:40.7px;top:398.07px;font-size:5.3px;transform:scaleX(0.85);transform-origin:100% 0;color:#111111">84870.80</div>
<div class="t r k" style="left:311.25px;width:40.7px;top:398.07px;font-size:5.3px;transform:scaleX(0.85);transform-origin:100% 0;color:#222">84845.60</div>
<div class="t r k" style="left:353.75px;width:41.45px;top:398.07px;font-size:5.3px;transform:scaleX(0.85);transform-origin:100% 0;color:#111111">84241.79</div>
<div class="t r k" style="left:397px;width:92.45px;top:398.07px;font-size:5.3px;transform:scaleX(0.85);transform-origin:100% 0;color:#111111">2025.04.20 23:09:08</div>
<div class="t r k" style="left:491.25px;width:41.45px;top:398.07px;font-size:5.3px;transform:scaleX(0.85);transform-origin:100% 0;color:#111111">84845.60</div>
<div class="t r k" style="left:534.5px;width:39.95px;top:398.07px;font-size:5.3px;transform:scaleX(0.85);transform-origin:100% 0;color:#111111">-321.28</div>
<div class="t r k" style="left:576.25px;width:41.7px;top:398.07px;font-size:5.3px;transform:scaleX(0.85);transform-origin:100% 0;color:#111111">0.00</div>
<div class="t r k" style="left:619.75px;width:44.7px;top:398.07px;font-size:5.3px;transform:scaleX(0.85);transform-origin:100% 0;color:#111111">2 024.06</div>
<div class="t r k" style="left:666.25px;width:130.15px;top:398.07px;font-size:5.3px;transform:scaleX(0.85);transform-origin:100% 0;color:#111111;letter-spacing:0.3px">memberforex.com[sl]</div>
<svg class="a" style="left:0;top:395.77px" width="9" height="9" viewBox="0 0 9 9"><path d="M1.6 1.2 h3 l1.5 1.5 v5 h-4.5z" fill="#fff" stroke="#7a7a7a" stroke-width="0.45"/><path d="M4.6 1.2 v1.5 h1.5" fill="none" stroke="#555" stroke-width="0.45"/><circle cx="5.2" cy="6.5" r="1.45" fill="#e0502a"/></svg>
<div class="t" style="left:8.1px;top:398.87px;font-size:4.9px;color:#d8d4b0">1</div>
<div class="t" style="left:10.82px;top:398.87px;font-size:4.9px;color:#111111">2651176</div>
<div class="a" style="left:0;top:404.24px;width:798px;height:8.52px;background:#ffffff"></div>
<div class="a" style="left:311.8px;top:404.54px;width:41.6px;height:7.47px;background:#ffa3a3"></div>
<div class="a" style="left:54.7px;top:404.24px;width:0.6px;height:8.47px;background:#e4e4e4"></div>
<div class="a" style="left:148.45px;top:404.24px;width:0.6px;height:8.47px;background:#e4e4e4"></div>
<div class="a" style="left:192.2px;top:404.24px;width:0.6px;height:8.47px;background:#e4e4e4"></div>
<div class="a" style="left:224.7px;top:404.24px;width:0.6px;height:8.47px;background:#e4e4e4"></div>
<div class="a" style="left:268.45px;top:404.24px;width:0.6px;height:8.47px;background:#e4e4e4"></div>
<div class="a" style="left:310.95px;top:404.24px;width:0.6px;height:8.47px;background:#e4e4e4"></div>
<div class="a" style="left:353.45px;top:404.24px;width:0.6px;height:8.47px;background:#e4e4e4"></div>
<div class="a" style="left:396.7px;top:404.24px;width:0.6px;height:8.47px;background:#e4e4e4"></div>
<div class="a" style="left:490.95px;top:404.24px;width:0.6px;height:8.47px;background:#e4e4e4"></div>
<div class="a" style="left:534.2px;top:404.24px;width:0.6px;height:8.47px;background:#e4e4e4"></div>
<div class="a" style="left:575.95px;top:404.24px;width:0.6px;height:8.47px;background:#e4e4e4"></div>
<div class="a" style="left:619.45px;top:404.24px;width:0.6px;height:8.47px;background:#e4e4e4"></div>
<div class="a" style="left:665.95px;top:404.24px;width:0.6px;height:8.47px;background:#e4e4e4"></div>
<div class="t r k" style="left:55px;width:91.95px;top:406.54px;font-size:5.3px;transform:scaleX(0.85);transform-origin:100% 0;color:#111111">2025.04.20 23:08:23</div>
<div class="t r k" style="left:148.75px;width:41.95px;top:406.54px;font-size:5.3px;transform:scaleX(0.85);transform-origin:100% 0;color:#111111;letter-spacing:0.15px">sell</div>
<div class="t r k" style="left:192.5px;width:30.7px;top:406.54px;font-size:5.3px;transform:scaleX(0.85);transform-origin:100% 0;color:#111111">80.32</div>
<div class="t r k" style="left:225px;width:41.95px;top:406.54px;font-size:5.3px;transform:scaleX(0.85);transform-origin:100% 0;color:#111111;letter-spacing:0.15px">btcusdp</div>
<div class="t r k" style="left:268.75px;width:40.7px;top:406.54px;font-size:5.3px;transform:scaleX(0.85);transform-origin:100% 0;color:#111111">84880.40</div>
<div class="t r k" style="left:311.25px;width:40.7px;top:406.54px;font-size:5.3px;transform:scaleX(0.85);transform-origin:100% 0;color:#222">84871.60</div>
<div class="t r k" style="left:353.75px;width:41.45px;top:406.54px;font-size:5.3px;transform:scaleX(0.85);transform-origin:100% 0;color:#111111">84267.79</div>
<div class="t r k" style="left:397px;width:92.45px;top:406.54px;font-size:5.3px;transform:scaleX(0.85);transform-origin:100% 0;color:#111111">2025.04.20 23:08:25</div>
<div class="t r k" style="left:491.25px;width:41.45px;top:406.54px;font-size:5.3px;transform:scaleX(0.85);transform-origin:100% 0;color:#111111">84871.60</div>
<div class="t r k" style="left:534.5px;width:39.95px;top:406.54px;font-size:5.3px;transform:scaleX(0.85);transform-origin:100% 0;color:#111111">-321.28</div>
<div class="t r k" style="left:576.25px;width:41.7px;top:406.54px;font-size:5.3px;transform:scaleX(0.85);transform-origin:100% 0;color:#111111">0.00</div>
<div class="t r k" style="left:619.75px;width:44.7px;top:406.54px;font-size:5.3px;transform:scaleX(0.85);transform-origin:100% 0;color:#111111">706.82</div>
<div class="t r k" style="left:666.25px;width:130.15px;top:406.54px;font-size:5.3px;transform:scaleX(0.85);transform-origin:100% 0;color:#111111;letter-spacing:0.3px">memberforex.com[sl]</div>
<svg class="a" style="left:0;top:404.24px" width="9" height="9" viewBox="0 0 9 9"><path d="M1.6 1.2 h3 l1.5 1.5 v5 h-4.5z" fill="#fff" stroke="#7a7a7a" stroke-width="0.45"/><path d="M4.6 1.2 v1.5 h1.5" fill="none" stroke="#555" stroke-width="0.45"/><circle cx="5.2" cy="6.5" r="1.45" fill="#e0502a"/></svg>
<div class="t" style="left:8.1px;top:407.34px;font-size:4.9px;color:#d8d4b0">1</div>
<div class="t" style="left:10.82px;top:407.34px;font-size:4.9px;color:#111111">2651176</div>
<div class="a" style="left:0;top:412.71px;width:798px;height:8.52px;background:#ebebeb"></div>
<div class="a" style="left:311.8px;top:413.01px;width:41.6px;height:7.47px;background:#ffa3a3"></div>
<div class="a" style="left:54.7px;top:412.71px;width:0.6px;height:8.47px;background:#f8f8f8"></div>
<div class="a" style="left:148.45px;top:412.71px;width:0.6px;height:8.47px;background:#f8f8f8"></div>
<div class="a" style="left:192.2px;top:412.71px;width:0.6px;height:8.47px;background:#f8f8f8"></div>
<div class="a" style="left:224.7px;top:412.71px;width:0.6px;height:8.47px;background:#f8f8f8"></div>
<div class="a" style="left:268.45px;top:412.71px;width:0.6px;height:8.47px;background:#f8f8f8"></div>
<div class="a" style="left:310.95px;top:412.71px;width:0.6px;height:8.47px;background:#f8f8f8"></div>
<div class="a" style="left:353.45px;top:412.71px;width:0.6px;height:8.47px;background:#f8f8f8"></div>
<div class="a" style="left:396.7px;top:412.71px;width:0.6px;height:8.47px;background:#f8f8f8"></div>
<div class="a" style="left:490.95px;top:412.71px;width:0.6px;height:8.47px;background:#f8f8f8"></div>
<div class="a" style="left:534.2px;top:412.71px;width:0.6px;height:8.47px;background:#f8f8f8"></div>
<div class="a" style="left:575.95px;top:412.71px;width:0.6px;height:8.47px;background:#f8f8f8"></div>
<div class="a" style="left:619.45px;top:412.71px;width:0.6px;height:8.47px;background:#f8f8f8"></div>
<div class="a" style="left:665.95px;top:412.71px;width:0.6px;height:8.47px;background:#f8f8f8"></div>
<div class="t r k" style="left:55px;width:91.95px;top:415.01px;font-size:5.3px;transform:scaleX(0.85);transform-origin:100% 0;color:#111111">2025.04.20 23:08:43</div>
<div class="t r k" style="left:148.75px;width:41.95px;top:415.01px;font-size:5.3px;transform:scaleX(0.85);transform-origin:100% 0;color:#111111;letter-spacing:0.15px">sell</div>
<div class="t r k" style="left:192.5px;width:30.7px;top:415.01px;font-size:5.3px;transform:scaleX(0.85);transform-origin:100% 0;color:#111111">80.36</div>
<div class="t r k" style="left:225px;width:41.95px;top:415.01px;font-size:5.3px;transform:scaleX(0.85);transform-origin:100% 0;color:#111111;letter-spacing:0.15px">btcusdp</div>
<div class="t r k" style="left:268.75px;width:40.7px;top:415.01px;font-size:5.3px;transform:scaleX(0.85);transform-origin:100% 0;color:#111111">84875.80</div>
<div class="t r k" style="left:311.25px;width:40.7px;top:415.01px;font-size:5.3px;transform:scaleX(0.85);transform-origin:100% 0;color:#222">84877.00</div>
<div class="t r k" style="left:353.75px;width:41.45px;top:415.01px;font-size:5.3px;transform:scaleX(0.85);transform-origin:100% 0;color:#111111">84273.19</div>
<div class="t r k" style="left:397px;width:92.45px;top:415.01px;font-size:5.3px;transform:scaleX(0.85);transform-origin:100% 0;color:#111111">2025.04.20 23:08:57</div>
<div class="t r k" style="left:491.25px;width:41.45px;top:415.01px;font-size:5.3px;transform:scaleX(0.85);transform-origin:100% 0;color:#111111">84877.00</div>
<div class="t r k" style="left:534.5px;width:39.95px;top:415.01px;font-size:5.3px;transform:scaleX(0.85);transform-origin:100% 0;color:#111111">-321.44</div>
<div class="t r k" style="left:576.25px;width:41.7px;top:415.01px;font-size:5.3px;transform:scaleX(0.85);transform-origin:100% 0;color:#111111">0.00</div>
<div class="t r k" style="left:619.75px;width:44.7px;top:415.01px;font-size:5.3px;transform:scaleX(0.85);transform-origin:100% 0;color:#111111">-96.43</div>
<div class="t r k" style="left:666.25px;width:130.15px;top:415.01px;font-size:5.3px;transform:scaleX(0.85);transform-origin:100% 0;color:#111111;letter-spacing:0.3px">memberforex.com[sl]</div>
<svg class="a" style="left:0;top:412.71px" width="9" height="9" viewBox="0 0 9 9"><path d="M1.6 1.2 h3 l1.5 1.5 v5 h-4.5z" fill="#fff" stroke="#7a7a7a" stroke-width="0.45"/><path d="M4.6 1.2 v1.5 h1.5" fill="none" stroke="#555" stroke-width="0.45"/><circle cx="5.2" cy="6.5" r="1.45" fill="#e0502a"/></svg>
<div class="t" style="left:8.1px;top:415.81px;font-size:4.9px;color:#d8d4b0">1</div>
<div class="t" style="left:10.82px;top:415.81px;font-size:4.9px;color:#111111">2651176</div>
<div class="a" style="left:0;top:421.18px;width:798px;height:8.52px;background:#ffffff"></div>
<div class="a" style="left:311.8px;top:421.48px;width:41.6px;height:7.47px;background:#ffa3a3"></div>
<div class="a" style="left:54.7px;top:421.18px;width:0.6px;height:8.47px;background:#e4e4e4"></div>
<div class="a" style="left:148.45px;top:421.18px;width:0.6px;height:8.47px;background:#e4e4e4"></div>
<div class="a" style="left:192.2px;top:421.18px;width:0.6px;height:8.47px;background:#e4e4e4"></div>
<div class="a" style="left:224.7px;top:421.18px;width:0.6px;height:8.47px;background:#e4e4e4"></div>
<div class="a" style="left:268.45px;top:421.18px;width:0.6px;height:8.47px;background:#e4e4e4"></div>
<div class="a" style="left:310.95px;top:421.18px;width:0.6px;height:8.47px;background:#e4e4e4"></div>
<div class="a" style="left:353.45px;top:421.18px;width:0.6px;height:8.47px;background:#e4e4e4"></div>
<div class="a" style="left:396.7px;top:421.18px;width:0.6px;height:8.47px;background:#e4e4e4"></div>
<div class="a" style="left:490.95px;top:421.18px;width:0.6px;height:8.47px;background:#e4e4e4"></div>
<div class="a" style="left:534.2px;top:421.18px;width:0.6px;height:8.47px;background:#e4e4e4"></div>
<div class="a" style="left:575.95px;top:421.18px;width:0.6px;height:8.47px;background:#e4e4e4"></div>
<div class="a" style="left:619.45px;top:421.18px;width:0.6px;height:8.47px;background:#e4e4e4"></div>
<div class="a" style="left:665.95px;top:421.18px;width:0.6px;height:8.47px;background:#e4e4e4"></div>
<div class="t r k" style="left:55px;width:91.95px;top:423.48px;font-size:5.3px;transform:scaleX(0.85);transform-origin:100% 0;color:#111111">2025.04.20 23:09:44</div>
<div class="t r k" style="left:148.75px;width:41.95px;top:423.48px;font-size:5.3px;transform:scaleX(0.85);transform-origin:100% 0;color:#111111;letter-spacing:0.15px">sell</div>
<div class="t r k" style="left:192.5px;width:30.7px;top:423.48px;font-size:5.3px;transform:scaleX(0.85);transform-origin:100% 0;color:#111111">80.48</div>
<div class="t r k" style="left:225px;width:41.95px;top:423.48px;font-size:5.3px;transform:scaleX(0.85);transform-origin:100% 0;color:#111111;letter-spacing:0.15px">btcusdp</div>
<div class="t r k" style="left:268.75px;width:40.7px;top:423.48px;font-size:5.3px;transform:scaleX(0.85);transform-origin:100% 0;color:#111111">84886.00</div>
<div class="t r k" style="left:311.25px;width:40.7px;top:423.48px;font-size:5.3px;transform:scaleX(0.85);transform-origin:100% 0;color:#222">84873.00</div>
<div class="t r k" style="left:353.75px;width:41.45px;top:423.48px;font-size:5.3px;transform:scaleX(0.85);transform-origin:100% 0;color:#111111">84269.19</div>
<div class="t r k" style="left:397px;width:92.45px;top:423.48px;font-size:5.3px;transform:scaleX(0.85);transform-origin:100% 0;color:#111111">2025.04.20 23:09:50</div>
<div class="t r k" style="left:491.25px;width:41.45px;top:423.48px;font-size:5.3px;transform:scaleX(0.85);transform-origin:100% 0;color:#111111">84873.00</div>
<div class="t r k" style="left:534.5px;width:39.95px;top:423.48px;font-size:5.3px;transform:scaleX(0.85);transform-origin:100% 0;color:#111111">-321.92</div>
<div class="t r k" style="left:576.25px;width:41.7px;top:423.48px;font-size:5.3px;transform:scaleX(0.85);transform-origin:100% 0;color:#111111">0.00</div>
<div class="t r k" style="left:619.75px;width:44.7px;top:423.48px;font-size:5.3px;transform:scaleX(0.85);transform-origin:100% 0;color:#111111">1 046.24</div>
<div class="t r k" style="left:666.25px;width:130.15px;top:423.48px;font-size:5.3px;transform:scaleX(0.85);transform-origin:100% 0;color:#111111;letter-spacing:0.3px">memberforex.com[sl]</div>
<svg class="a" style="left:0;top:421.18px" width="9" height="9" viewBox="0 0 9 9"><path d="M1.6 1.2 h3 l1.5 1.5 v5 h-4.5z" fill="#fff" stroke="#7a7a7a" stroke-width="0.45"/><path d="M4.6 1.2 v1.5 h1.5" fill="none" stroke="#555" stroke-width="0.45"/><circle cx="5.2" cy="6.5" r="1.45" fill="#e0502a"/></svg>
<div class="t" style="left:8.1px;top:424.28px;font-size:4.9px;color:#d8d4b0">1</div>
<div class="t" style="left:10.82px;top:424.28px;font-size:4.9px;color:#111111">2651176</div>
<div class="a" style="left:10.3px;top:216.2px;width:3.3px;height:213px;background:#d2d2d2"></div>
<div class="a" style="left:28px;top:216.2px;width:3.1px;height:213px;background:#d2d2d2"></div>
<div class="a" style="left:0;top:429.2px;width:800px;height:0.7px;background:#a0a0a0"></div>
<div class="a" style="left:0;top:429.9px;width:800px;height:8.4px;background:#f0f0f0"></div>
<div class="a" style="left:50.6px;top:429.2px;width:44.5px;height:8px;background:#fff;border-left:0.7px solid #555;border-right:0.7px solid #555;border-bottom:0.7px solid #555"></div>
<div class="t" style="left:5px;top:431.6px;font-size:4.9px;color:#7a7a7a;letter-spacing:0.08px">Trade</div>
<div class="t" style="left:25.6px;top:431.6px;font-size:4.9px;color:#7a7a7a;letter-spacing:0.08px">Exposure</div>
<div class="t" style="left:54px;top:431.6px;font-size:4.9px;color:#111;letter-spacing:0.08px">Account History</div>
<div class="t" style="left:98.8px;top:431.6px;font-size:4.9px;color:#7a7a7a;letter-spacing:0.08px">News</div>
<div class="t" style="left:120px;top:431.6px;font-size:4.9px;color:#7a7a7a;letter-spacing:0.08px">Alerts</div>
<div class="t" style="left:141.3px;top:431.6px;font-size:4.9px;color:#7a7a7a;letter-spacing:0.08px">Mailbox</div>
<div class="t" style="left:171px;top:431.6px;font-size:4.9px;color:#7a7a7a;letter-spacing:0.08px">Market</div>
<div class="t" style="left:202.4px;top:431.6px;font-size:4.9px;color:#7a7a7a;letter-spacing:0.08px">Articles</div>
<div class="t" style="left:227.6px;top:431.6px;font-size:4.9px;color:#7a7a7a;letter-spacing:0.08px">Code Base</div>
<div class="t" style="left:259px;top:431.6px;font-size:4.9px;color:#7a7a7a;letter-spacing:0.08px">Experts</div>
<div class="t" style="left:284.2px;top:431.6px;font-size:4.9px;color:#7a7a7a;letter-spacing:0.08px">Journal</div>
<div class="a" style="left:21.5px;top:431px;width:0.6px;height:5.2px;background:#999"></div>
<div class="a" style="left:116.2px;top:431px;width:0.6px;height:5.2px;background:#999"></div>
<div class="a" style="left:137.2px;top:431px;width:0.6px;height:5.2px;background:#999"></div>
<div class="a" style="left:166.5px;top:431px;width:0.6px;height:5.2px;background:#999"></div>
<div class="a" style="left:198.4px;top:431px;width:0.6px;height:5.2px;background:#999"></div>
<div class="a" style="left:223.4px;top:431px;width:0.6px;height:5.2px;background:#999"></div>
<div class="a" style="left:255.3px;top:431px;width:0.6px;height:5.2px;background:#999"></div>
<div class="a" style="left:279.8px;top:431px;width:0.6px;height:5.2px;background:#999"></div>
<div class="a" style="left:304.7px;top:431px;width:0.6px;height:5.2px;background:#999"></div>
<div class="t" style="left:160.8px;top:434.4px;font-size:2.8px;color:#e02020;font-weight:bold">6</div>
<div class="t" style="left:187.8px;top:434px;font-size:2.8px;color:#e02020;font-weight:bold">120</div>
<div class="a" style="left:0;top:438.2px;width:800px;height:0.6px;background:#d8d8d8"></div>
<div class="a" style="left:0;top:438.8px;width:800px;height:10.4px;background:#f0f0f0"></div>
<div class="t" style="left:-1.6px;top:444.0px;font-size:5px;color:#1a1a1a">r Help, press F1</div>
<div class="t" style="left:515.4px;top:444.4px;font-size:4.7px;color:#1a1a1a">Default</div>
<div class="t" style="left:564.7px;top:444.4px;font-size:4.7px;color:#1a1a1a">2025.04.21 02:30</div>
<div class="t" style="left:608.4px;top:444.4px;font-size:4.7px;color:#1a1a1a">O: 85047.20</div>
<div class="t" style="left:638px;top:444.4px;font-size:4.7px;color:#1a1a1a">H: 85111.40</div>
<div class="t" style="left:668.4px;top:444.4px;font-size:4.7px;color:#1a1a1a">L: 84944.20</div>
<div class="t" style="left:697.3px;top:444.4px;font-size:4.7px;color:#1a1a1a">C: 84979.40</div>
<div class="t" style="left:727px;top:444.4px;font-size:4.7px;color:#1a1a1a">V: 246</div>
<div class="t" style="left:766.3px;top:444.4px;font-size:4.7px;color:#1a1a1a">1009/294 kb</div>
<div class="a" style="left:513px;top:439.5px;width:0.7px;height:10px;background:#cfcfcf"></div>
<div class="a" style="left:562.8px;top:439.5px;width:0.7px;height:10px;background:#cfcfcf"></div>
<div class="a" style="left:606px;top:439.5px;width:0.7px;height:10px;background:#cfcfcf"></div>
<div class="a" style="left:635.5px;top:439.5px;width:0.7px;height:10px;background:#cfcfcf"></div>
<div class="a" style="left:666.5px;top:439.5px;width:0.7px;height:10px;background:#cfcfcf"></div>
<div class="a" style="left:694.6px;top:439.5px;width:0.7px;height:10px;background:#cfcfcf"></div>
<div class="a" style="left:724.5px;top:439.5px;width:0.7px;height:10px;background:#cfcfcf"></div>
<div class="a" style="left:752.25px;top:439.5px;width:0.7px;height:10px;background:#cfcfcf"></div>
<svg class="a" style="left:754.3px;top:442.4px" width="10" height="6" viewBox="0 0 10 6"><rect x="0" y="0" width="10" height="6" fill="#7aa838"/><path d="M0 6 V4.2 L10 1.2 V6z" fill="#2a6a9a"/><path d="M2 0 V6 M4 0 V6 M6 0 V6 M8 0 V6" stroke="#f0f0f0" stroke-width="0.4"/></svg>
<div class="a" style="left:0;top:449.2px;width:800px;height:0.8px;background:#8a8a8a"></div>
<div class="a" style="left:0;top:449.2px;width:8px;height:0.8px;background:#333"></div>
<div class="a" style="left:117px;top:449.2px;width:396px;height:0.8px;background:#333"></div>
</body></html>
